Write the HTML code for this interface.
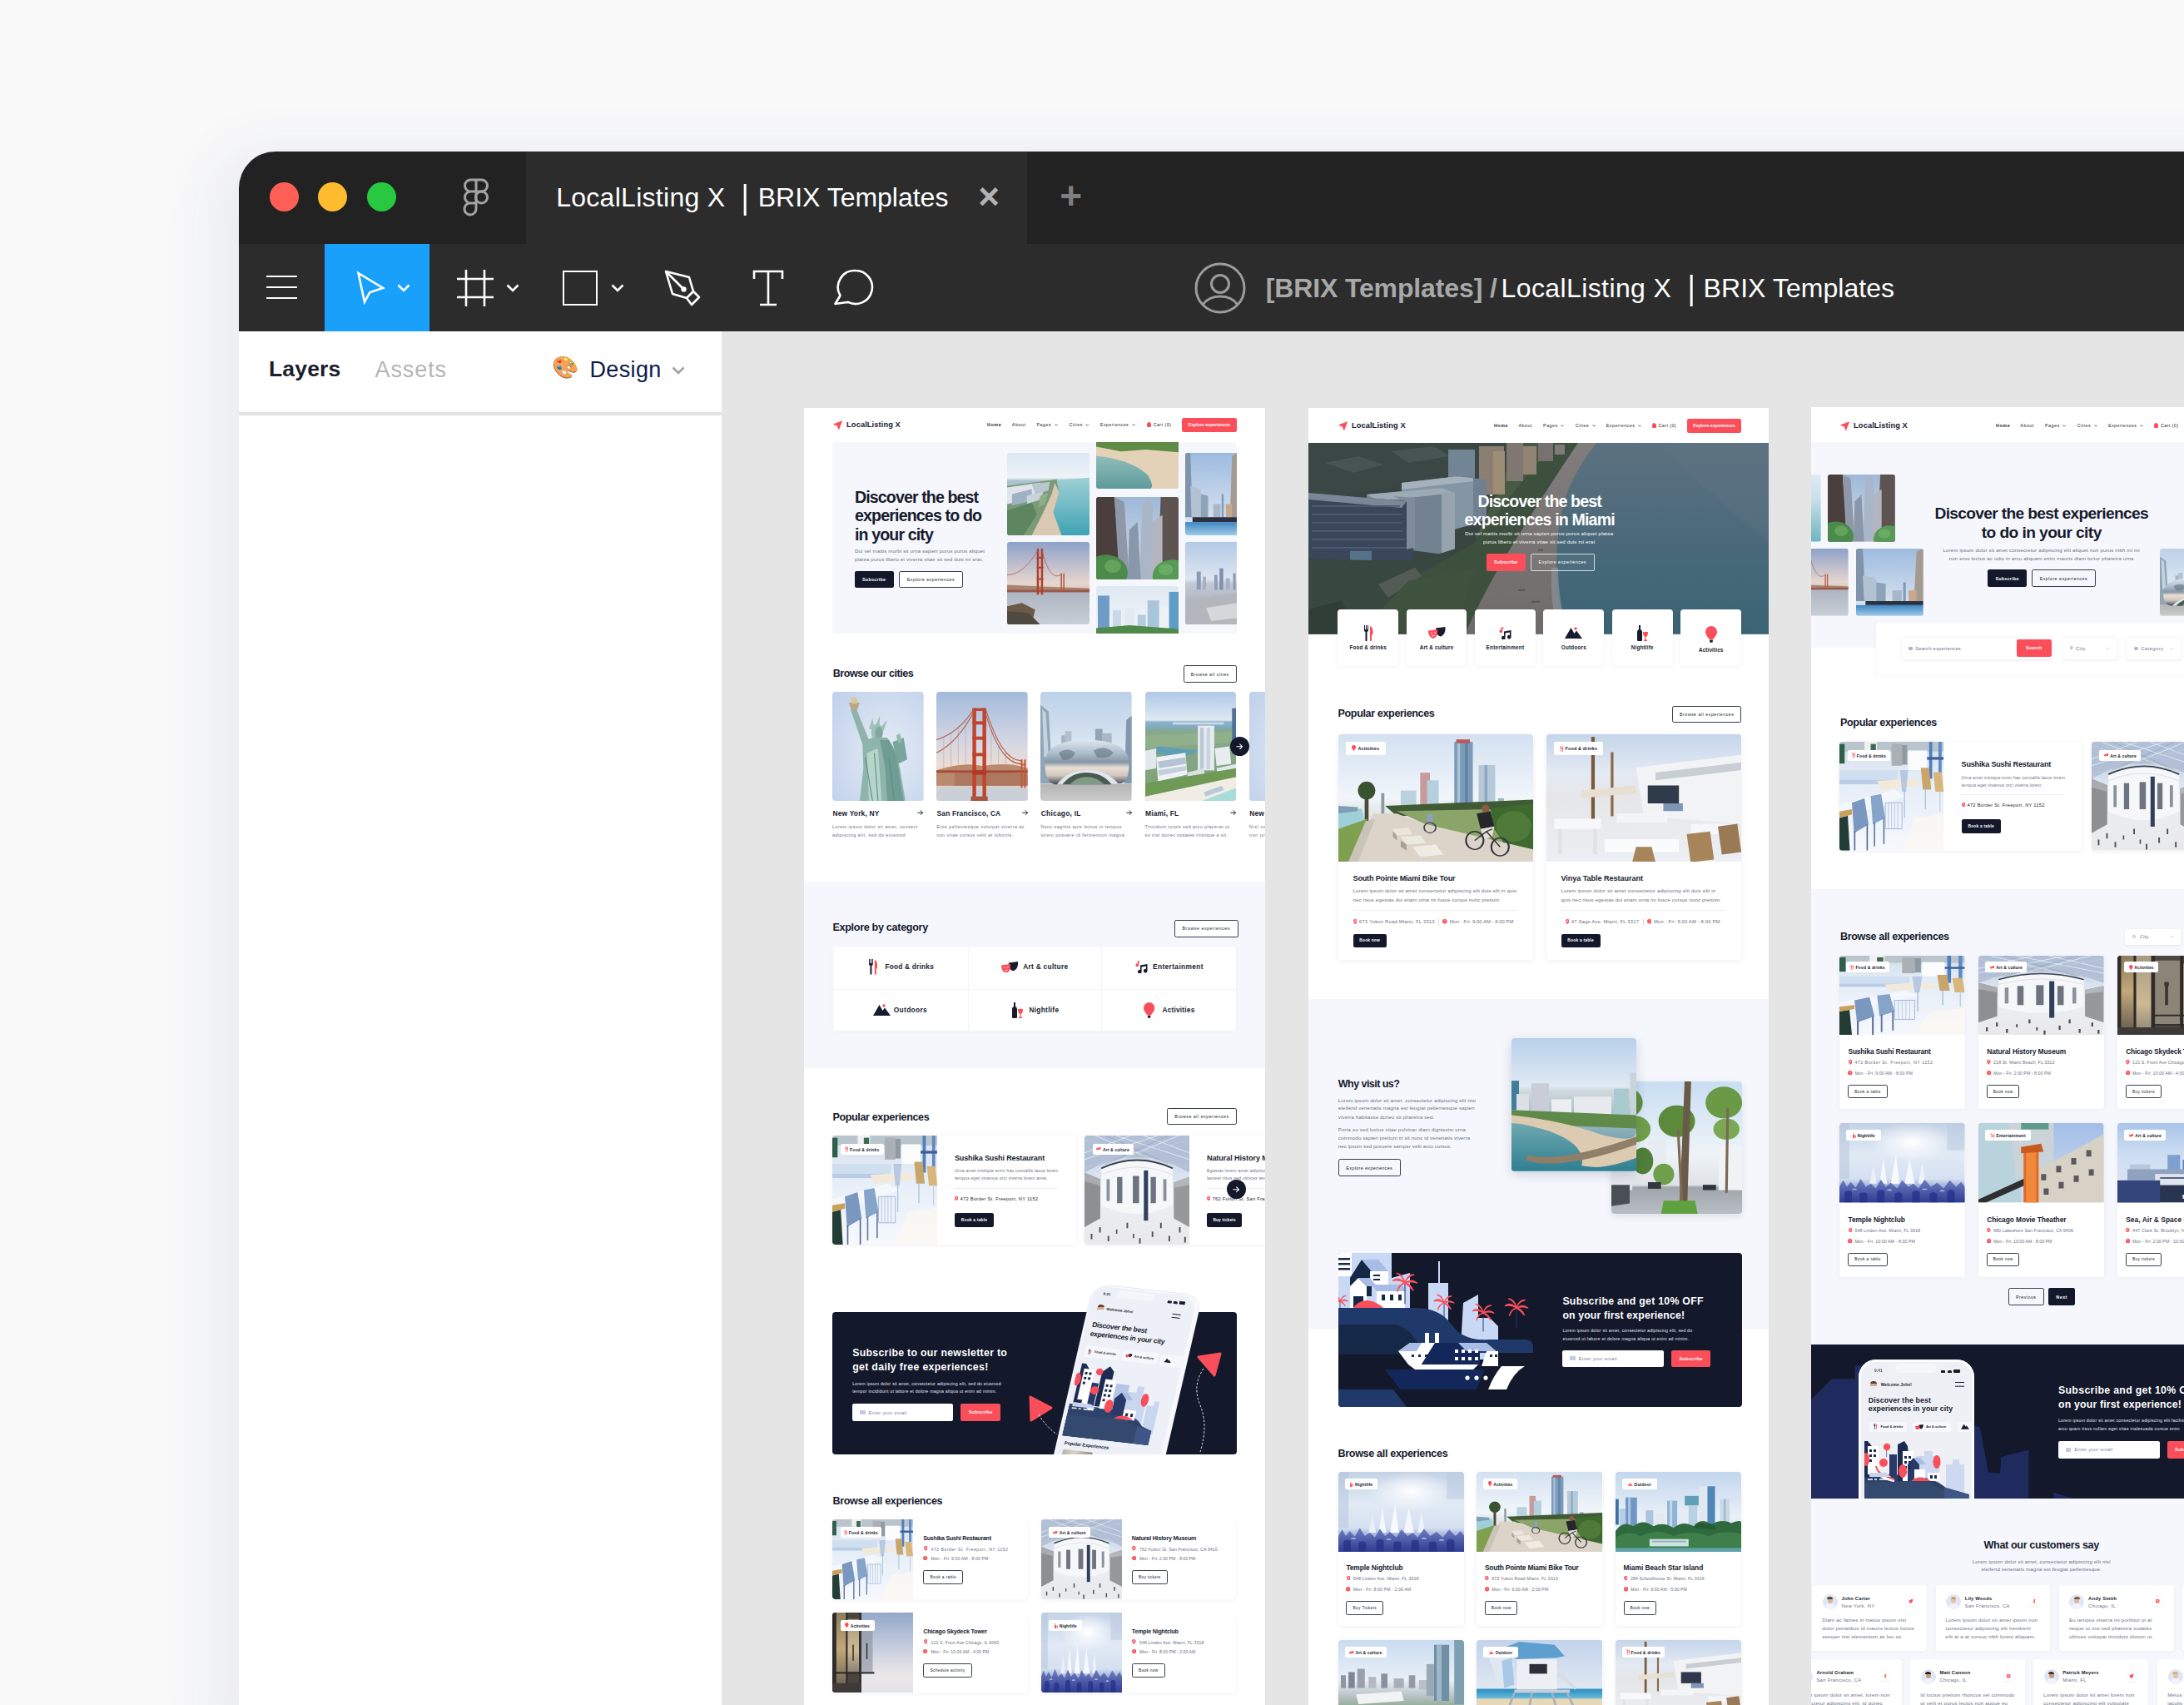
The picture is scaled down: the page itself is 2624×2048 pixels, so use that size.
<!DOCTYPE html>
<html lang="en"><head><meta charset="utf-8"><title>LocalListing X | BRIX Templates</title>
<style>
*{box-sizing:border-box;margin:0;padding:0}
html,body{width:2624px;height:2048px;overflow:hidden;background:#f9f9fa;font-family:"Liberation Sans",sans-serif}
#win{position:absolute;left:287px;top:182px;width:2400px;height:1900px;border-radius:44px 0 0 0;background:#fff;box-shadow:-20px 10px 70px 10px rgba(40,50,110,.07);overflow:hidden}
#win div,#win span,#win svg{position:absolute}
#win span{white-space:nowrap}
#tb{left:0;top:0;width:2400px;height:111px;background:#222}
#tool{left:0;top:110.5px;width:2400px;height:105.5px;background:#2c2c2c}
#canvas{left:580px;top:216px;width:1800px;height:1700px;background:#e5e5e5;overflow:hidden}
.ab{background:#fff;overflow:hidden}

</style></head><body>
<svg width="0" height="0" style="position:absolute;left:0;top:0"><defs><linearGradient id="gMi" x1="0" y1="0" x2="0" y2="1"><stop offset="0" stop-color="#dbe7f3"/><stop offset="0.3" stop-color="#eef3f7"/><stop offset="0.34" stop-color="#a9c4cf"/><stop offset="1" stop-color="#8fb6bf"/></linearGradient><linearGradient id="gSea" x1="0" y1="0" x2="0" y2="1"><stop offset="0" stop-color="#9fd0d6"/><stop offset="1" stop-color="#3fa3b3"/></linearGradient><linearGradient id="gSeaD" x1="0" y1="0" x2="0" y2="1"><stop offset="0" stop-color="#667c8b"/><stop offset="0.45" stop-color="#547585"/><stop offset="1" stop-color="#3f6e7e"/></linearGradient><linearGradient id="gSandD" x1="0" y1="0" x2="0" y2="1"><stop offset="0" stop-color="#8f8a88"/><stop offset="1" stop-color="#7b7672"/></linearGradient><linearGradient id="gGG" x1="0" y1="0" x2="0" y2="1"><stop offset="0" stop-color="#8ea2c9"/><stop offset="0.5" stop-color="#e6d6cf"/><stop offset="0.56" stop-color="#dccbc2"/><stop offset="0.58" stop-color="#aab3c0"/><stop offset="1" stop-color="#c9ced6"/></linearGradient><linearGradient id="gG2" x1="0" y1="0" x2="0" y2="1"><stop offset="0" stop-color="#a3badb"/><stop offset="0.45" stop-color="#d3d6e3"/><stop offset="0.68" stop-color="#ebddd6"/><stop offset="0.86" stop-color="#d9cdc9"/><stop offset="1" stop-color="#cdd2da"/></linearGradient><linearGradient id="gBe" x1="0" y1="0" x2="0" y2="1"><stop offset="0" stop-color="#8fbdb8"/><stop offset="1" stop-color="#5f9a9c"/></linearGradient><linearGradient id="gNy" x1="0" y1="0" x2="0" y2="1"><stop offset="0" stop-color="#9fb8d8"/><stop offset="1" stop-color="#d5dfea"/></linearGradient><linearGradient id="gSk" x1="0" y1="0" x2="0" y2="1"><stop offset="0" stop-color="#dfe9f2"/><stop offset="1" stop-color="#f2f5f8"/></linearGradient><linearGradient id="gRi" x1="0" y1="0" x2="0" y2="1"><stop offset="0" stop-color="#9dbbe0"/><stop offset="0.7" stop-color="#cfdcec"/><stop offset="1" stop-color="#dfe8f2"/></linearGradient><linearGradient id="gRw" x1="0" y1="0" x2="0" y2="1"><stop offset="0" stop-color="#3f86c3"/><stop offset="1" stop-color="#9fcbe6"/></linearGradient><linearGradient id="gLa" x1="0" y1="0" x2="0" y2="1"><stop offset="0" stop-color="#b3c9e6"/><stop offset="0.45" stop-color="#dde6f0"/><stop offset="0.5" stop-color="#c3cad6"/><stop offset="1" stop-color="#9a9fa8"/></linearGradient><radialGradient id="gLi" cx="0.6" cy="0.55" r="0.75"><stop offset="0" stop-color="#e6ecf6"/><stop offset="1" stop-color="#c2d2eb"/></radialGradient><linearGradient id="gBn" x1="0" y1="0" x2="0" y2="1"><stop offset="0" stop-color="#bcd1e8"/><stop offset="0.62" stop-color="#e1eaf3"/><stop offset="0.84" stop-color="#dfe5ea"/><stop offset="0.85" stop-color="#b5b5b6"/><stop offset="1" stop-color="#cbcbcc"/></linearGradient><linearGradient id="gBn2" x1="0" y1="0" x2="0" y2="1"><stop offset="0" stop-color="#dce6ef"/><stop offset="0.3" stop-color="#aebdcb"/><stop offset="0.5" stop-color="#8596a6"/><stop offset="0.62" stop-color="#e9dfd5"/><stop offset="0.8" stop-color="#cfc6bd"/><stop offset="1" stop-color="#3f4650"/></linearGradient><linearGradient id="gMc" x1="0" y1="0" x2="0" y2="1"><stop offset="0" stop-color="#afc8e8"/><stop offset="0.26" stop-color="#dfe9f3"/><stop offset="0.275" stop-color="#8fb3cc"/><stop offset="0.33" stop-color="#7fa9bf"/><stop offset="0.35" stop-color="#86a98f"/><stop offset="1" stop-color="#7da26e"/></linearGradient><linearGradient id="gRe" x1="0" y1="0" x2="0" y2="1"><stop offset="0" stop-color="#d3dde8"/><stop offset="0.3" stop-color="#e3ecf6"/><stop offset="0.7" stop-color="#eef3fa"/><stop offset="1" stop-color="#f6f8fc"/></linearGradient><linearGradient id="gMu" x1="0" y1="0" x2="0" y2="1"><stop offset="0" stop-color="#b3c3da"/><stop offset="0.3" stop-color="#d3deec"/><stop offset="0.55" stop-color="#eceef2"/><stop offset="1" stop-color="#e9e9eb"/></linearGradient><linearGradient id="gSd" x1="0" y1="0" x2="0" y2="1"><stop offset="0" stop-color="#93a7c9"/><stop offset="0.5" stop-color="#cdd3e0"/><stop offset="0.78" stop-color="#ebe7e8"/><stop offset="1" stop-color="#e3e3e8"/></linearGradient><linearGradient id="gSd2" x1="0" y1="0" x2="0" y2="1"><stop offset="0" stop-color="#8d7c5e"/><stop offset="0.45" stop-color="#c2a878"/><stop offset="1" stop-color="#5f574b"/></linearGradient><linearGradient id="gSd3" x1="0" y1="0" x2="0" y2="1"><stop offset="0" stop-color="#a79a82"/><stop offset="0.6" stop-color="#cdb993"/><stop offset="1" stop-color="#8a8275"/></linearGradient><linearGradient id="gCl" x1="0" y1="0" x2="0" y2="1"><stop offset="0" stop-color="#c3d2e6"/><stop offset="0.4" stop-color="#e1eaf5"/><stop offset="0.7" stop-color="#d5e0f0"/><stop offset="0.78" stop-color="#a9b8dc"/><stop offset="1" stop-color="#4f5fa8"/></linearGradient><radialGradient id="gClr" cx="0.5" cy="0.5" r="0.5"><stop offset="0" stop-color="#ffffff"/><stop offset="1" stop-color="rgba(255,255,255,0)"/></radialGradient><linearGradient id="gClc" x1="0" y1="0" x2="0" y2="1"><stop offset="0" stop-color="#6f7fc0"/><stop offset="1" stop-color="#2f3c92"/></linearGradient><linearGradient id="gBk" x1="0" y1="0" x2="0" y2="1"><stop offset="0" stop-color="#d3e1f1"/><stop offset="0.5" stop-color="#f1f6fa"/><stop offset="0.56" stop-color="#e6ecef"/><stop offset="1" stop-color="#d9d0c4"/></linearGradient><linearGradient id="gTe" x1="0" y1="0" x2="0" y2="1"><stop offset="0" stop-color="#c5d5ea"/><stop offset="0.3" stop-color="#e3eaf3"/><stop offset="0.5" stop-color="#e6e6e8"/><stop offset="1" stop-color="#eceff3"/></linearGradient><linearGradient id="gAe" x1="0" y1="0" x2="0" y2="1"><stop offset="0" stop-color="#b9d0ea"/><stop offset="0.36" stop-color="#dfe9f3"/><stop offset="0.4" stop-color="#cfd8dd"/><stop offset="1" stop-color="#3f8494"/></linearGradient><linearGradient id="gAe2" x1="0" y1="0" x2="0" y2="1"><stop offset="0" stop-color="#6fa8b0"/><stop offset="1" stop-color="#2f7f92"/></linearGradient><linearGradient id="gPa" x1="0" y1="0" x2="0" y2="1"><stop offset="0" stop-color="#c9def2"/><stop offset="0.55" stop-color="#eef3f8"/><stop offset="0.78" stop-color="#dfe3e6"/><stop offset="0.8" stop-color="#9fa5ab"/><stop offset="1" stop-color="#b9bec4"/></linearGradient><linearGradient id="gIs" x1="0" y1="0" x2="0" y2="1"><stop offset="0" stop-color="#c3d6ee"/><stop offset="0.55" stop-color="#e9f0f7"/><stop offset="1" stop-color="#dfe8ee"/></linearGradient><linearGradient id="gAc" x1="0" y1="0" x2="0" y2="1"><stop offset="0" stop-color="#c9dcf0"/><stop offset="0.5" stop-color="#e8eff6"/><stop offset="0.7" stop-color="#b9c3c6"/><stop offset="1" stop-color="#5f8f55"/></linearGradient><linearGradient id="gGu" x1="0" y1="0" x2="0" y2="1"><stop offset="0" stop-color="#c3d3ea"/><stop offset="0.6" stop-color="#dfe7f2"/><stop offset="0.62" stop-color="#2f8fc0"/><stop offset="0.72" stop-color="#5fb8dc"/><stop offset="0.74" stop-color="#e8d8b8"/><stop offset="1" stop-color="#e3d3b3"/></linearGradient><linearGradient id="gTh" x1="0" y1="0" x2="0" y2="1"><stop offset="0" stop-color="#a3bfe8"/><stop offset="1" stop-color="#cfdcf0"/></linearGradient><linearGradient id="gSa" x1="0" y1="0" x2="0" y2="1"><stop offset="0" stop-color="#a9c5ea"/><stop offset="0.42" stop-color="#cfdff2"/><stop offset="1" stop-color="#dfe6f0"/></linearGradient><linearGradient id="gTl" x1="0" y1="0" x2="0" y2="1"><stop offset="0" stop-color="#dfeaf3"/><stop offset="0.35" stop-color="#c9e0ea"/><stop offset="1" stop-color="#6fb5c0"/></linearGradient><filter id="b1" x="-5%" y="-5%" width="110%" height="110%"><feGaussianBlur stdDeviation="1"/></filter><filter id="b2" x="-5%" y="-5%" width="110%" height="110%"><feGaussianBlur stdDeviation="2.500"/></filter><filter id="b05"><feGaussianBlur stdDeviation=".5"/></filter></defs><symbol id="p-miami" viewBox="0 0 100 100" preserveAspectRatio="none"><rect x="0" y="0" width="100" height="100" fill="url(#gMi)"/><polygon points="58,33 100,30 100,100 66,100 56,72 63,48" fill="url(#gSea)"/><polygon points="0,40 60,32 63,48 56,72 66,100 0,100" fill="#7b9b78"/><polygon points="58,36 63,48 56,72 66,100 30,100 44,72 54,50" fill="#d9c9b2"/><polygon points="0,42 40,36 38,52 20,58 0,62" fill="#dfe5ea"/><polygon points="6,50 30,44 30,58 6,64" fill="#9fb2c4"/><polygon points="24,52 44,46 42,56 24,62" fill="#c9d3dc"/><polygon points="0,70 30,60 36,75 20,100 0,100" fill="#5d8560"/><polygon points="30,38 52,35 50,46 34,50" fill="#b9c6cf"/><polygon points="40,52 50,48 46,62 38,66" fill="#8fae86"/></symbol><symbol id="p-miamidark" viewBox="0 0 554 230" preserveAspectRatio="none"><rect x="0" y="0" width="554" height="230" fill="#3d4a44"/><path d="M338 0H554V230H306Q296 190 296 150Q296 100 306 60Q318 30 338 0Z" fill="url(#gSeaD)"/><path d="M420 0H554V120Q480 60 420 0Z" fill="#6d8392" opacity=".35" filter="url(#b2)"/><path d="M322 0H346Q322 30 310 62Q298 100 298 150Q298 195 310 230H186Q214 170 252 110Q290 50 322 0Z" fill="url(#gSandD)"/><path d="M300 150Q300 190 312 230H300Q290 190 292 150Z" fill="#9aa3a6" opacity=".7"/><path d="M286 0H324Q290 50 252 112Q214 172 188 230H60L120 160L200 120Z" fill="#42573f"/><path d="M200 118L262 40L296 0H240L226 60Z" fill="#4f6248"/><path d="M0 0H250L226 64L110 52L0 70Z" fill="#3f4d47"/><path d="M20 24l40-8 30 10-36 10zM100 10l50-6 20 12-50 8z" fill="#56635e" opacity=".7"/><rect x="168" y="8" width="32" height="34" fill="#7f93a3"/><rect x="205" y="4" width="30" height="58" fill="#9a8d7c"/><rect x="222" y="10" width="14" height="52" fill="#b09c80"/><rect x="238" y="0" width="20" height="46" fill="#8f8479"/><rect x="258" y="4" width="16" height="34" fill="#a3927e"/><rect x="276" y="0" width="18" height="22" fill="#857d78"/><rect x="296" y="2" width="12" height="12" fill="#8d8884"/><path d="M112 48L198 38V98L176 104L112 98Z" fill="#93a5b3"/><path d="M112 48L198 38V46L112 56Z" fill="#b9c7d1"/><path d="M176 40L214 44V92L198 98V38Z" fill="#7d8e9c"/><path d="M70 62L160 54L176 60V128L160 134L70 122Z" fill="#7f909f"/><path d="M70 62L160 54L176 60L84 70Z" fill="#aebdc8"/><path d="M160 60L176 60V128L160 134Z" fill="#a9b7c2"/><path d="M0 60L118 70V122L126 124V142L60 146L0 138Z" fill="#3f4d60"/><path d="M0 60L118 70L112 78L0 68Z" fill="#8797a6"/><path d="M102 64L128 66V126L118 128L118 70Z" fill="#8d9ba8"/><path d="M4 76H110M4 86H112M4 96H112M4 106H114M4 116H116M4 126H118" fill="none" stroke="#56657a" stroke-width="1.600"/><path d="M50 130h26v12H50z" fill="#5f7e98"/><path d="M0 140L130 142L200 120L120 166L60 230H0Z" fill="#3d4d42"/><path d="M84 170L128 150L136 160L96 186Z" fill="#5d6459"/><path d="M0 200L40 190L60 230H0Z" fill="#35423a"/><path d="M120 166L200 150L186 200L150 230H60Z" fill="#45593f"/><path d="M236 150h6v2h-6zM252 176h8v2h-8zM268 190h10v2h-10zM276 128h6v2h-6z" fill="#5f5d5e"/><rect x="0" y="0" width="554" height="230" fill="#1b2433" opacity=".12"/></symbol><symbol id="p-gate" viewBox="0 0 100 100" preserveAspectRatio="none"><rect x="0" y="0" width="100" height="100" fill="url(#gGG)"/><polygon points="0,52 40,54 100,56 100,60 0,60" fill="#a88472"/><rect x="0" y="58" width="100" height="3" fill="#9a5a48"/><rect x="36" y="8" width="2.6" height="56" fill="#b0412c"/><rect x="41" y="8" width="2.6" height="56" fill="#b0412c"/><rect x="36" y="18" width="8" height="2" fill="#b0412c"/><rect x="36" y="30" width="8" height="2" fill="#b0412c"/><rect x="36" y="44" width="8" height="2" fill="#b0412c"/><rect x="65" y="38" width="1.6" height="22" fill="#b85a42"/><rect x="68" y="38" width="1.6" height="22" fill="#b85a42"/><path d="M0 40 Q20 40 38 9 M42 9 Q52 50 66 39" fill="none" stroke="#b0614c" stroke-width=".8"/><polygon points="0,78 18,74 34,82 30,100 0,100" fill="#6b5a48"/><polygon points="0,84 26,86 40,100 0,100" fill="#4f4a42"/></symbol><symbol id="p-gate2" viewBox="0 0 100 100" preserveAspectRatio="none"><rect x="0" y="0" width="100" height="100" fill="url(#gG2)"/><path d="M0 72Q30 64 50 68Q80 64 100 70V86H0Z" fill="#b98a6e"/><path d="M20 74Q50 70 100 76V86H20Z" fill="#a8705a" opacity=".7"/><rect x="0" y="88" width="100" height="12" fill="#cbd0d8"/><rect x="0" y="72" width="100" height="2.2" fill="#a84c36"/><rect x="39.5" y="15" width="4" height="85" fill="#c0432b"/><rect x="50.5" y="15" width="4" height="85" fill="#c0432b"/><rect x="39.5" y="15" width="15" height="2.5" fill="#c0432b"/><rect x="39.5" y="27" width="15" height="3" fill="#c0432b"/><rect x="39.5" y="41" width="15" height="3" fill="#c0432b"/><rect x="39.5" y="56" width="15" height="3" fill="#c0432b"/><rect x="39.5" y="72" width="15" height="4" fill="#b03a25"/><rect x="38" y="96" width="18" height="4" fill="#a8553f"/><rect x="92.5" y="62" width="1.8" height="26" fill="#c4553c"/><rect x="96" y="62" width="1.8" height="26" fill="#c4553c"/><rect x="92.5" y="66" width="5.3" height="1.5" fill="#c4553c"/><path d="M0 44Q24 38 41 16M0 56Q24 46 41 18M54 16Q72 64 93 63M54 20Q70 66 93 66" fill="none" stroke="#b0614c" stroke-width=".9"/><path d="M8 42v30M16 38v34M24 33v39M32 26v46M60 34v38M68 48v24M76 56v16M84 61v11" fill="none" stroke="#c08a7a" stroke-width=".35"/><rect x="38" y="96" width="18" height="4" fill="#a8553f"/></symbol><symbol id="p-beach" viewBox="0 0 100 100" preserveAspectRatio="none"><rect x="0" y="0" width="100" height="100" fill="#e3d2b8"/><polygon points="0,0 100,0 100,22 60,16 30,20 0,10" fill="#5f8b47"/><path d="M0 30 Q40 36 62 70 Q70 92 66 100 L0 100Z" fill="url(#gBe)"/></symbol><symbol id="p-nyc" viewBox="0 0 100 100" preserveAspectRatio="none"><rect x="0" y="0" width="100" height="100" fill="url(#gNy)"/><polygon points="0,0 22,0 30,100 0,100" fill="#4a3f3d"/><polygon points="22,0 34,6 40,100 28,100" fill="#8f98a8"/><polygon points="56,8 62,0 68,10 70,100 52,100" fill="#a9b6c8"/><polygon points="40,40 50,30 54,100 38,100" fill="#8a97ab"/><polygon points="78,0 100,0 100,100 74,100" fill="#5d5350"/><polygon points="68,30 80,22 80,100 66,100" fill="#b3b6be"/><ellipse cx="12" cy="92" rx="26" ry="22" fill="#4a8a4a"/><ellipse cx="92" cy="96" rx="24" ry="20" fill="#579a55"/><ellipse cx="20" cy="84" rx="10" ry="8" fill="#63a35d"/><ellipse cx="84" cy="88" rx="9" ry="7" fill="#6aac63"/></symbol><symbol id="p-skyline" viewBox="0 0 100 100" preserveAspectRatio="none"><rect x="0" y="0" width="100" height="100" fill="url(#gSk)"/><rect x="2" y="20" width="14" height="80" fill="#6f9cc6"/><rect x="20" y="50" width="10" height="50" fill="#c9d8e6"/><rect x="34" y="46" width="12" height="54" fill="#e3ebf2"/><rect x="50" y="60" width="10" height="40" fill="#b5cde0"/><rect x="62" y="30" width="14" height="70" fill="#a9c5dc"/><rect x="78" y="44" width="12" height="56" fill="#eef2f6"/><rect x="88" y="12" width="12" height="88" fill="#5f9cc8"/><polygon points="0,88 40,82 100,90 100,100 0,100" fill="#4f8a4a"/></symbol><symbol id="p-river" viewBox="0 0 100 100" preserveAspectRatio="none"><rect x="0" y="0" width="100" height="100" fill="url(#gRi)"/><polygon points="0,0 10,0 14,78 0,78" fill="#7f93ab"/><polygon points="10,40 30,44 30,78 12,78" fill="#b3c2d2"/><polygon points="30,50 44,52 44,78 30,78" fill="#8fa3b8"/><rect x="70" y="50" width="4" height="28" fill="#7f9cc0"/><rect x="54" y="62" width="14" height="16" fill="#a9b8c8"/><polygon points="90,4 100,0 100,78 86,78" fill="#a59a90"/><rect x="78" y="62" width="12" height="16" fill="#c8a890"/><rect x="14" y="78" width="86" height="6" fill="#2b3140"/><rect x="0" y="84" width="100" height="16" fill="url(#gRw)"/></symbol><symbol id="p-la" viewBox="0 0 100 100" preserveAspectRatio="none"><rect x="0" y="0" width="100" height="100" fill="url(#gLa)"/><rect x="22" y="36" width="8" height="22" fill="#8c9bb5"/><rect x="34" y="42" width="6" height="16" fill="#a3afc4"/><rect x="56" y="40" width="6" height="18" fill="#8f9db6"/><rect x="66" y="32" width="7" height="26" fill="#7f8fae"/><rect x="78" y="44" width="8" height="14" fill="#a9b3c6"/><rect x="92" y="38" width="5" height="20" fill="#8c9bb5"/><polygon points="0,70 100,62 100,100 0,100" fill="#b3b6bd"/><polygon points="40,80 100,74 100,92 50,96" fill="#d5d7db"/></symbol><symbol id="p-liberty" viewBox="0 0 100 100" preserveAspectRatio="none"><rect x="0" y="0" width="100" height="100" fill="url(#gLi)"/><polygon points="20,16 26,15 40,44 33,48" fill="#8fb3ab"/><polygon points="18,10 30,10 27,17 21,17" fill="#b9a884"/><ellipse cx="24" cy="8" rx="3.5" ry="3" fill="#d9c79a"/><path d="M40 34 44 24 46 33 52 22 52 33 60 26 56 36Z" fill="#9fc3b8"/><ellipse cx="49" cy="37" rx="6.5" ry="7.5" fill="#9cc0b5"/><ellipse cx="51" cy="38" rx="4" ry="6" fill="#7fa89f"/><polygon points="33,46 44,42 60,42 68,52 74,70 80,100 30,100 34,70" fill="#8db5ab"/><polygon points="52,44 62,44 70,58 78,100 60,100 58,70" fill="#6f9c93"/><polygon points="38,56 50,52 54,100 40,100" fill="#b5d5cb"/><polygon points="66,46 78,42 82,62 72,66" fill="#7aa59c"/><polygon points="70,40 74,38 76,46 72,47" fill="#93b9af"/><path d="M36 60L44 100M46 56L50 100M62 60L68 100" fill="none" stroke="#5f8c84" stroke-width="1"/></symbol><symbol id="p-bean" viewBox="0 0 100 100" preserveAspectRatio="none"><rect x="0" y="0" width="100" height="100" fill="url(#gBn)"/><polygon points="0,12 9,18 12,64 14,84 0,84" fill="#8fa6b8"/><polygon points="2,16 6,19 9,60 4,60" fill="#c3d3df"/><polygon points="94,26 100,22 100,84 92,84" fill="#8298ac"/><rect x="23" y="40" width="5" height="16" fill="#a3b3c3"/><rect x="27" y="36" width="7" height="20" fill="#b3c1cf"/><rect x="60" y="34" width="8" height="22" fill="#93a5b5"/><rect x="68" y="38" width="10" height="18" fill="#a9b8c6"/><rect x="44" y="46" width="8" height="10" fill="#bcc8d4"/><path d="M5 66Q5 44 50 44Q97 44 97 66Q97 85 85 84Q72 71 50 72Q30 72 18 85Q5 85 5 66Z" fill="url(#gBn2)"/><path d="M20 56Q30 50 38 56Q34 64 24 62Z M58 54Q70 48 80 56Q74 62 62 60Z" fill="#5d6c7a" opacity=".55"/><path d="M24 85Q34 74 50 74Q68 74 78 85Z" fill="#4a5a50"/><path d="M32 85Q40 78 50 78Q62 78 70 85Z" fill="#7f9a86"/></symbol><symbol id="p-miamicity" viewBox="0 0 100 100" preserveAspectRatio="none"><rect x="0" y="0" width="100" height="100" fill="url(#gMc)"/><rect x="30" y="28" width="56" height="2" fill="#dfe6ee" opacity=".8"/><polygon points="0,40 100,36 100,46 0,52" fill="#8fb08a"/><polygon points="14,50 60,54 40,60 6,56" fill="#5f9fb5"/><rect x="57.5" y="31" width="18" height="41" fill="#e6ebf1"/><rect x="60" y="33" width="4" height="38" fill="#b9c6d4"/><rect x="67" y="33" width="4" height="38" fill="#c9d3de"/><rect x="95" y="15" width="5" height="42" fill="#50709a"/><polygon points="12,60 44,56 46,76 14,82" fill="#eef1f5"/><polygon points="14,64 44,60 45,66 15,70" fill="#b5c3d2"/><polygon points="14,72 45,68 45,72 15,77" fill="#c3cfdb"/><polygon points="0,54 12,52 12,70 0,72" fill="#e3e8ee"/><polygon points="76,52 92,50 94,66 78,68" fill="#e9edf2"/><polygon points="46,74 64,70 66,80 48,84" fill="#d9dfe7"/><polygon points="78,70 100,66 100,76 80,80" fill="#e3e8ed"/><polygon points="0,84 100,70 100,80 0,96" fill="#6f9a55"/><polygon points="0,96 100,78 100,100 0,100" fill="#f1ede5"/><polygon points="62,100 100,88 100,100" fill="#a9dcd8"/><polygon points="64,92 84,86 86,90 66,96" fill="#b9c9d9"/></symbol><symbol id="p-rest" viewBox="0 0 100 100" preserveAspectRatio="none"><rect x="0" y="0" width="100" height="100" fill="url(#gRe)"/><rect x="0" y="0" width="100" height="9" fill="#b9c4cc"/><rect x="24" y="0" width="12" height="9" fill="#eef0f2"/><rect x="30" y="2" width="5" height="12" fill="#3f6a52"/><rect x="0" y="2" width="5" height="18" fill="#2f5f4a"/><rect x="50" y="2" width="10" height="20" fill="#aab0b3"/><rect x="60" y="3" width="5" height="18" fill="#8f9aa2"/><rect x="66" y="8" width="18" height="18" fill="#fbfcfd"/><rect x="86" y="0" width="3" height="34" fill="#4f7fc0"/><rect x="95" y="0" width="3" height="34" fill="#5f8ac6"/><rect x="84" y="14" width="16" height="2.5" fill="#3f5f98"/><rect x="0" y="26" width="56" height="9" fill="#cfdff0"/><rect x="0" y="35" width="50" height="4" fill="#b9cde6"/><polygon points="36,36 72,34 80,40 40,44" fill="#f3e9d8"/><polygon points="0,58 52,44 64,50 0,72" fill="#f4f7fb"/><polygon points="58,26 66,26 64,46 60,46" fill="#b7c9e2"/><polygon points="78,24 86,24 88,44 80,44" fill="#c9a56a"/><polygon points="90,28 98,28 100,46 92,46" fill="#d9b57a"/><rect x="62" y="44" width="0.8" height="26" fill="#9fb5d6"/><rect x="82" y="42" width="0.8" height="20" fill="#9fb5d6"/><rect x="96" y="44" width="0.8" height="20" fill="#b9c8e0"/><path d="M44 56h16v24H44z" fill="none" stroke="#8fa8d0" stroke-width=".6"/><path d="M47 56v24M50 56v24M53 56v24M56 56v24" fill="none" stroke="#9fb5d8" stroke-width=".5"/><polygon points="12,56 24,52 28,76 14,84" fill="#7a97c0"/><polygon points="30,50 40,48 44,70 32,76" fill="#86a3ca"/><rect x="14" y="82" width="1.3" height="18" fill="#4f6a95"/><rect x="26" y="76" width="1.3" height="24" fill="#4f6a95"/><rect x="33" y="74" width="1.3" height="22" fill="#5f7aa5"/><rect x="42" y="70" width="1.3" height="24" fill="#5f7aa5"/><polygon points="0,70 8,68 10,100 0,100" fill="#243c36"/><polygon points="0,64 12,62 12,67 0,70" fill="#c9a25a"/><polygon points="72,70 100,66 100,100 60,100" fill="#fbf7f3" opacity=".8"/></symbol><symbol id="p-museum" viewBox="0 0 100 100" preserveAspectRatio="none"><rect x="0" y="0" width="100" height="100" fill="url(#gMu)"/><path d="M0 0H100V34Q50 6 0 34Z" fill="#b1c0d6"/><path d="M0 4L100 30M0 30L100 4M10 0L70 24M90 0L30 24M0 16L44 0M100 16L56 0M0 22L70 0M100 22L30 0" fill="none" stroke="#eef2f8" stroke-width=".6"/><path d="M0 4L100 30M0 30L100 4M20 0L80 26M80 0L20 26" fill="none" stroke="#6d7c96" stroke-width=".25"/><polygon points="0,34 15,40 15,76 0,84" fill="#8d8f93"/><polygon points="0,34 15,40 15,46 0,42" fill="#a9abae"/><polygon points="100,38 85,43 85,76 100,84" fill="#96989c"/><polygon points="100,38 85,43 85,48 100,45" fill="#b3b5b8"/><path d="M16 30Q50 14 84 30V64Q50 80 16 64Z" fill="#f6f7f9"/><path d="M16 30Q50 15 84 30" fill="none" stroke="#39414f" stroke-width="1.400"/><path d="M16 36Q50 22 84 36" fill="none" stroke="#d5d9e0" stroke-width=".6"/><rect x="21" y="40" width="3" height="20" fill="#8b919c"/><rect x="31" y="38" width="5" height="24" fill="#6d7480"/><rect x="46" y="37" width="6" height="25" fill="#6d7480"/><rect x="63" y="38" width="5" height="24" fill="#6d7480"/><rect x="75" y="40" width="3" height="20" fill="#8b919c"/><rect x="56.5" y="32" width="4" height="46" fill="#2f3f5c"/><path d="M6 90h1.500v5h-1.500zM14 84h1.500v5h-1.500zM22 92h1.500v5h-1.500zM40 80h1.500v5h-1.500zM52 94h1.500v5h-1.500zM64 88h1.500v5h-1.500zM72 80h1.500v5h-1.500zM80 92h1.500v5h-1.500zM90 84h1.500v5h-1.500zM95 93h1.500v5h-1.500zM30 86h1.300v4h-1.300zM46 90h1.300v4h-1.300z" fill="#4a4d55"/></symbol><symbol id="p-skydeck" viewBox="0 0 100 100" preserveAspectRatio="none"><rect x="0" y="0" width="100" height="100" fill="url(#gSd)"/><rect x="0" y="0" width="36" height="100" fill="#4a443f"/><rect x="0" y="0" width="5" height="100" fill="#2f2b29"/><rect x="5" y="0" width="12" height="100" fill="url(#gSd2)"/><rect x="17" y="0" width="2" height="100" fill="#2d2a28"/><rect x="19" y="8" width="14" height="66" fill="url(#gSd3)"/><rect x="33" y="0" width="3" height="100" fill="#353130"/><rect x="25" y="40" width="1.6" height="20" fill="#3a3634"/><rect x="36" y="18" width="14" height="56" fill="#8b909c" opacity=".6"/><rect x="42" y="38" width="1.6" height="20" fill="#33333a"/><rect x="0" y="74" width="52" height="2.2" fill="#2c2a2b"/><rect x="0" y="88" width="36" height="12" fill="#3d3a38"/></symbol><symbol id="p-skydeck2" viewBox="0 0 100 100" preserveAspectRatio="none"><rect x="0" y="0" width="100" height="100" fill="url(#gSd)"/><rect x="0" y="0" width="86" height="100" fill="#4d4742"/><rect x="0" y="0" width="3" height="100" fill="#2f2b29"/><rect x="3" y="0" width="10" height="100" fill="url(#gSd2)"/><rect x="13" y="0" width="2" height="100" fill="#2d2a28"/><rect x="15" y="0" width="12" height="100" fill="url(#gSd3)"/><rect x="27" y="0" width="3" height="100" fill="#2f2b2a"/><rect x="30" y="6" width="20" height="80" fill="#8d8478"/><rect x="50" y="0" width="2.5" height="100" fill="#2f2b2a"/><rect x="52.5" y="10" width="22" height="76" fill="#a39b92"/><rect x="74.5" y="0" width="2.5" height="100" fill="#353130"/><rect x="77" y="14" width="9" height="70" fill="#b5b0ad"/><rect x="38" y="36" width="2.4" height="26" fill="#3a3634"/><rect x="37.4" y="33" width="3.6" height="5" fill="#3a3634"/><rect x="62" y="36" width="2.4" height="26" fill="#4a4644"/><rect x="61.4" y="33" width="3.6" height="5" fill="#4a4644"/><rect x="28" y="74" width="58" height="2" fill="#2c2a2b"/><rect x="28" y="86" width="58" height="1.6" fill="#2c2a2b"/><rect x="0" y="90" width="86" height="10" fill="#3d3a38"/></symbol><symbol id="p-club" viewBox="0 0 100 100" preserveAspectRatio="none"><rect x="0" y="0" width="100" height="100" fill="url(#gCl)"/><ellipse cx="58" cy="24" rx="34" ry="24" fill="url(#gClr)"/><rect x="0" y="0" width="8" height="70" fill="#b3c4dc" opacity=".5"/><rect x="86" y="0" width="14" height="34" fill="#b9c9e0" opacity=".5"/><polygon points="32,76 35,44 38,76" fill="#f4f7fc"/><polygon points="41,76 45,40 48,76" fill="#f8fafd"/><polygon points="52,76 56,44 60,76" fill="#f4f7fc"/><polygon points="63,76 66,50 69,76" fill="#eef3fa"/><polygon points="24,76 27,54 30,76" fill="#eaf0f9"/><path d="M0 80 L3 72 6 80 9 74 13 81 17 70 21 80 25 76 29 82 33 71 37 80 41 75 46 82 50 72 55 80 59 76 63 82 68 71 73 80 78 75 83 82 88 72 93 80 97 74 100 80V100H0Z" fill="url(#gClc)"/><path d="M4 88a3 3 0 1 1 6 0v12h-6zM16 90a3 3 0 1 1 6 0v10h-6zM30 87a3 3 0 1 1 6 0v13h-6zM44 90a3 3 0 1 1 6 0v10h-6zM58 88a3 3 0 1 1 6 0v12h-6zM72 90a3 3 0 1 1 6 0v10h-6zM86 87a3 3 0 1 1 6 0v13h-6z" fill="#26328a" opacity=".8"/><path d="M10 84a2 2 0 1 1 4 0zM38 85a2 2 0 1 1 4 0zM66 84a2 2 0 1 1 4 0zM80 86a2 2 0 1 1 4 0z" fill="#c9d3f0" opacity=".7"/></symbol><symbol id="p-bike" viewBox="0 0 100 100" preserveAspectRatio="none"><rect x="0" y="0" width="100" height="100" fill="url(#gBk)"/><rect x="59.5" y="6" width="9.5" height="49" fill="#7a9ab8"/><rect x="61" y="6" width="1.5" height="49" fill="#a9c3d8"/><rect x="65" y="6" width="1.5" height="49" fill="#5f83a6"/><rect x="60.5" y="4" width="7" height="3" fill="#b85a5a"/><rect x="72" y="24" width="8.5" height="31" fill="#b5c9d9"/><rect x="75" y="24" width="1.5" height="31" fill="#8fa9c0"/><rect x="42" y="30" width="5" height="26" fill="#c99a9a"/><rect x="45.5" y="36" width="6" height="20" fill="#b5cfde"/><rect x="32" y="44" width="8" height="12" fill="#b9d3dc"/><rect x="82" y="50" width="3" height="6" fill="#9fb5c8"/><rect x="13.5" y="42" width="2" height="26" fill="#4a4a3a"/><ellipse cx="14.5" cy="44" rx="4.5" ry="7" fill="#3a5230"/><rect x="22" y="46" width="1.6" height="20" fill="#8f9aa0"/><polygon points="24,56 100,51 100,62 30,64" fill="#3f5a34"/><polygon points="0,60 12,58 14,70 0,74" fill="#9fd0d8"/><polygon points="0,56 10,57 10,60 0,62" fill="#7f9fb5"/><polygon points="30,60 100,58 100,88 72,82 44,70" fill="#8ba468"/><polygon points="78,58 100,54 100,94 88,92 80,74" fill="#3f6a2f"/><ellipse cx="90" cy="72" rx="9" ry="12" fill="#4f7a3a"/><polygon points="18,62 30,62 44,70 100,90 100,100 4,100" fill="#dcd4c8"/><polygon points="0,74 15,66 9,100 0,100" fill="#7fa04f"/><polygon points="14,68 19,66 10,100 5,100" fill="#c9c3b8"/><polygon points="28,74 36,73 38,78 30,79" fill="#ebe6dd"/><polygon points="32,80 42,79 45,85 35,86" fill="#eee9e0"/><polygon points="38,88 50,86 54,94 42,96" fill="#f0ebe3"/><polygon points="28,76 30,79 30,83 28,80" fill="#a8a297"/><polygon points="32,83 35,86 35,91 32,88" fill="#a8a297"/><ellipse cx="47" cy="66" rx="1.6" ry="4" fill="#8f9fc0"/><ellipse cx="47" cy="73" rx="3" ry="4" fill="none" stroke="#3a3d44" stroke-width=".7"/><polygon points="71,62 78,60 80,72 73,74" fill="#26262b"/><ellipse cx="75.5" cy="58" rx="2" ry="3" fill="#8a5a44"/><polygon points="73,74 80,72 79,80 75,82" fill="#e6e0d8"/><ellipse cx="70" cy="83" rx="4.5" ry="7" fill="none" stroke="#33363c" stroke-width=".9"/><ellipse cx="83" cy="88" rx="4.5" ry="7" fill="none" stroke="#33363c" stroke-width=".9"/><path d="M70 83L76 76 83 88M76 76 79 74" fill="none" stroke="#33363c" stroke-width=".8"/></symbol><symbol id="p-terrace" viewBox="0 0 100 100" preserveAspectRatio="none"><rect x="0" y="0" width="100" height="100" fill="url(#gTe)"/><polygon points="46,26 100,16 100,70 50,64" fill="#f2f3f5"/><polygon points="56,30 100,22 100,28 56,36" fill="#c9cdd4"/><rect x="52" y="40" width="16" height="14" fill="#2f3a4a"/><rect x="23" y="2" width="1.8" height="70" fill="#7a5a3a"/><rect x="33" y="14" width="1.4" height="50" fill="#8a6a48"/><polygon points="18,44 46,40 46,46 18,50" fill="#e8dfd3"/><rect x="4" y="66" width="24" height="8" fill="#f7f8fa"/><rect x="36" y="62" width="26" height="7" fill="#f4f5f8"/><rect x="30" y="82" width="38" height="10" fill="#fafbfc"/><rect x="74" y="70" width="24" height="8" fill="#f5f6f9"/><rect x="6" y="74" width="2" height="20" fill="#dfe3e8"/><rect x="24" y="74" width="2" height="20" fill="#dfe3e8"/><polygon points="72,78 84,76 86,98 74,100" fill="#a8845a"/><polygon points="88,72 98,70 100,92 90,94" fill="#9a7a55"/><polygon points="46,88 54,88 56,100 44,100" fill="#a8845a"/><rect x="60" y="54" width="10" height="6" fill="#7f95b5"/></symbol><symbol id="p-aerial" viewBox="0 0 100 100" preserveAspectRatio="none"><rect x="0" y="0" width="100" height="100" fill="url(#gAe)"/><rect x="0" y="32" width="6" height="22" fill="#3f7f9a"/><rect x="4" y="42" width="10" height="14" fill="#dcdfe6"/><rect x="16" y="34" width="14" height="22" fill="#c9cdd8"/><rect x="32" y="46" width="16" height="12" fill="#eceef2"/><rect x="50" y="44" width="30" height="14" fill="#e8e9ee"/><rect x="82" y="38" width="12" height="22" fill="#a9cbd0"/><rect x="95" y="26" width="5" height="36" fill="#c9d3dc"/><polygon points="0,54 100,58 100,68 50,66 0,60" fill="#5f8a4a"/><path d="M0 58Q40 62 70 72Q100 80 100 70V90Q70 100 56 96Q60 80 30 70Q10 64 0 64Z" fill="#dccbb0"/><path d="M0 64Q10 64 30 70Q60 80 56 96Q80 100 100 90V100H0Z" fill="url(#gAe2)"/><path d="M12 88Q40 94 100 74V80Q40 100 12 92Z" fill="#8f7f68"/></symbol><symbol id="p-palms" viewBox="0 0 100 100" preserveAspectRatio="none"><rect x="0" y="0" width="100" height="100" fill="url(#gPa)"/><rect x="82" y="48" width="18" height="34" fill="#f0f2f5"/><rect x="0" y="66" width="16" height="16" fill="#e3e6ea"/><rect x="28" y="44" width="14" height="20" fill="#e8ecf2"/><ellipse cx="10" cy="16" rx="14" ry="12" fill="#5f8f3f"/><ellipse cx="18" cy="36" rx="12" ry="10" fill="#6f9f4a"/><ellipse cx="50" cy="30" rx="14" ry="12" fill="#5a8a3a"/><ellipse cx="86" cy="16" rx="14" ry="12" fill="#6a9a45"/><ellipse cx="88" cy="36" rx="10" ry="8" fill="#7aa855"/><ellipse cx="24" cy="60" rx="8" ry="10" fill="#4f7f3a"/><ellipse cx="40" cy="70" rx="8" ry="8" fill="#6f9f4a"/><polygon points="56,0 61,0 58,96 52,96" fill="#6a5a48"/><polygon points="88,20 90,20 89,84 87,84" fill="#7a6a55"/><polygon points="50,36 52,36 55,92 53,92" fill="#7a6a55"/><polygon points="40,90 64,90 66,100 38,100" fill="#5fa03f"/><rect x="28" y="76" width="10" height="5" fill="#33383f"/><rect x="70" y="78" width="10" height="4" fill="#2f343a"/><polygon points="0,78 14,78 14,92 0,94" fill="#4a4f55"/></symbol><symbol id="p-island" viewBox="0 0 100 100" preserveAspectRatio="none"><rect x="0" y="0" width="100" height="100" fill="url(#gIs)"/><rect x="0" y="34" width="2.5" height="32" fill="#3f6fa0"/><rect x="3" y="46" width="5" height="24" fill="#b5cfe6"/><rect x="8" y="32" width="9" height="38" fill="#6f97c4"/><rect x="10" y="32" width="2" height="38" fill="#a9c5e0"/><rect x="24" y="48" width="6" height="22" fill="#a9c5dd"/><rect x="31" y="52" width="8" height="18" fill="#e3e9f0"/><rect x="41" y="36" width="8" height="34" fill="#8fb3d4"/><rect x="43" y="36" width="2" height="34" fill="#c3d9ea"/><rect x="49.5" y="46" width="8" height="24" fill="#e6ecf3"/><rect x="55" y="30" width="11" height="12" fill="#5f9fb8"/><rect x="58" y="42" width="7" height="28" fill="#b9cfe3"/><rect x="66.5" y="18" width="7" height="52" fill="#e1e7ee"/><rect x="73" y="18" width="6" height="52" fill="#4f86b8"/><rect x="83" y="34" width="7.5" height="36" fill="#c9d8e6"/><rect x="86" y="34" width="1.5" height="36" fill="#9fb8cf"/><path d="M0 74Q6 60 14 68Q22 58 30 68Q38 62 46 70Q54 60 62 68Q68 56 76 66Q84 58 92 64Q97 60 100 62V97H0Z" fill="#2f6a3f"/><path d="M0 82Q10 72 20 80Q34 70 46 80Q60 72 74 80Q88 72 100 78V97H0Z" fill="#3f7f4a"/><path d="M62 70Q66 60 72 66Q78 62 80 72Z" fill="#245a34"/><rect x="27" y="84" width="31" height="9" fill="#cfe3e3"/><rect x="29" y="86" width="27" height="2" fill="#8fb5b5"/><rect x="0" y="95" width="100" height="5" fill="#5fa3a8"/></symbol><symbol id="p-artcity" viewBox="0 0 100 100" preserveAspectRatio="none"><rect x="0" y="0" width="100" height="100" fill="url(#gAc)"/><rect x="2" y="44" width="4" height="16" fill="#8f95a3"/><rect x="8" y="40" width="5" height="20" fill="#7f8595"/><rect x="15" y="36" width="6" height="24" fill="#9aa0ae"/><rect x="24" y="46" width="6" height="14" fill="#b3b8c3"/><rect x="34" y="42" width="5" height="18" fill="#8a909e"/><rect x="44" y="48" width="8" height="12" fill="#a9aebb"/><rect x="56" y="44" width="5" height="16" fill="#9399a7"/><rect x="64" y="50" width="8" height="12" fill="#b9bec8"/><rect x="76" y="6" width="12" height="70" fill="#6f8fa5"/><rect x="78" y="6" width="4" height="70" fill="#9fb8c9"/><rect x="92" y="0" width="8" height="80" fill="#7fa0b0"/><rect x="70" y="30" width="6" height="40" fill="#9aa8b5"/><polygon points="14,68 50,64 52,76 16,80" fill="#f2f3f5"/><polygon points="0,88 60,82 100,92 100,100 0,100" fill="#5fb0b0"/></symbol><symbol id="p-guard" viewBox="0 0 100 100" preserveAspectRatio="none"><rect x="0" y="0" width="100" height="100" fill="url(#gGu)"/><polygon points="18,12 34,2 62,6 70,20 64,22 32,24" fill="#5f9fd0"/><polygon points="10,22 22,12 30,30 22,56 16,50" fill="#dfe8f2"/><polygon points="20,26 28,22 30,56 22,60" fill="#a9c8e6"/><rect x="32" y="24" width="32" height="38" fill="#eceff3"/><rect x="42" y="30" width="14" height="12" fill="#2a2f38"/><rect x="30" y="62" width="44" height="4" fill="#c9ced6"/><polygon points="66,40 80,60 78,62 64,44" fill="#d9dde3"/><path d="M30 66L22 100M44 66L40 100M60 66L66 100M72 66L82 100M26 84H78" fill="none" stroke="#aab0ba" stroke-width="1.800"/><rect x="16" y="92" width="74" height="6" fill="#d8dce2"/></symbol><symbol id="p-theater" viewBox="0 0 100 100" preserveAspectRatio="none"><rect x="0" y="0" width="100" height="100" fill="url(#gTh)"/><polygon points="0,0 30,0 34,100 0,100" fill="#b9d3dc"/><polygon points="24,0 60,0 60,60 30,70" fill="#c9d3d8"/><rect x="34" y="0" width="22" height="8" fill="#5f9a8a"/><polygon points="44,62 100,14 100,100 40,100" fill="#d8d2c6"/><path d="M50 64h4v8h-4zM62 54h4v8h-4zM74 44h4v8h-4zM86 34h4v8h-4zM52 82h4v8h-4zM64 74h4v8h-4zM76 66h4v8h-4zM88 58h4v8h-4z" fill="#5a5a5a"/><polygon points="0,96 36,70 40,76 6,100 0,100" fill="#2f2f2f"/><rect x="36" y="32" width="12" height="68" fill="#e06a24"/><rect x="38" y="36" width="8" height="64" fill="#f08a3a"/><polygon points="34,30 50,26 52,36 34,38" fill="#c95a1f"/></symbol><symbol id="p-seaair" viewBox="0 0 100 100" preserveAspectRatio="none"><rect x="0" y="0" width="100" height="100" fill="url(#gSa)"/><rect x="40" y="40" width="10" height="22" fill="#7f9fd0"/><rect x="52" y="46" width="8" height="16" fill="#5f86c0"/><rect x="64" y="42" width="10" height="20" fill="#8fabd6"/><rect x="80" y="50" width="12" height="14" fill="#9fb5d8"/><rect x="10" y="52" width="16" height="12" fill="#b9c6dc"/><rect x="8" y="58" width="92" height="14" fill="#8fa3c0"/><rect x="30" y="64" width="70" height="14" fill="#dfe5ee"/><rect x="34" y="68" width="60" height="2" fill="#4f5f80"/><rect x="0" y="78" width="100" height="22" fill="#2a3552"/><rect x="52" y="90" width="48" height="5" fill="#e8ecf2"/><rect x="0" y="72" width="34" height="28" fill="#33457a"/></symbol><symbol id="p-teal" viewBox="0 0 100 100" preserveAspectRatio="none"><rect x="0" y="0" width="100" height="100" fill="url(#gTl)"/></symbol></svg>
<div id="win">
<div id="tb"></div><div id="tool"></div>
<div style="left:344.7px;top:0px;width:602px;height:110.5px;background:#2c2c2c;"></div>
<div style="left:37px;top:37.3px;width:35px;height:35px;background:#ff5f57;border-radius:50%;"></div>
<div style="left:95.3px;top:37.3px;width:35px;height:35px;background:#febc2e;border-radius:50%;"></div>
<div style="left:153.8px;top:37.3px;width:35px;height:35px;background:#28c840;border-radius:50%;"></div>
<svg style="left:269px;top:32px" width="32" height="46" viewBox="0 0 32 46" fill="none" stroke="#a3a3a3" stroke-width="3"><path d="M16 2H9.5a7 7 0 0 0 0 14H16zM16 2h6.5a7 7 0 0 1 0 14H16zM16 16H9.5a7 7 0 0 0 0 14H16zM16 30H9.5a7 7 0 1 0 6.5 7z"/><circle cx="22.5" cy="23" r="7"/></svg>
<span style="top:36.1px;font-size:32px;line-height:38.4px;color:#fff;letter-spacing:0.28px;left:381.2px;">LocalListing X</span>
<span style="top:32.9px;font-size:36px;line-height:43.2px;color:#fff;left:603.5px;transform:scaleY(1.15);">|</span>
<span style="top:36.1px;font-size:32px;line-height:38.4px;color:#fff;letter-spacing:-0.02px;left:623.8px;">BRIX Templates</span>
<span style="top:27.6px;font-size:44px;line-height:52.8px;color:#b3b3b3;font-weight:700;left:888.15px;">×</span>
<span style="top:26.4px;font-size:46px;line-height:55.2px;color:#7f7f7f;font-weight:700;left:986.37px;">+</span>
<div style="left:33px;top:149.1px;width:36.7px;height:2.4px;background:#fff;"></div>
<div style="left:33px;top:162.1px;width:36.7px;height:2.4px;background:#fff;"></div>
<div style="left:33px;top:175.1px;width:36.7px;height:2.4px;background:#fff;"></div>
<div style="left:103.4px;top:110.5px;width:125.4px;height:105.5px;background:#18a0fb;"></div>
<svg style="left:140.5px;top:142.5px" width="40" height="42" viewBox="0 0 40 42" fill="none" stroke="#fff" stroke-width="2.6" stroke-linejoin="miter"><path d="M2.5 3 32 21 16.200 26.200 10 37.700z"/></svg>
<svg style="left:190px;top:159px" width="16" height="10" viewBox="0 0 16 10" fill="none" stroke="#fff" stroke-width="2.6"><path d="M1.5 1.5 8 8l6.5-6.5"/></svg>
<svg style="left:262px;top:141.5px" width="44" height="44" viewBox="0 0 44 44" fill="none" stroke="#fff" stroke-width="2.6"><path d="M11 0v44M33 0v44M0 11h44M0 33h44"/></svg>
<svg style="left:321px;top:159px" width="16" height="10" viewBox="0 0 16 10" fill="none" stroke="#fff" stroke-width="2.6"><path d="M1.5 1.5 8 8l6.5-6.5"/></svg>
<div style="left:389px;top:143px;width:41.5px;height:41.5px;border:2.6px solid #fff;"></div>
<svg style="left:446.5px;top:159px" width="16" height="10" viewBox="0 0 16 10" fill="none" stroke="#fff" stroke-width="2.6"><path d="M1.5 1.5 8 8l6.5-6.5"/></svg>
<svg style="left:510.5px;top:141.5px" width="44" height="44" viewBox="0 0 44 44" fill="none" stroke="#fff" stroke-width="2.6" stroke-linejoin="round"><path d="M2 2l8 27 17 5 8-8-5-17zM27 34l6 8 9-9-7-7"/><path d="M2 2l20 20"/><circle cx="23.5" cy="23.5" r="3.2" fill="#fff" stroke="none"/></svg>
<svg style="left:617px;top:141.5px" width="38" height="44" viewBox="0 0 38 44" fill="none" stroke="#fff" stroke-width="2.6"><path d="M2 11V2h34v9M19 2v40M9 42h20"/></svg>
<svg style="left:714px;top:140.5px" width="50" height="46" viewBox="0 0 50 46" fill="none" stroke="#fff" stroke-width="2.6" stroke-linejoin="round"><path d="M27 2a20 20 0 1 1-9 37.900L2.500 42l6-10A20 20 0 0 1 27 2z"/></svg>
<svg style="left:1147.5px;top:132.5px" width="62" height="62" viewBox="0 0 62 62" fill="none" stroke="#9c9c9c" stroke-width="3"><circle cx="31" cy="31" r="29"/><circle cx="31" cy="26" r="10.500"/><path d="M10 51c5-7 12-10 21-10s16 3 21 10"/></svg>
<span style="top:144.8px;font-size:32px;line-height:38.4px;color:#a8a8a8;font-weight:700;letter-spacing:-0.13px;left:1233.7px;">[BRIX Templates] /</span>
<span style="top:144.8px;font-size:32px;line-height:38.4px;color:#fff;letter-spacing:0.39px;left:1516.6px;">LocalListing X</span>
<span style="top:141.6px;font-size:36px;line-height:43.2px;color:#fff;left:1740.5px;transform:scaleY(1.15);">|</span>
<span style="top:144.8px;font-size:32px;line-height:38.4px;color:#fff;letter-spacing:0.05px;left:1759.6px;">BRIX Templates</span>
<div style="left:0px;top:216px;width:580px;height:1700px;background:#fff;"></div>
<div style="left:0px;top:312.5px;width:580px;height:4.5px;background:#e3e3e5;"></div>
<span style="top:246.4px;font-size:26.5px;line-height:31.8px;color:#1b1e2b;font-weight:700;letter-spacing:0.16px;left:36px;">Layers</span>
<span style="top:246.1px;font-size:27px;line-height:32.4px;color:#b5b5b5;letter-spacing:0.91px;left:163.5px;">Assets</span>
<span style="top:244.4px;font-size:26px;line-height:31.2px;color:#d9913a;left:376px;">🎨</span>
<span style="top:246.1px;font-size:27px;line-height:32.4px;color:#0d1b4c;font-weight:500;letter-spacing:0.39px;left:421.4px;">Design</span>
<svg style="left:520px;top:257.5px" width="16" height="10" viewBox="0 0 16 10" fill="none" stroke="#a0a0a0" stroke-width="2.6"><path d="M1.5 1.5 8 8l6.5-6.5"/></svg>
<div id="canvas">
<div class="ab" style="left:98.75px;top:91.5px;width:554.4px;height:1600px"><svg style="left:35.25px;top:15.20px" width="11.4" height="11.4" viewBox="0 0 24 24"><path d="M22 2 1.500 9.800 11 13l3.200 9.500z" fill="#fa4f5a" stroke="#fa4f5a" stroke-width="2" stroke-linejoin="round"/></svg>
<span style="top:15.92px;font-size:9.3px;line-height:11.16px;color:#171b2e;font-weight:700;letter-spacing:0.09px;left:51.35px;">LocalListing X</span>
<span style="top:17.52px;font-size:5.3px;line-height:6.36px;color:#171b2e;font-weight:700;letter-spacing:0.62px;left:220.25px;">Home</span>
<span style="top:17.52px;font-size:5.3px;line-height:6.36px;color:#171b2e;letter-spacing:0.57px;left:250.05px;">About</span>
<span style="top:17.52px;font-size:5.3px;line-height:6.36px;color:#171b2e;letter-spacing:0.51px;left:279.75px;">Pages</span>
<svg style="left:300.75px;top:19.88px" width="4.4" height="2.64" viewBox="0 0 10 6" fill="none" stroke="#171b2e" stroke-width="1.500"><path d="M1 1l4 4 4-4"/></svg>
<span style="top:17.52px;font-size:5.3px;line-height:6.36px;color:#171b2e;letter-spacing:0.54px;left:318.65px;">Cities</span>
<svg style="left:338.45px;top:19.88px" width="4.4" height="2.64" viewBox="0 0 10 6" fill="none" stroke="#171b2e" stroke-width="1.500"><path d="M1 1l4 4 4-4"/></svg>
<span style="top:17.52px;font-size:5.3px;line-height:6.36px;color:#171b2e;letter-spacing:0.49px;left:355.95px;">Experiences</span>
<svg style="left:393.95px;top:19.88px" width="4.4" height="2.64" viewBox="0 0 10 6" fill="none" stroke="#171b2e" stroke-width="1.500"><path d="M1 1l4 4 4-4"/></svg>
<div style="left:411.95px;top:18.9px;width:5.3px;height:4.8px;background:#fa4f5a;border-radius:1.4px 1.4px 1.2px 1.2px;"></div>
<div style="left:413.35px;top:17.4px;width:2.5px;height:2.6px;border-radius:1.2px 1.2px 0 0;border:.6px solid #fa4f5a;border-bottom:0;"></div>
<span style="top:17.52px;font-size:5.3px;line-height:6.36px;color:#171b2e;letter-spacing:0.45px;left:419.95px;">Cart (0)</span>
<div style="left:454.25px;top:12.5px;width:66px;height:16.6px;background:#fa4f5a;border-radius:2.2px;"></div>
<span style="top:17.38px;font-size:5.2px;line-height:6.24px;color:#fff;font-weight:700;letter-spacing:0px;left:461.95px;">Explore experiences</span>
<div style="left:34.25px;top:41.5px;width:486px;height:230.3px;background:#f5f7fc;border-radius:4px;overflow:hidden;"></div>
<div style="left:244.05px;top:54.4px;width:99.1px;height:99px;border-radius:3px;overflow:hidden;"><svg style="left:0;top:0;width:100%;height:100%"><use href="#p-miami" width="100%" height="100%"/></svg></div>
<div style="left:244.05px;top:161.2px;width:99.1px;height:99px;border-radius:3px;overflow:hidden;"><svg style="left:0;top:0;width:100%;height:100%"><use href="#p-gate" width="100%" height="100%"/></svg></div>
<div style="left:350.75px;top:41.5px;width:99.5px;height:56px;border-radius:0 0 3px 3px;overflow:hidden;"><svg style="left:0;top:0;width:100%;height:100%"><use href="#p-beach" width="100%" height="100%"/></svg></div>
<div style="left:350.75px;top:107.2px;width:99.5px;height:99px;border-radius:3px;overflow:hidden;"><svg style="left:0;top:0;width:100%;height:100%"><use href="#p-nyc" width="100%" height="100%"/></svg></div>
<div style="left:350.75px;top:214.4px;width:99.5px;height:57.4px;border-radius:3px 3px 0 0;overflow:hidden;"><svg style="left:0;top:0;width:100%;height:100%"><use href="#p-skyline" width="100%" height="100%"/></svg></div>
<div style="left:457.75px;top:54.4px;width:62.5px;height:99px;border-radius:3px 0 0 3px;overflow:hidden;"><svg style="left:0;top:0;width:100%;height:100%"><use href="#p-river" width="100%" height="100%"/></svg></div>
<div style="left:457.75px;top:161.2px;width:62.5px;height:99px;border-radius:3px 0 0 3px;overflow:hidden;"><svg style="left:0;top:0;width:100%;height:100%"><use href="#p-la" width="100%" height="100%"/></svg></div>
<span style="top:96.34px;font-size:19.6px;line-height:23.52px;color:#171b2e;font-weight:700;letter-spacing:-0.89px;left:61.25px;">Discover the best</span>
<span style="top:118.74px;font-size:19.6px;line-height:23.52px;color:#171b2e;font-weight:700;letter-spacing:-0.85px;left:61.25px;">experiences to do</span>
<span style="top:141.14px;font-size:19.6px;line-height:23.52px;color:#171b2e;font-weight:700;letter-spacing:-0.88px;left:61.25px;">in your city</span>
<span style="top:168.54px;font-size:6.1px;line-height:7.32px;color:#6c6f85;letter-spacing:0.14px;left:61.25px;">Dui vel mattis morbi sit urna sapien purus purus aliquet</span>
<span style="top:178.74px;font-size:6.1px;line-height:7.32px;color:#6c6f85;letter-spacing:0.15px;left:61.25px;">platea purus libero et viverra vitae sit sed duis mi erat.</span>
<div style="left:60.85px;top:196.4px;width:47.2px;height:20.4px;background:#13182b;border-radius:2.2px;"></div>
<span style="top:203.66px;font-size:5.4px;line-height:6.48px;color:#fff;font-weight:700;letter-spacing:0.25px;left:70.25px;">Subscribe</span>
<div style="left:114.55px;top:196.4px;width:76.5px;height:20.4px;background:#fff;border-radius:2.2px;border:.6px solid #3a3e50;"></div>
<span style="top:203.66px;font-size:5.4px;line-height:6.48px;color:#171b2e;letter-spacing:0.45px;left:124.05px;">Explore experiences</span>
<span style="top:312.14px;font-size:12.6px;line-height:15.12px;color:#171b2e;font-weight:700;letter-spacing:-0.5px;left:34.95px;">Browse our cities</span>
<div style="left:456.25px;top:309.7px;width:63.6px;height:20.4px;background:#fff;border-radius:2.2px;border:.6px solid #3a3e50;"></div>
<span style="top:317.08px;font-size:5.2px;line-height:6.24px;color:#171b2e;letter-spacing:0.51px;left:465.05px;">Browse all cities</span>
<div style="left:34.25px;top:341.5px;width:109.8px;height:131px;border-radius:4px;overflow:hidden;"><svg style="left:0;top:0;width:100%;height:100%"><use href="#p-liberty" width="100%" height="100%"/></svg></div>
<span style="top:482.06px;font-size:8.4px;line-height:10.08px;color:#171b2e;font-weight:700;letter-spacing:0.21px;left:34.65px;">New York, NY</span>
<svg style="left:136.65px;top:483.46px" width="7.2" height="6.48" viewBox="0 0 20 18" fill="none" stroke="#171b2e" stroke-width="2.600" stroke-linecap="round" stroke-linejoin="round"><path d="M2 9h16M11 2l7 7-7 7"/></svg>
<span style="top:500.46px;font-size:5.4px;line-height:6.48px;color:#6c6f85;letter-spacing:0.46px;left:34.25px;">Lorem ipsum dolor sit amet, consect</span>
<span style="top:510.16px;font-size:5.4px;line-height:6.48px;color:#6c6f85;letter-spacing:0.47px;left:34.25px;">adipiscing elit, sed do eiusmod</span>
<div style="left:159.45px;top:341.5px;width:109.8px;height:131px;border-radius:4px;overflow:hidden;"><svg style="left:0;top:0;width:100%;height:100%"><use href="#p-gate2" width="100%" height="100%"/></svg></div>
<span style="top:482.06px;font-size:8.4px;line-height:10.08px;color:#171b2e;font-weight:700;letter-spacing:0.16px;left:159.85px;">San Francisco, CA</span>
<svg style="left:261.85px;top:483.46px" width="7.2" height="6.48" viewBox="0 0 20 18" fill="none" stroke="#171b2e" stroke-width="2.600" stroke-linecap="round" stroke-linejoin="round"><path d="M2 9h16M11 2l7 7-7 7"/></svg>
<span style="top:500.46px;font-size:5.4px;line-height:6.48px;color:#6c6f85;letter-spacing:0.47px;left:159.45px;">Eros pellentesque volutpat viverra ac</span>
<span style="top:510.16px;font-size:5.4px;line-height:6.48px;color:#6c6f85;letter-spacing:0.45px;left:159.45px;">non vitae cursus velit at lobortis.</span>
<div style="left:284.65px;top:341.5px;width:109.8px;height:131px;border-radius:4px;overflow:hidden;"><svg style="left:0;top:0;width:100%;height:100%"><use href="#p-bean" width="100%" height="100%"/></svg></div>
<span style="top:482.06px;font-size:8.4px;line-height:10.08px;color:#171b2e;font-weight:700;letter-spacing:0.25px;left:285.05px;">Chicago, IL</span>
<svg style="left:387.05px;top:483.46px" width="7.2" height="6.48" viewBox="0 0 20 18" fill="none" stroke="#171b2e" stroke-width="2.600" stroke-linecap="round" stroke-linejoin="round"><path d="M2 9h16M11 2l7 7-7 7"/></svg>
<span style="top:500.46px;font-size:5.4px;line-height:6.48px;color:#6c6f85;letter-spacing:0.42px;left:284.65px;">Nunc sagittis quis lectus in tempus</span>
<span style="top:510.16px;font-size:5.4px;line-height:6.48px;color:#6c6f85;letter-spacing:0.48px;left:284.65px;">lorem posuere id fermentum magna.</span>
<div style="left:409.85px;top:341.5px;width:109.8px;height:131px;border-radius:4px;overflow:hidden;"><svg style="left:0;top:0;width:100%;height:100%"><use href="#p-miamicity" width="100%" height="100%"/></svg></div>
<span style="top:482.06px;font-size:8.4px;line-height:10.08px;color:#171b2e;font-weight:700;letter-spacing:0.2px;left:410.25px;">Miami, FL</span>
<svg style="left:512.25px;top:483.46px" width="7.2" height="6.48" viewBox="0 0 20 18" fill="none" stroke="#171b2e" stroke-width="2.600" stroke-linecap="round" stroke-linejoin="round"><path d="M2 9h16M11 2l7 7-7 7"/></svg>
<span style="top:500.46px;font-size:5.4px;line-height:6.48px;color:#6c6f85;letter-spacing:0.45px;left:409.85px;">Tincidunt turpis sed arcu placerat ut</span>
<span style="top:510.16px;font-size:5.4px;line-height:6.48px;color:#6c6f85;letter-spacing:0.39px;left:409.85px;">sit nisl donec sodales tristique a sit.</span>
<div style="left:535.05px;top:341.5px;width:109.8px;height:131px;border-radius:4px;overflow:hidden;"><svg style="left:0;top:0;width:100%;height:100%"><use href="#p-liberty" width="100%" height="100%"/></svg></div>
<span style="top:482.06px;font-size:8.4px;line-height:10.08px;color:#171b2e;font-weight:700;letter-spacing:0.21px;left:535.45px;">New York, NY</span>
<svg style="left:637.45px;top:483.46px" width="7.2" height="6.48" viewBox="0 0 20 18" fill="none" stroke="#171b2e" stroke-width="2.600" stroke-linecap="round" stroke-linejoin="round"><path d="M2 9h16M11 2l7 7-7 7"/></svg>
<span style="top:500.46px;font-size:5.4px;line-height:6.48px;color:#6c6f85;letter-spacing:0.63px;left:535.05px;">Nisl congue nunc tortor</span>
<span style="top:510.16px;font-size:5.4px;line-height:6.48px;color:#6c6f85;letter-spacing:0.62px;left:535.05px;">non justo mattis in amet</span>
<div style="left:511.75px;top:395.6px;width:23px;height:23px;background:#13182b;border-radius:50%;"></div>
<svg style="left:519.05px;top:403.32px" width="8.4" height="7.56" viewBox="0 0 20 18" fill="none" stroke="#fff" stroke-width="2.600" stroke-linecap="round" stroke-linejoin="round"><path d="M2 9h16M11 2l7 7-7 7"/></svg>
<div style="left:-0.75px;top:569.1px;width:560px;height:224.2px;background:#f5f7fc;"></div>
<span style="top:617.94px;font-size:12.6px;line-height:15.12px;color:#171b2e;font-weight:700;letter-spacing:-0.31px;left:34.65px;">Explore by category</span>
<div style="left:445.25px;top:615.3px;width:76.6px;height:20.8px;background:#fff;border-radius:2.2px;border:.6px solid #3a3e50;"></div>
<span style="top:622.88px;font-size:5.2px;line-height:6.24px;color:#171b2e;letter-spacing:0.59px;left:454.8px;">Browse experiences</span>
<div style="left:35.25px;top:647.5px;width:484.4px;height:100.8px;background:#fff;border-radius:4px;box-shadow:0 1px 4px rgba(20,30,80,.04);"></div>
<div style="left:196.95px;top:647.5px;width:0.6px;height:100.8px;background:#f3f4f9;"></div>
<div style="left:356.75px;top:647.5px;width:0.6px;height:100.8px;background:#f3f4f9;"></div>
<div style="left:35.25px;top:698.1px;width:484.4px;height:0.6px;background:#f3f4f9;"></div>
<svg style="left:76.75px;top:662.79px" width="11.76" height="18.62" viewBox="0 0 12 19"><path d="M1 0v6a2 2 0 0 0 1.500 2V19h2V8A2 2 0 0 0 6 6V0H5v5H4V0H3v5H2V0z" fill="#171b2e"/><path d="M8 19V1c2.600.8 3.600 4 3.600 8 0 1.500-.8 2.500-1.600 3v7z" fill="#fa4f5a"/></svg>
<span style="top:667.72px;font-size:8.3px;line-height:9.96px;color:#171b2e;font-weight:700;letter-spacing:0.22px;left:97.65px;">Food & drinks</span>
<svg style="left:237.05px;top:665.24px" width="20.58" height="13.72" viewBox="0 0 21 14"><path d="M9 1.500 20.500 0c.5 6-1.500 10.500-6 11.500C10.500 10.500 9 6 9 1.500z" fill="#171b2e"/><path d="M0 4.500 11 3c.8 5.500-.8 10-5 11C2 13 0 9.500 0 4.500z" fill="#fa4f5a"/><path d="M3 7.500h2M7 7h2M4 10.500q2 1.500 4-.3" stroke="#fff" stroke-width=".8" fill="none"/></svg>
<span style="top:667.72px;font-size:8.3px;line-height:9.96px;color:#171b2e;font-weight:700;letter-spacing:0.29px;left:263.55px;">Art & culture</span>
<svg style="left:398.25px;top:664.60px" width="15.00" height="15.00" viewBox="0 0 15 15"><path d="M6 5.500 14.500 4v8.200a2.300 2.300 0 1 1-1.600-2.200V6.500L7.600 7.500v5.700A2.300 2.300 0 1 1 6 11z" fill="#171b2e"/><path d="M2.800 0 4.200 0V5.200A1.900 1.900 0 1 1 2.800 3.400zM4 0 6 1.500 4.200 2.500z" fill="#fa4f5a"/></svg>
<span style="top:667.72px;font-size:8.3px;line-height:9.96px;color:#171b2e;font-weight:700;letter-spacing:0.4px;left:419.25px;">Entertainment</span>
<svg style="left:83.25px;top:716.50px" width="21.00" height="14.00" viewBox="0 0 21 14"><path d="M0 14 7.500 1 11.500 8 14 4.500 21 14z" fill="#171b2e"/><circle cx="13" cy="2" r="1.700" fill="#fa4f5a"/></svg>
<span style="top:719.12px;font-size:8.3px;line-height:9.96px;color:#171b2e;font-weight:700;letter-spacing:0.36px;left:108.05px;">Outdoors</span>
<svg style="left:249.75px;top:714.30px" width="13.00" height="19.00" viewBox="0 0 13 19"><path d="M2 0h2v5c1.500.8 2 2 2 3.500V18a1 1 0 0 1-1 1H1a1 1 0 0 1-1-1V8.500C0 7 .5 5.800 2 5z" fill="#171b2e"/><path d="M7 8h6c0 3.500-.8 5.500-2.400 6v3.500H12V19H8v-1.500h1.400V14C7.800 13.500 7 11.500 7 8z" fill="#fa4f5a"/></svg>
<span style="top:719.42px;font-size:8.3px;line-height:9.96px;color:#171b2e;font-weight:700;letter-spacing:0.31px;left:270.65px;">Nightlife</span>
<svg style="left:408.25px;top:714.00px" width="13.30" height="19.00" viewBox="0 0 14 20"><path d="M7 0a7 7 0 0 1 7 7c0 4-3.500 7-5 9.500H5C3.500 14 0 11 0 7a7 7 0 0 1 7-7z" fill="#fa4f5a"/><rect x="5.200" y="16.800" width="3.600" height="3" rx=".8" fill="#171b2e"/></svg>
<span style="top:719.12px;font-size:8.3px;line-height:9.96px;color:#171b2e;font-weight:700;letter-spacing:0.21px;left:430.75px;">Activities</span>
<span style="top:845.34px;font-size:12.6px;line-height:15.12px;color:#171b2e;font-weight:700;letter-spacing:-0.38px;left:34.65px;">Popular experiences</span>
<div style="left:436.65px;top:841px;width:83.2px;height:20.9px;background:#fff;border-radius:2.2px;border:.6px solid #3a3e50;"></div>
<span style="top:848.63px;font-size:5.2px;line-height:6.24px;color:#171b2e;letter-spacing:0.55px;left:445.5px;">Browse all experiences</span>
<div style="left:34.25px;top:874.2px;width:292.8px;height:131px;background:#fff;border-radius:4px;box-shadow:0 1px 5px rgba(20,30,80,.07);"></div>
<div style="left:34.25px;top:874.2px;width:126.2px;height:131px;border-radius:4px 0 0 4px;overflow:hidden;"><svg style="left:0;top:0;width:100%;height:100%"><use href="#p-rest" width="100%" height="100%"/></svg></div>
<div style="left:43.85px;top:884.1px;width:52.2px;height:13.3px;background:#fff;border-radius:2.2px;"></div>
<svg style="left:49.34px;top:887.49px" width="4.12" height="6.53" viewBox="0 0 12 19"><path d="M1 0v6a2 2 0 0 0 1.500 2V19h2V8A2 2 0 0 0 6 6V0H5v5H4V0H3v5H2V0z" fill="#fa4f5a"/><path d="M8 19V1c2.600.8 3.600 4 3.600 8 0 1.500-.8 2.500-1.600 3v7z" fill="#fa4f5a"/></svg>
<span style="top:888.35px;font-size:5px;line-height:6px;color:#171b2e;font-weight:700;letter-spacing:0.13px;left:55.27px;">Food & drinks</span>
<span style="top:896.64px;font-size:9.1px;line-height:10.92px;color:#171b2e;font-weight:700;letter-spacing:-0.17px;left:181.15px;">Sushika Sushi Restaurant</span>
<span style="top:913.68px;font-size:5.2px;line-height:6.24px;color:#6c6f85;letter-spacing:0.18px;left:181.15px;">Urna amet tristique enim hac convallis lacus lorem</span>
<span style="top:922.78px;font-size:5.2px;line-height:6.24px;color:#6c6f85;letter-spacing:0.17px;left:181.15px;">tempus eget vivamus orci viverra lorem amet.</span>
<div style="left:181.15px;top:937.7px;width:124px;height:0.6px;background:#eaecf3;"></div>
<svg style="left:181.15px;top:947.47px" width="4.4" height="5.50" viewBox="0 0 16 20"><path d="M8 0a8 8 0 0 0-8 8c0 5.500 8 12 8 12s8-6.500 8-12a8 8 0 0 0-8-8z" fill="#fa4f5a"/><circle cx="8" cy="8" r="3" fill="#fff"/></svg>
<span style="top:947.58px;font-size:5.7px;line-height:6.84px;color:#171b2e;letter-spacing:0.29px;left:187.85px;">472 Border St. Freeport, NY 1152</span>
<div style="left:181.15px;top:967.4px;width:47.2px;height:16.7px;background:#13182b;border-radius:2.2px;"></div>
<span style="top:973.17px;font-size:4.8px;line-height:5.76px;color:#fff;font-weight:700;letter-spacing:0.25px;left:189px;">Book a table</span>
<div style="left:337.25px;top:874.2px;width:292.8px;height:131px;background:#fff;border-radius:4px;box-shadow:0 1px 5px rgba(20,30,80,.07);"></div>
<div style="left:337.25px;top:874.2px;width:126.2px;height:131px;border-radius:4px 0 0 4px;overflow:hidden;"><svg style="left:0;top:0;width:100%;height:100%"><use href="#p-museum" width="100%" height="100%"/></svg></div>
<div style="left:346.85px;top:884.1px;width:49px;height:13.3px;background:#fff;border-radius:2.2px;"></div>
<svg style="left:351.69px;top:888.84px" width="5.73" height="3.82" viewBox="0 0 21 14"><path d="M9 1.500 20.500 0c.5 6-1.500 10.500-6 11.500C10.500 10.500 9 6 9 1.500z" fill="#fa4f5a"/><path d="M0 4.500 11 3c.8 5.500-.8 10-5 11C2 13 0 9.500 0 4.500z" fill="#fa4f5a"/><path d="M3 7.500h2M7 7h2M4 10.500q2 1.500 4-.3" stroke="#fff" stroke-width=".8" fill="none"/></svg>
<span style="top:888.35px;font-size:5px;line-height:6px;color:#171b2e;font-weight:700;letter-spacing:0.12px;left:359.22px;">Art & culture</span>
<span style="top:896.64px;font-size:9.1px;line-height:10.92px;color:#171b2e;font-weight:700;letter-spacing:-0.08px;left:484.15px;">Natural History Museum</span>
<span style="top:913.68px;font-size:5.2px;line-height:6.24px;color:#6c6f85;letter-spacing:0.22px;left:484.15px;">Egestas lorem amet adipiscing elit vitae</span>
<span style="top:922.78px;font-size:5.2px;line-height:6.24px;color:#6c6f85;letter-spacing:0.19px;left:484.15px;">laoreet risus sed ultrices tempus morbi.</span>
<div style="left:484.15px;top:937.7px;width:124px;height:0.6px;background:#eaecf3;"></div>
<svg style="left:484.15px;top:947.47px" width="4.4" height="5.50" viewBox="0 0 16 20"><path d="M8 0a8 8 0 0 0-8 8c0 5.500 8 12 8 12s8-6.500 8-12a8 8 0 0 0-8-8z" fill="#fa4f5a"/><circle cx="8" cy="8" r="3" fill="#fff"/></svg>
<span style="top:947.58px;font-size:5.7px;line-height:6.84px;color:#171b2e;letter-spacing:0.26px;left:490.85px;">762 Fulton St. San Francisco, CA 9410</span>
<div style="left:484.15px;top:967.4px;width:42.5px;height:16.7px;background:#13182b;border-radius:2.2px;"></div>
<span style="top:973.17px;font-size:4.8px;line-height:5.76px;color:#fff;font-weight:700;letter-spacing:0.17px;left:491.65px;">Buy tickets</span>
<div style="left:508.15px;top:927.9px;width:23px;height:23px;background:#13182b;border-radius:50%;"></div>
<svg style="left:515.45px;top:935.62px" width="8.4" height="7.56" viewBox="0 0 20 18" fill="none" stroke="#fff" stroke-width="2.600" stroke-linecap="round" stroke-linejoin="round"><path d="M2 9h16M11 2l7 7-7 7"/></svg>
<div style="left:34.25px;top:1086.7px;width:485.5px;height:171px;background:#13182b;border-radius:4px;"></div>
<span style="top:1128.72px;font-size:12.3px;line-height:14.76px;color:#fff;font-weight:700;letter-spacing:0.3px;left:58.45px;">Subscribe to our newsletter to</span>
<span style="top:1145.92px;font-size:12.3px;line-height:14.76px;color:#fff;font-weight:700;letter-spacing:0.33px;left:58.45px;">get daily free experiences!</span>
<span style="top:1169.28px;font-size:5.2px;line-height:6.24px;color:#e6e8f2;letter-spacing:0.2px;left:58.45px;">Lorem ipsum dolor sit amet, consectetur adipiscing elit, sed do eiusmod</span>
<span style="top:1178.68px;font-size:5.2px;line-height:6.24px;color:#e6e8f2;letter-spacing:0.23px;left:58.45px;">tempor incididunt ut labore et dolore magna aliqua ut enim ad minim.</span>
<div style="left:58.45px;top:1196.5px;width:121.2px;height:20.8px;background:#fff;border-radius:2.2px;"></div>
<div style="left:67.65px;top:1204.3px;width:6.2px;height:5px;background:#c3c9e6;border-radius:1px;"></div>
<span style="top:1204.04px;font-size:5.6px;line-height:6.72px;color:#7d8096;letter-spacing:0.33px;left:77.75px;">Enter your email</span>
<div style="left:188.65px;top:1196.5px;width:47.8px;height:20.8px;background:#fa4f5a;border-radius:2.2px;"></div>
<span style="top:1203.96px;font-size:5.4px;line-height:6.48px;color:#fff;font-weight:700;letter-spacing:0.25px;left:198.35px;">Subscribe</span>
<svg style="left:266.25px;top:1182.5px" width="80" height="60" viewBox="0 0 80 60"><path d="M6 6 31 19 7 34z" fill="#fa4f5a" stroke="#fa4f5a" stroke-width="3" stroke-linejoin="round"/><path d="M16 27q8 14 22 24" fill="none" stroke="#fff" stroke-width=".9" stroke-dasharray="2.600 2"/></svg>
<svg style="left:464.25px;top:1130.5px" width="50" height="130" viewBox="0 0 50 130"><path d="M10 10 36 6 29 32z" fill="#fa4f5a" stroke="#fa4f5a" stroke-width="3" stroke-linejoin="round"/><path d="M16 24q-14 20-4 44t0 56" fill="none" stroke="#fff" stroke-width=".9" stroke-dasharray="2.600 2"/></svg>
<div style="left:259.25px;top:1030.50px;width:262px;height:227.20px;overflow:hidden"><div style="left:89.00px;top:22.40px;width:131px;height:270px;background:#eef0f7;border-radius:19px;transform-origin:0 0;transform:matrix(.9936,.1132,-.225,.974,0,0);box-shadow:inset -5px 2px 0 #f7f8fc,inset 1.500px 0 0 #f7f8fc,0 0 0 .6px #e3e6f0"><span style="left:14px;top:8.300px;font-size:4.400px;font-weight:700;color:#171b2e">9:41</span><div style="left:30px;top:4px;width:46px;height:9px;border-radius:5px;background:#f5f6fa"></div><div style="left:92px;top:9.500px;width:5px;height:3px;background:#171b2e;border-radius:.5px"></div><div style="left:99px;top:9.500px;width:5px;height:3px;background:#171b2e;border-radius:1.500px 1.500px 0 0"></div><div style="left:106px;top:9.300px;width:7px;height:3.300px;background:#171b2e;border-radius:1px"></div><div style="left:10.500px;top:24px;width:8px;height:10px;border-radius:3.500px;background:linear-gradient(#5a4334 30%,#d9a98a 30%,#d9a98a 62%,#e9edf5 62%)"></div><span style="left:22px;top:26.200px;font-size:4.400px;font-weight:700;color:#171b2e">Welcome John!</span><div style="left:101px;top:24.800px;width:10px;height:.9px;background:#171b2e;box-shadow:0 4.200px 0 #171b2e"></div><span style="left:9.400px;top:43.500px;font-size:8.500px;line-height:11px;font-weight:700;color:#171b2e;letter-spacing:-.28px">Discover the best</span><span style="left:9.400px;top:54.500px;font-size:8.500px;line-height:11px;font-weight:700;color:#171b2e;letter-spacing:-.28px">experiences in your city</span><div style="left:8px;top:74.500px;width:42px;height:14.500px;background:#f6f7fb;border-radius:2.500px"></div><div style="left:53px;top:74.500px;width:43px;height:14.500px;background:#f6f7fb;border-radius:2.500px"></div><div style="left:99px;top:74.500px;width:30px;height:14.500px;background:#f6f7fb;border-radius:2.500px"></div><svg style="left:12px;top:77.500px" width="4" height="8.500" viewBox="0 0 12 19"><path d="M1 0v6a2 2 0 0 0 1.500 2V19h2V8A2 2 0 0 0 6 6V0H5v5H4V0H3v5H2V0z" fill="#171b2e"/><path d="M8 19V1c2.600.8 3.600 4 3.600 8 0 1.500-.8 2.500-1.600 3v7z" fill="#fa4f5a"/></svg><span style="left:19.500px;top:79.400px;font-size:3.900px;font-weight:700;color:#171b2e">Food &amp; drinks</span><svg style="left:57px;top:79px" width="8" height="5.400" viewBox="0 0 21 14"><path d="M9 1.500 20.500 0c.5 6-1.500 10.500-6 11.500C10.500 10.500 9 6 9 1.500z" fill="#171b2e"/><path d="M0 4.500 11 3c.8 5.500-.8 10-5 11C2 13 0 9.500 0 4.500z" fill="#fa4f5a"/></svg><span style="left:67.500px;top:79.400px;font-size:3.900px;font-weight:700;color:#171b2e">Art &amp; culture</span><svg style="left:104px;top:79px" width="8.500" height="5.700" viewBox="0 0 21 14"><path d="M0 14 7.500 1 11.500 8 14 4.500 21 14z" fill="#171b2e"/></svg><div style="left:4px;top:95px;width:112px;height:92px;overflow:hidden;background:#eef0f7"><svg style="left:0;top:0" width="112" height="92" viewBox="0 0 112 92"><path d="M66 30h10v-8h8v8h6v40H66zM92 44h8v-6h6v40H92z" fill="#c9d6f0"/><path d="M50 22h16v40H50z" fill="#b5c5e6"/><path d="M0 52 62 54Q80 56 92 70L104 74V92H0z" fill="#2d436b"/><path d="M0 66 70 64 100 80V92H0z" fill="#34496e"/><path d="M86 70l18 4v18H86z" fill="#3d5686"/><path d="M4 2h5l5 6v42H4zM30 10l8-8 6 6v44H30z" fill="#1d2b52"/><path d="M8 8h13v38H8zM36 18h13v36H36zM66 52h15v12H66z" fill="#fff"/><path d="M21 24h8v28h-8zM52 40l7-8 7 8v20H52z" fill="#2a3a68"/><path d="M59 32h8l7 8h-8z" fill="#a9bce6"/><path d="M10 12h3v3h-3zM15 12h3v3h-3zM10 18h3v3h-3zM15 18h3v3h-3zM10 24h3v3h-3zM38 24h3v3h-3zM43 24h3v3h-3zM38 30h3v3h-3zM43 30h3v3h-3zM38 36h3v3h-3zM43 36h3v3h-3zM38 42h3v3h-3zM69 56h3v4h-3zM75 56h3v4h-3z" fill="#1d2b52"/><circle cx="27" cy="10" r="4.200" fill="#fa4f5a"/><ellipse cx="3" cy="22" rx="4" ry="8" fill="#fa4f5a"/><circle cx="26" cy="33" r="5" fill="#fa4f5a"/><ellipse cx="47" cy="50" rx="5" ry="8" fill="#fa4f5a"/><ellipse cx="88" cy="38" rx="4.500" ry="8" fill="#fa4f5a"/><path d="M56 64q10-9 24 0z" fill="#fa4f5a"/><path d="M18 40q0 12 12 14v4q-16-2-16-18z" fill="#fff"/><path d="M4 50h22l6 5H4z" fill="#c9d3ec"/><path d="M4 57h6M12 57h3M18 57h8" stroke="#fff" stroke-width="1.500"/></svg></div><span style="left:9px;top:192px;font-size:5.600px;font-weight:700;color:#171b2e;letter-spacing:-.1px">Popular Experiences</span><div style="left:9px;top:203px;width:36px;height:30px;background:linear-gradient(90deg,#b9b3a3,#d9d3c3 40%,#8d8676);border-radius:2px"></div></div></div>
<span style="top:1306.54px;font-size:12.6px;line-height:15.12px;color:#171b2e;font-weight:700;letter-spacing:-0.34px;left:34.65px;">Browse all experiences</span>
<div style="left:34.25px;top:1335.2px;width:234.8px;height:96.4px;background:#fff;border-radius:4px;box-shadow:0 1px 5px rgba(20,30,80,.06);"></div>
<div style="left:34.25px;top:1335.2px;width:97px;height:96.4px;border-radius:4px 0 0 4px;overflow:hidden;"><svg style="left:0;top:0;width:100%;height:100%"><use href="#p-rest" width="100%" height="100%"/></svg></div>
<div style="left:43.85px;top:1344.8px;width:49.6px;height:13px;background:#fff;border-radius:2.2px;"></div>
<svg style="left:48.04px;top:1348.04px" width="4.12" height="6.53" viewBox="0 0 12 19"><path d="M1 0v6a2 2 0 0 0 1.500 2V19h2V8A2 2 0 0 0 6 6V0H5v5H4V0H3v5H2V0z" fill="#fa4f5a"/><path d="M8 19V1c2.600.8 3.600 4 3.600 8 0 1.500-.8 2.500-1.600 3v7z" fill="#fa4f5a"/></svg>
<span style="top:1348.9px;font-size:5px;line-height:6px;color:#171b2e;font-weight:700;letter-spacing:0.13px;left:53.97px;">Food & drinks</span>
<span style="top:1354.34px;font-size:7.1px;line-height:8.52px;color:#171b2e;font-weight:700;letter-spacing:-0.25px;left:143.55px;">Sushika Sushi Restaurant</span>
<svg style="left:143.85px;top:1367.75px" width="4.6" height="5.75" viewBox="0 0 16 20"><path d="M8 0a8 8 0 0 0-8 8c0 5.500 8 12 8 12s8-6.500 8-12a8 8 0 0 0-8-8z" fill="#fa4f5a"/><circle cx="8" cy="8" r="3" fill="#fff"/></svg>
<span style="top:1368.18px;font-size:5.2px;line-height:6.24px;color:#6c6f85;letter-spacing:0.49px;left:152.75px;">472 Border St. Freeport, NY 1152</span>
<svg style="left:143.65px;top:1379.60px" width="5.2" height="5.2" viewBox="0 0 20 20"><circle cx="10" cy="10" r="10" fill="#fa4f5a"/><path d="M10 5v5.500l3.500 2" stroke="#fff" stroke-width="2" fill="none"/></svg>
<span style="top:1379.68px;font-size:5.2px;line-height:6.24px;color:#6c6f85;letter-spacing:0.08px;left:152.75px;">Mon - Fri: 9:00 AM - 8:00 PM</span>
<div style="left:143.55px;top:1396.3px;width:48px;height:17px;background:#fff;border-radius:2.2px;border:.6px solid #3a3e50;"></div>
<span style="top:1402.22px;font-size:4.8px;line-height:5.76px;color:#171b2e;letter-spacing:0.41px;left:151.75px;">Book a table</span>
<div style="left:284.75px;top:1335.2px;width:234.8px;height:96.4px;background:#fff;border-radius:4px;box-shadow:0 1px 5px rgba(20,30,80,.06);"></div>
<div style="left:284.75px;top:1335.2px;width:97px;height:96.4px;border-radius:4px 0 0 4px;overflow:hidden;"><svg style="left:0;top:0;width:100%;height:100%"><use href="#p-museum" width="100%" height="100%"/></svg></div>
<div style="left:294.35px;top:1344.8px;width:49.6px;height:13px;background:#fff;border-radius:2.2px;"></div>
<svg style="left:299.49px;top:1349.39px" width="5.73" height="3.82" viewBox="0 0 21 14"><path d="M9 1.500 20.500 0c.5 6-1.500 10.500-6 11.500C10.500 10.500 9 6 9 1.500z" fill="#fa4f5a"/><path d="M0 4.500 11 3c.8 5.500-.8 10-5 11C2 13 0 9.500 0 4.500z" fill="#fa4f5a"/><path d="M3 7.500h2M7 7h2M4 10.500q2 1.500 4-.3" stroke="#fff" stroke-width=".8" fill="none"/></svg>
<span style="top:1348.9px;font-size:5px;line-height:6px;color:#171b2e;font-weight:700;letter-spacing:0.12px;left:307.02px;">Art & culture</span>
<span style="top:1354.34px;font-size:7.1px;line-height:8.52px;color:#171b2e;font-weight:700;letter-spacing:-0.19px;left:394.05px;">Natural History Museum</span>
<svg style="left:394.35px;top:1367.75px" width="4.6" height="5.75" viewBox="0 0 16 20"><path d="M8 0a8 8 0 0 0-8 8c0 5.500 8 12 8 12s8-6.500 8-12a8 8 0 0 0-8-8z" fill="#fa4f5a"/><circle cx="8" cy="8" r="3" fill="#fff"/></svg>
<span style="top:1368.18px;font-size:5.2px;line-height:6.24px;color:#6c6f85;letter-spacing:0.11px;left:403.25px;">762 Fulton St. San Francisco, CA 9410</span>
<svg style="left:394.15px;top:1379.60px" width="5.2" height="5.2" viewBox="0 0 20 20"><circle cx="10" cy="10" r="10" fill="#fa4f5a"/><path d="M10 5v5.500l3.500 2" stroke="#fff" stroke-width="2" fill="none"/></svg>
<span style="top:1379.68px;font-size:5.2px;line-height:6.24px;color:#6c6f85;letter-spacing:0.02px;left:403.25px;">Mon - Fri: 2:00 PM - 8:00 PM</span>
<div style="left:394.05px;top:1396.3px;width:42.8px;height:17px;background:#fff;border-radius:2.2px;border:.6px solid #3a3e50;"></div>
<span style="top:1402.22px;font-size:4.8px;line-height:5.76px;color:#171b2e;letter-spacing:0.31px;left:402.15px;">Buy tickets</span>
<div style="left:34.25px;top:1447.2px;width:234.8px;height:96.4px;background:#fff;border-radius:4px;box-shadow:0 1px 5px rgba(20,30,80,.06);"></div>
<div style="left:34.25px;top:1447.2px;width:97px;height:96.4px;border-radius:4px 0 0 4px;overflow:hidden;"><svg style="left:0;top:0;width:100%;height:100%"><use href="#p-skydeck" width="100%" height="100%"/></svg></div>
<div style="left:43.85px;top:1456.8px;width:41px;height:13px;background:#fff;border-radius:2.2px;"></div>
<svg style="left:49.44px;top:1459.96px" width="4.67" height="6.67" viewBox="0 0 14 20"><path d="M7 0a7 7 0 0 1 7 7c0 4-3.500 7-5 9.500H5C3.500 14 0 11 0 7a7 7 0 0 1 7-7z" fill="#fa4f5a"/><rect x="5.200" y="16.800" width="3.600" height="3" rx=".8" fill="#fa4f5a"/></svg>
<span style="top:1460.9px;font-size:5px;line-height:6px;color:#171b2e;font-weight:700;letter-spacing:0.11px;left:55.91px;">Activities</span>
<span style="top:1466.34px;font-size:7.1px;line-height:8.52px;color:#171b2e;font-weight:700;letter-spacing:-0.22px;left:143.55px;">Chicago Skydeck Tower</span>
<svg style="left:143.85px;top:1479.75px" width="4.6" height="5.75" viewBox="0 0 16 20"><path d="M8 0a8 8 0 0 0-8 8c0 5.500 8 12 8 12s8-6.500 8-12a8 8 0 0 0-8-8z" fill="#fa4f5a"/><circle cx="8" cy="8" r="3" fill="#fff"/></svg>
<span style="top:1480.18px;font-size:5.2px;line-height:6.24px;color:#6c6f85;letter-spacing:0.08px;left:152.75px;">121 S. Front Ave Chicago, IL 6060</span>
<svg style="left:143.65px;top:1491.60px" width="5.2" height="5.2" viewBox="0 0 20 20"><circle cx="10" cy="10" r="10" fill="#fa4f5a"/><path d="M10 5v5.500l3.500 2" stroke="#fff" stroke-width="2" fill="none"/></svg>
<span style="top:1491.68px;font-size:5.2px;line-height:6.24px;color:#6c6f85;letter-spacing:0.01px;left:152.75px;">Mon - Fri: 10:00 AM - 4:00 PM</span>
<div style="left:143.55px;top:1508.3px;width:58.4px;height:17px;background:#fff;border-radius:2.2px;border:.6px solid #3a3e50;"></div>
<span style="top:1514.22px;font-size:4.8px;line-height:5.76px;color:#171b2e;letter-spacing:0.35px;left:151.75px;">Schedule activity</span>
<div style="left:284.75px;top:1447.2px;width:234.8px;height:96.4px;background:#fff;border-radius:4px;box-shadow:0 1px 5px rgba(20,30,80,.06);"></div>
<div style="left:284.75px;top:1447.2px;width:97px;height:96.4px;border-radius:4px 0 0 4px;overflow:hidden;"><svg style="left:0;top:0;width:100%;height:100%"><use href="#p-club" width="100%" height="100%"/></svg></div>
<div style="left:294.35px;top:1456.8px;width:40px;height:13px;background:#fff;border-radius:2.2px;"></div>
<svg style="left:300.78px;top:1460.13px" width="4.34" height="6.34" viewBox="0 0 13 19"><path d="M2 0h2v5c1.500.8 2 2 2 3.500V18a1 1 0 0 1-1 1H1a1 1 0 0 1-1-1V8.500C0 7 .5 5.800 2 5z" fill="#fa4f5a"/><path d="M7 8h6c0 3.500-.8 5.500-2.400 6v3.500H12V19H8v-1.500h1.400V14C7.800 13.500 7 11.500 7 8z" fill="#fa4f5a"/></svg>
<span style="top:1460.9px;font-size:5px;line-height:6px;color:#171b2e;font-weight:700;letter-spacing:0.11px;left:306.92px;">Nightlife</span>
<span style="top:1466.34px;font-size:7.1px;line-height:8.52px;color:#171b2e;font-weight:700;letter-spacing:-0.19px;left:394.05px;">Temple Nightclub</span>
<svg style="left:394.35px;top:1479.75px" width="4.6" height="5.75" viewBox="0 0 16 20"><path d="M8 0a8 8 0 0 0-8 8c0 5.500 8 12 8 12s8-6.500 8-12a8 8 0 0 0-8-8z" fill="#fa4f5a"/><circle cx="8" cy="8" r="3" fill="#fff"/></svg>
<span style="top:1480.18px;font-size:5.2px;line-height:6.24px;color:#6c6f85;letter-spacing:0.11px;left:403.25px;">548 Linden Ave. Miami, FL 3318</span>
<svg style="left:394.15px;top:1491.60px" width="5.2" height="5.2" viewBox="0 0 20 20"><circle cx="10" cy="10" r="10" fill="#fa4f5a"/><path d="M10 5v5.500l3.500 2" stroke="#fff" stroke-width="2" fill="none"/></svg>
<span style="top:1491.68px;font-size:5.2px;line-height:6.24px;color:#6c6f85;letter-spacing:0.03px;left:403.25px;">Mon - Fri: 8:00 PM - 2:00 AM</span>
<div style="left:394.05px;top:1508.3px;width:40px;height:17px;background:#fff;border-radius:2.2px;border:.6px solid #3a3e50;"></div>
<span style="top:1514.22px;font-size:4.8px;line-height:5.76px;color:#171b2e;letter-spacing:0.34px;left:402.15px;">Book now</span></div>
<div class="ab" style="left:704.5px;top:91.5px;width:553.7px;height:1600px"><svg style="left:36.30px;top:16.10px" width="11.4" height="11.4" viewBox="0 0 24 24"><path d="M22 2 1.500 9.800 11 13l3.200 9.500z" fill="#fa4f5a" stroke="#fa4f5a" stroke-width="2" stroke-linejoin="round"/></svg>
<span style="top:16.82px;font-size:9.3px;line-height:11.16px;color:#171b2e;font-weight:700;letter-spacing:0.09px;left:52.4px;">LocalListing X</span>
<span style="top:18.42px;font-size:5.3px;line-height:6.36px;color:#171b2e;font-weight:700;letter-spacing:0.62px;left:223.4px;">Home</span>
<span style="top:18.42px;font-size:5.3px;line-height:6.36px;color:#171b2e;letter-spacing:0.57px;left:252.9px;">About</span>
<span style="top:18.42px;font-size:5.3px;line-height:6.36px;color:#171b2e;letter-spacing:0.51px;left:282.6px;">Pages</span>
<svg style="left:303.60px;top:20.78px" width="4.4" height="2.64" viewBox="0 0 10 6" fill="none" stroke="#171b2e" stroke-width="1.500"><path d="M1 1l4 4 4-4"/></svg>
<span style="top:18.42px;font-size:5.3px;line-height:6.36px;color:#171b2e;letter-spacing:0.54px;left:321.3px;">Cities</span>
<svg style="left:341.10px;top:20.78px" width="4.4" height="2.64" viewBox="0 0 10 6" fill="none" stroke="#171b2e" stroke-width="1.500"><path d="M1 1l4 4 4-4"/></svg>
<span style="top:18.42px;font-size:5.3px;line-height:6.36px;color:#171b2e;letter-spacing:0.49px;left:358.3px;">Experiences</span>
<svg style="left:396.30px;top:20.78px" width="4.4" height="2.64" viewBox="0 0 10 6" fill="none" stroke="#171b2e" stroke-width="1.500"><path d="M1 1l4 4 4-4"/></svg>
<div style="left:413px;top:19.8px;width:5.3px;height:4.8px;background:#fa4f5a;border-radius:1.4px 1.4px 1.2px 1.2px;"></div>
<div style="left:414.4px;top:18.3px;width:2.5px;height:2.6px;border-radius:1.2px 1.2px 0 0;border:.6px solid #fa4f5a;border-bottom:0;"></div>
<span style="top:18.42px;font-size:5.3px;line-height:6.36px;color:#171b2e;letter-spacing:0.45px;left:421px;">Cart (0)</span>
<div style="left:455.4px;top:13.5px;width:65.4px;height:16.7px;background:#fa4f5a;border-radius:2.2px;"></div>
<span style="top:18.43px;font-size:5.2px;line-height:6.24px;color:#fff;font-weight:700;letter-spacing:0px;left:462.8px;">Explore experiences</span>
<div style="left:0px;top:42.7px;width:554px;height:229.7px;border-radius:0px;overflow:hidden;"><svg style="left:0;top:0;width:100%;height:100%"><use href="#p-miamidark" width="100%" height="100%"/></svg></div>
<span style="top:101.54px;font-size:19.6px;line-height:23.52px;color:#fff;font-weight:700;letter-spacing:-0.88px;left:203.95px;">Discover the best</span>
<span style="top:123.54px;font-size:19.6px;line-height:23.52px;color:#fff;font-weight:700;letter-spacing:-0.84px;left:188.05px;">experiences in Miami</span>
<span style="top:147.64px;font-size:6.1px;line-height:7.32px;color:#fff;letter-spacing:0.18px;left:188.8px;">Dui vel mattis morbi sit urna sapien purus purus aliquet platea</span>
<span style="top:157.84px;font-size:6.1px;line-height:7.32px;color:#fff;letter-spacing:0.17px;left:210.6px;">purus libero et viverra vitae sit sed duis mi erat</span>
<div style="left:214px;top:175.3px;width:47.5px;height:20.9px;background:#fa4f5a;border-radius:2.2px;"></div>
<span style="top:182.81px;font-size:5.4px;line-height:6.48px;color:#fff;font-weight:700;letter-spacing:0.25px;left:223.55px;">Subscribe</span>
<div style="left:267.5px;top:175.3px;width:76.7px;height:20.9px;background:rgba(255,255,255,.04);border-radius:2.2px;border:.6px solid rgba(255,255,255,.75);"></div>
<span style="top:182.81px;font-size:5.4px;line-height:6.48px;color:#fff;letter-spacing:0.45px;left:277.1px;">Explore experiences</span>
<div style="left:35.7px;top:242.2px;width:72.8px;height:68px;background:#fff;border-radius:4px;box-shadow:0 1px 5px rgba(20,30,80,.06);"></div>
<svg style="left:66.10px;top:261.00px" width="12.00" height="19.00" viewBox="0 0 12 19"><path d="M1 0v6a2 2 0 0 0 1.500 2V19h2V8A2 2 0 0 0 6 6V0H5v5H4V0H3v5H2V0z" fill="#171b2e"/><path d="M8 19V1c2.600.8 3.600 4 3.600 8 0 1.500-.8 2.500-1.600 3v7z" fill="#fa4f5a"/></svg>
<span style="top:284.22px;font-size:6.3px;line-height:7.56px;color:#171b2e;font-weight:700;letter-spacing:0.16px;left:49.9px;">Food & drinks</span>
<div style="left:118.12px;top:242.2px;width:72.8px;height:68px;background:#fff;border-radius:4px;box-shadow:0 1px 5px rgba(20,30,80,.06);"></div>
<svg style="left:144.02px;top:263.50px" width="21.00" height="14.00" viewBox="0 0 21 14"><path d="M9 1.500 20.500 0c.5 6-1.500 10.500-6 11.500C10.500 10.500 9 6 9 1.500z" fill="#171b2e"/><path d="M0 4.500 11 3c.8 5.500-.8 10-5 11C2 13 0 9.500 0 4.500z" fill="#fa4f5a"/><path d="M3 7.500h2M7 7h2M4 10.500q2 1.500 4-.3" stroke="#fff" stroke-width=".8" fill="none"/></svg>
<span style="top:284.22px;font-size:6.3px;line-height:7.56px;color:#171b2e;font-weight:700;letter-spacing:0.2px;left:134.17px;">Art & culture</span>
<div style="left:200.54px;top:242.2px;width:72.8px;height:68px;background:#fff;border-radius:4px;box-shadow:0 1px 5px rgba(20,30,80,.06);"></div>
<svg style="left:229.44px;top:263.00px" width="15.00" height="15.00" viewBox="0 0 15 15"><path d="M6 5.500 14.500 4v8.200a2.300 2.300 0 1 1-1.600-2.200V6.500L7.600 7.500v5.700A2.300 2.300 0 1 1 6 11z" fill="#171b2e"/><path d="M2.800 0 4.200 0V5.200A1.900 1.900 0 1 1 2.800 3.400zM4 0 6 1.500 4.200 2.500z" fill="#fa4f5a"/></svg>
<span style="top:284.22px;font-size:6.3px;line-height:7.56px;color:#171b2e;font-weight:700;letter-spacing:0.26px;left:214.09px;">Entertainment</span>
<div style="left:282.96px;top:242.2px;width:72.8px;height:68px;background:#fff;border-radius:4px;box-shadow:0 1px 5px rgba(20,30,80,.06);"></div>
<svg style="left:308.86px;top:263.50px" width="21.00" height="14.00" viewBox="0 0 21 14"><path d="M0 14 7.500 1 11.500 8 14 4.500 21 14z" fill="#171b2e"/><circle cx="13" cy="2" r="1.700" fill="#fa4f5a"/></svg>
<span style="top:284.22px;font-size:6.3px;line-height:7.56px;color:#171b2e;font-weight:700;letter-spacing:0.21px;left:304.36px;">Outdoors</span>
<div style="left:365.38px;top:242.2px;width:72.8px;height:68px;background:#fff;border-radius:4px;box-shadow:0 1px 5px rgba(20,30,80,.06);"></div>
<svg style="left:395.28px;top:261.00px" width="13.00" height="19.00" viewBox="0 0 13 19"><path d="M2 0h2v5c1.500.8 2 2 2 3.500V18a1 1 0 0 1-1 1H1a1 1 0 0 1-1-1V8.500C0 7 .5 5.800 2 5z" fill="#171b2e"/><path d="M7 8h6c0 3.500-.8 5.500-2.400 6v3.500H12V19H8v-1.500h1.400V14C7.800 13.500 7 11.500 7 8z" fill="#fa4f5a"/></svg>
<span style="top:284.22px;font-size:6.3px;line-height:7.56px;color:#171b2e;font-weight:700;letter-spacing:0.22px;left:388.18px;">Nightlife</span>
<div style="left:447.8px;top:242.2px;width:72.8px;height:68px;background:#fff;border-radius:4px;box-shadow:0 1px 5px rgba(20,30,80,.06);"></div>
<svg style="left:477.20px;top:262.50px" width="14.00" height="20.00" viewBox="0 0 14 20"><path d="M7 0a7 7 0 0 1 7 7c0 4-3.500 7-5 9.500H5C3.500 14 0 11 0 7a7 7 0 0 1 7-7z" fill="#fa4f5a"/><rect x="5.200" y="16.800" width="3.600" height="3" rx=".8" fill="#171b2e"/></svg>
<span style="top:287.62px;font-size:6.3px;line-height:7.56px;color:#171b2e;font-weight:700;letter-spacing:0.15px;left:469.45px;">Activities</span>
<span style="top:360.34px;font-size:12.6px;line-height:15.12px;color:#171b2e;font-weight:700;letter-spacing:-0.38px;left:36px;">Popular experiences</span>
<div style="left:437.5px;top:358.1px;width:83.4px;height:20.9px;background:#fff;border-radius:2.2px;border:.6px solid #3a3e50;"></div>
<span style="top:365.73px;font-size:5.2px;line-height:6.24px;color:#171b2e;letter-spacing:0.55px;left:446.45px;">Browse all experiences</span>
<div style="left:36.3px;top:392.1px;width:234.1px;height:271.2px;background:#fff;border-radius:4px;box-shadow:0 1px 6px rgba(20,30,80,.08);"></div>
<div style="left:36.3px;top:392.1px;width:234.1px;height:153.7px;border-radius:4px 4px 0 0;overflow:hidden;"><svg style="left:0;top:0;width:100%;height:100%"><use href="#p-bike" width="100%" height="100%"/></svg></div>
<div style="left:45.4px;top:401.4px;width:47.8px;height:16.5px;background:#fff;border-radius:2.2px;"></div>
<svg style="left:52.99px;top:405.98px" width="5.14" height="7.34" viewBox="0 0 14 20"><path d="M7 0a7 7 0 0 1 7 7c0 4-3.500 7-5 9.500H5C3.500 14 0 11 0 7a7 7 0 0 1 7-7z" fill="#fa4f5a"/><rect x="5.200" y="16.800" width="3.600" height="3" rx=".8" fill="#fa4f5a"/></svg>
<span style="top:406.95px;font-size:5.5px;line-height:6.6px;color:#171b2e;font-weight:700;letter-spacing:0.12px;left:59.93px;">Activities</span>
<span style="top:560.54px;font-size:9.1px;line-height:10.92px;color:#171b2e;font-weight:700;letter-spacing:-0.19px;left:54px;">South Pointe Miami Bike Tour</span>
<span style="top:576.94px;font-size:6.1px;line-height:7.32px;color:#6c6f85;letter-spacing:0.14px;left:54px;">Lorem ipsum dolor sit amet consectetur adipiscing elit duis elit in quis</span>
<span style="top:587.14px;font-size:6.1px;line-height:7.32px;color:#6c6f85;letter-spacing:0.12px;left:54px;">nec risus egestas dui etiam urna mi fusce cursus nunc pretium</span>
<div style="left:54px;top:603.8px;width:198.5px;height:0.6px;background:#eaecf3;"></div>
<svg style="left:54.00px;top:614.72px" width="4.8" height="6.00" viewBox="0 0 16 20"><path d="M8 0a8 8 0 0 0-8 8c0 5.500 8 12 8 12s8-6.500 8-12a8 8 0 0 0-8-8z" fill="#fa4f5a"/><circle cx="8" cy="8" r="3" fill="#fff"/></svg>
<span style="top:614.96px;font-size:5.9px;line-height:7.08px;color:#6c6f85;letter-spacing:0.19px;left:61.3px;">673 Yukon Road Miami, FL 3313</span>
<div style="left:156.8px;top:614.5px;width:0.5px;height:7px;background:#d5d8e3;"></div>
<svg style="left:161.80px;top:614.90px" width="5.6" height="5.6" viewBox="0 0 20 20"><circle cx="10" cy="10" r="10" fill="#fa4f5a"/><path d="M10 5v5.500l3.500 2" stroke="#fff" stroke-width="2" fill="none"/></svg>
<span style="top:614.96px;font-size:5.9px;line-height:7.08px;color:#6c6f85;letter-spacing:0.04px;left:170.2px;">Mon - Fri: 9:00 AM - 8:00 PM</span>
<div style="left:54px;top:632px;width:40.2px;height:16.9px;background:#13182b;border-radius:2.2px;"></div>
<span style="top:637.87px;font-size:4.8px;line-height:5.76px;color:#fff;font-weight:700;letter-spacing:0.2px;left:61.85px;">Book now</span>
<div style="left:286.3px;top:392.1px;width:234.1px;height:271.2px;background:#fff;border-radius:4px;box-shadow:0 1px 6px rgba(20,30,80,.08);"></div>
<div style="left:286.3px;top:392.1px;width:234.1px;height:153.7px;border-radius:4px 4px 0 0;overflow:hidden;"><svg style="left:0;top:0;width:100%;height:100%"><use href="#p-terrace" width="100%" height="100%"/></svg></div>
<div style="left:295.4px;top:401.4px;width:59.5px;height:16.5px;background:#fff;border-radius:2.2px;"></div>
<svg style="left:302.57px;top:406.06px" width="4.54" height="7.18" viewBox="0 0 12 19"><path d="M1 0v6a2 2 0 0 0 1.500 2V19h2V8A2 2 0 0 0 6 6V0H5v5H4V0H3v5H2V0z" fill="#fa4f5a"/><path d="M8 19V1c2.600.8 3.600 4 3.600 8 0 1.500-.8 2.500-1.600 3v7z" fill="#fa4f5a"/></svg>
<span style="top:406.95px;font-size:5.5px;line-height:6.6px;color:#171b2e;font-weight:700;letter-spacing:0.14px;left:308.91px;">Food & drinks</span>
<span style="top:560.54px;font-size:9.1px;line-height:10.92px;color:#171b2e;font-weight:700;letter-spacing:-0.06px;left:304px;">Vinya Table Restaurant</span>
<span style="top:576.94px;font-size:6.1px;line-height:7.32px;color:#6c6f85;letter-spacing:0.18px;left:304px;">Lorem ipsum dolor sit amet consectetur adipiscing elit duis elit in</span>
<span style="top:587.14px;font-size:6.1px;line-height:7.32px;color:#6c6f85;letter-spacing:0.14px;left:304px;">quis nec risus egestas dui etiam urna mi fusce cursus nunc pretium.</span>
<div style="left:304px;top:603.8px;width:198.5px;height:0.6px;background:#eaecf3;"></div>
<svg style="left:309.00px;top:614.72px" width="4.8" height="6.00" viewBox="0 0 16 20"><path d="M8 0a8 8 0 0 0-8 8c0 5.500 8 12 8 12s8-6.500 8-12a8 8 0 0 0-8-8z" fill="#fa4f5a"/><circle cx="8" cy="8" r="3" fill="#fff"/></svg>
<span style="top:614.96px;font-size:5.9px;line-height:7.08px;color:#6c6f85;letter-spacing:0.16px;left:316.3px;">47 Sage Ave. Miami, FL 3317</span>
<div style="left:402.2px;top:614.5px;width:0.5px;height:7px;background:#d5d8e3;"></div>
<svg style="left:407.10px;top:614.90px" width="5.6" height="5.6" viewBox="0 0 20 20"><circle cx="10" cy="10" r="10" fill="#fa4f5a"/><path d="M10 5v5.500l3.500 2" stroke="#fff" stroke-width="2" fill="none"/></svg>
<span style="top:614.96px;font-size:5.9px;line-height:7.08px;color:#6c6f85;letter-spacing:0.14px;left:415.5px;">Mon - Fri: 9:00 AM - 8:00 PM</span>
<div style="left:304px;top:632px;width:47.2px;height:16.9px;background:#13182b;border-radius:2.2px;"></div>
<span style="top:637.87px;font-size:4.8px;line-height:5.76px;color:#fff;font-weight:700;letter-spacing:0.25px;left:311.85px;">Book a table</span>
<div style="left:-0.5px;top:710.5px;width:556px;height:397px;background:#f5f7fc;"></div>
<span style="top:805.84px;font-size:12.6px;line-height:15.12px;color:#171b2e;font-weight:700;letter-spacing:-0.59px;left:36.3px;">Why visit us?</span>
<span style="top:828.04px;font-size:6.1px;line-height:7.32px;color:#6c6f85;letter-spacing:0.13px;left:36.3px;">Lorem ipsum dolor sit amet, consectetur adipiscing elit nisi</span>
<span style="top:837.94px;font-size:6.1px;line-height:7.32px;color:#6c6f85;letter-spacing:0.16px;left:36.3px;">eleifend venenatis magna est feugiat pellentesque sapien</span>
<span style="top:848.14px;font-size:6.1px;line-height:7.32px;color:#6c6f85;letter-spacing:0.14px;left:36.3px;">viverra habitasse donec sit pharetra sed.</span>
<span style="top:863.24px;font-size:6.1px;line-height:7.32px;color:#6c6f85;letter-spacing:0.14px;left:36.3px;">Porta eu sed luctus vitae pulvinar diam dignissim urna</span>
<span style="top:873.44px;font-size:6.1px;line-height:7.32px;color:#6c6f85;letter-spacing:0.12px;left:36.3px;">commodo sapien pretium in sit nunc id venenatis viverra</span>
<span style="top:883.34px;font-size:6.1px;line-height:7.32px;color:#6c6f85;letter-spacing:0.08px;left:36.3px;">nec ipsum sed posuere semper velit arcu cursus.</span>
<div style="left:36.3px;top:902.8px;width:74.9px;height:20.4px;background:transparent;border-radius:2.2px;border:.6px solid #3a3e50;"></div>
<span style="top:910.06px;font-size:5.4px;line-height:6.48px;color:#171b2e;letter-spacing:0.37px;left:45.75px;">Explore experiences</span>
<div style="left:364.1px;top:809.7px;width:157.1px;height:159.2px;border-radius:4px;overflow:hidden;box-shadow:0 3px 10px rgba(20,30,80,.10);"><svg style="left:0;top:0;width:100%;height:100%"><use href="#p-palms" width="100%" height="100%"/></svg></div>
<div style="left:244.8px;top:757.5px;width:150.1px;height:159.7px;border-radius:4px;overflow:hidden;box-shadow:0 4px 14px rgba(20,30,80,.16);"><svg style="left:0;top:0;width:100%;height:100%"><use href="#p-aerial" width="100%" height="100%"/></svg></div>
<div style="left:36.3px;top:1015.9px;width:485.2px;height:185.1px;background:#13182b;border-radius:4px;overflow:hidden;"><svg style="left:0;top:0" width="240" height="185.1" viewBox="0 0 240 185"><path d="M0 0h64v30l22-6v76H0z" fill="#c9d8f5"/><path d="M108 36h12v-26h2v26h10v70h-24zM150 60l18-10v80h-22zM168 78h14l10 10v40h-24z" fill="#c9d8f5"/><path d="M0 0h16v28H0z" fill="#fff"/><path d="M0 6h14v2.500H0zM0 12h14v2.500H0zM0 18h14v2.500H0z" fill="#152848"/><path d="M14 30 28 8l12 14v30H14z" fill="#152848"/><path d="M28 8h20l12 14H40z" fill="#a9bce6"/><path d="M38 22h22v16H38z" fill="#fff"/><path d="M42 26h8v2h-8zM42 31h8v2h-8z" fill="#152848"/><path d="M14 40 24 30l10 10v28H14z" fill="#fff"/><path d="M24 30h14l8 10H34z" fill="#a9bce6"/><path d="M18 52h12v16H18z" fill="#152848"/><path d="M46 44h34v26H46z" fill="#fff"/><path d="M40 38h36l6 8H46z" fill="#a9bce6"/><path d="M52 50h4v7h-4zM62 50h4v7h-4zM72 50h4v7h-4z" fill="#152848"/><path d="M16 68q14-20 36-4l6 6H14z" fill="#fa4f5a"/><g transform="translate(80 36) scale(0.9)"><path d="M0 0v28" stroke="#1f3a6a" stroke-width="1.200"/><path d="M0 0q-9-9-16-3q9-2 16 3q-3-12-11-13q8 3 11 13q4-12 12-11q-9 2-12 11q9-6 16 0q-8-3-16 0q7 1 11 10q-6-7-11-10q-7 2-10 11q2-9 10-11z" fill="#fa4f5a" stroke="#fa4f5a" stroke-width="1.600" stroke-linejoin="round"/></g><g transform="translate(127 60) scale(0.75)"><path d="M0 0v28" stroke="#1f3a6a" stroke-width="1.200"/><path d="M0 0q-9-9-16-3q9-2 16 3q-3-12-11-13q8 3 11 13q4-12 12-11q-9 2-12 11q9-6 16 0q-8-3-16 0q7 1 11 10q-6-7-11-10q-7 2-10 11q2-9 10-11z" fill="#fa4f5a" stroke="#fa4f5a" stroke-width="1.600" stroke-linejoin="round"/></g><g transform="translate(174 72) scale(0.8)"><path d="M0 0v28" stroke="#1f3a6a" stroke-width="1.200"/><path d="M0 0q-9-9-16-3q9-2 16 3q-3-12-11-13q8 3 11 13q4-12 12-11q-9 2-12 11q9-6 16 0q-8-3-16 0q7 1 11 10q-6-7-11-10q-7 2-10 11q2-9 10-11z" fill="#fa4f5a" stroke="#fa4f5a" stroke-width="1.600" stroke-linejoin="round"/></g><g transform="translate(214 66) scale(0.85)"><path d="M0 0v28" stroke="#1f3a6a" stroke-width="1.200"/><path d="M0 0q-9-9-16-3q9-2 16 3q-3-12-11-13q8 3 11 13q4-12 12-11q-9 2-12 11q9-6 16 0q-8-3-16 0q7 1 11 10q-6-7-11-10q-7 2-10 11q2-9 10-11z" fill="#fa4f5a" stroke="#fa4f5a" stroke-width="1.600" stroke-linejoin="round"/></g><g transform="translate(2 58) scale(0.6)"><path d="M0 0v28" stroke="#1f3a6a" stroke-width="1.200"/><path d="M0 0q-9-9-16-3q9-2 16 3q-3-12-11-13q8 3 11 13q4-12 12-11q-9 2-12 11q9-6 16 0q-8-3-16 0q7 1 11 10q-6-7-11-10q-7 2-10 11q2-9 10-11z" fill="#fa4f5a" stroke="#fa4f5a" stroke-width="1.600" stroke-linejoin="round"/></g><path d="M0 66h92q30 0 44 20t44 18h44q10 0 10 10v6H0z" fill="#1f3a6a"/><path d="M0 86h60q20 0 34 20t50 16h90v6H0z" fill="#2a4a80" opacity=".0"/><path d="M0 86h64q14 0 24 12l20 24H0z" fill="#152848"/><path d="M0 128h70l30 36H0z" fill="#13182b"/><path d="M0 164h66l16 21H0z" fill="#1f3a6a"/><path d="M56 140h120l-10 24H74z" fill="#13275a"/><path d="M104 96h5v16h-5zM116 96h5v16h-5z" fill="#fff"/><path d="M72 118l14-10h50l-20 26H84z" fill="#fff"/><path d="M72 118l14-10h14l-6 10z" fill="#a9bce6"/><path d="M116 108h44l10 10v16l-8 6h-66z" fill="#13275a"/><path d="M144 108h34l12 10h-36z" fill="#a9bce6"/><path d="M178 118h14v18h-20z" fill="#fff"/><path d="M84 134h84l-6 6H92z" fill="#fff"/><path d="M88 122h3v3h-3zM96 122h3v3h-3zM104 122h3v3h-3zM112 122h3v3h-3z" fill="#152848"/><path d="M140 116h4v4h-4zM148 116h4v4h-4zM156 116h4v4h-4zM164 116h4v4h-4zM140 125h4v4h-4zM148 125h4v4h-4zM156 125h4v4h-4zM164 125h4v4h-4z" fill="#fff"/><path d="M182 122h3v3h-3zM188 122h3v3h-3z" fill="#152848"/><circle cx="155" cy="150" r="2.600" fill="#fff"/><circle cx="166" cy="150" r="2.600" fill="#fff"/><circle cx="177" cy="150" r="2.600" fill="#fff"/><path d="M196 136h28q-14 8-22 28h-22q6-16 16-28z" fill="#fff"/></svg></div>
<span style="top:1066.02px;font-size:12.3px;line-height:14.76px;color:#fff;font-weight:700;letter-spacing:0.27px;left:305.9px;">Subscribe and get 10% OFF</span>
<span style="top:1083.52px;font-size:12.3px;line-height:14.76px;color:#fff;font-weight:700;letter-spacing:0.13px;left:305.9px;">on your first experience!</span>
<span style="top:1105.98px;font-size:5.2px;line-height:6.24px;color:#e6e8f2;letter-spacing:0.2px;left:305.9px;">Lorem ipsum dolor sit amet, consectetur adipiscing elit, sed do</span>
<span style="top:1115.68px;font-size:5.2px;line-height:6.24px;color:#e6e8f2;letter-spacing:0.24px;left:305.9px;">eiusmod  ut labore et dolore magna aliqua ut enim ad minim.</span>
<div style="left:305.9px;top:1132.1px;width:121.3px;height:20.6px;background:#fff;border-radius:2.2px;"></div>
<div style="left:314.9px;top:1139.9px;width:6.2px;height:5px;background:#c3c9e6;border-radius:1px;"></div>
<span style="top:1139.64px;font-size:5.6px;line-height:6.72px;color:#7d8096;letter-spacing:0.33px;left:325.3px;">Enter your email</span>
<div style="left:436.5px;top:1132.1px;width:47.4px;height:20.6px;background:#fa4f5a;border-radius:2.2px;"></div>
<span style="top:1139.46px;font-size:5.4px;line-height:6.48px;color:#fff;font-weight:700;letter-spacing:0.25px;left:446px;">Subscribe</span>
<span style="top:1249.84px;font-size:12.6px;line-height:15.12px;color:#171b2e;font-weight:700;letter-spacing:-0.34px;left:36px;">Browse all experiences</span>
<div style="left:36.3px;top:1278.2px;width:151.3px;height:185.3px;background:#fff;border-radius:4px;box-shadow:0 1px 5px rgba(20,30,80,.07);"></div>
<div style="left:36.3px;top:1278.2px;width:151.3px;height:96.1px;border-radius:4px 4px 0 0;overflow:hidden;"><svg style="left:0;top:0;width:100%;height:100%"><use href="#p-club" width="100%" height="100%"/></svg></div>
<div style="left:44.1px;top:1286.5px;width:39.9px;height:13.4px;background:#fff;border-radius:2.2px;"></div>
<svg style="left:50.48px;top:1290.03px" width="4.34" height="6.34" viewBox="0 0 13 19"><path d="M2 0h2v5c1.500.8 2 2 2 3.500V18a1 1 0 0 1-1 1H1a1 1 0 0 1-1-1V8.500C0 7 .5 5.800 2 5z" fill="#fa4f5a"/><path d="M7 8h6c0 3.500-.8 5.500-2.400 6v3.500H12V19H8v-1.500h1.400V14C7.800 13.500 7 11.500 7 8z" fill="#fa4f5a"/></svg>
<span style="top:1290.8px;font-size:5px;line-height:6px;color:#171b2e;font-weight:700;letter-spacing:0.11px;left:56.62px;">Nightlife</span>
<span style="top:1388.36px;font-size:8.4px;line-height:10.08px;color:#171b2e;font-weight:700;letter-spacing:-0.09px;left:45.9px;">Temple Nightclub</span>
<svg style="left:46.10px;top:1403.15px" width="4.6" height="5.75" viewBox="0 0 16 20"><path d="M8 0a8 8 0 0 0-8 8c0 5.500 8 12 8 12s8-6.500 8-12a8 8 0 0 0-8-8z" fill="#fa4f5a"/><circle cx="8" cy="8" r="3" fill="#fff"/></svg>
<span style="top:1403.52px;font-size:5.3px;line-height:6.36px;color:#6c6f85;letter-spacing:0.1px;left:54.3px;">548 Linden Ave. Miami, FL 3318</span>
<svg style="left:45.80px;top:1416.80px" width="5.4" height="5.4" viewBox="0 0 20 20"><circle cx="10" cy="10" r="10" fill="#fa4f5a"/><path d="M10 5v5.500l3.500 2" stroke="#fff" stroke-width="2" fill="none"/></svg>
<span style="top:1416.92px;font-size:5.3px;line-height:6.36px;color:#6c6f85;letter-spacing:0.05px;left:54.3px;">Mon - Fri: 8:00 PM - 2:00 AM</span>
<div style="left:45.9px;top:1433.5px;width:44.6px;height:16.7px;background:#fff;border-radius:2.2px;border:.6px solid #3a3e50;"></div>
<span style="top:1439.27px;font-size:4.8px;line-height:5.76px;color:#171b2e;letter-spacing:0.36px;left:53.95px;">Buy Tickets</span>
<div style="left:202.8px;top:1278.2px;width:151.3px;height:185.3px;background:#fff;border-radius:4px;box-shadow:0 1px 5px rgba(20,30,80,.07);"></div>
<div style="left:202.8px;top:1278.2px;width:151.3px;height:96.1px;border-radius:4px 4px 0 0;overflow:hidden;"><svg style="left:0;top:0;width:100%;height:100%"><use href="#p-bike" width="100%" height="100%"/></svg></div>
<div style="left:210.6px;top:1286.5px;width:41px;height:13.4px;background:#fff;border-radius:2.2px;"></div>
<svg style="left:216.19px;top:1289.86px" width="4.67" height="6.67" viewBox="0 0 14 20"><path d="M7 0a7 7 0 0 1 7 7c0 4-3.500 7-5 9.500H5C3.500 14 0 11 0 7a7 7 0 0 1 7-7z" fill="#fa4f5a"/><rect x="5.200" y="16.800" width="3.600" height="3" rx=".8" fill="#fa4f5a"/></svg>
<span style="top:1290.8px;font-size:5px;line-height:6px;color:#171b2e;font-weight:700;letter-spacing:0.11px;left:222.66px;">Activities</span>
<span style="top:1388.36px;font-size:8.4px;line-height:10.08px;color:#171b2e;font-weight:700;letter-spacing:-0.19px;left:212.4px;">South Pointe Miami Bike Tour</span>
<svg style="left:212.60px;top:1403.15px" width="4.6" height="5.75" viewBox="0 0 16 20"><path d="M8 0a8 8 0 0 0-8 8c0 5.500 8 12 8 12s8-6.500 8-12a8 8 0 0 0-8-8z" fill="#fa4f5a"/><circle cx="8" cy="8" r="3" fill="#fff"/></svg>
<span style="top:1403.52px;font-size:5.3px;line-height:6.36px;color:#6c6f85;letter-spacing:0.09px;left:220.8px;">673 Yukon Road Miami, FL 3313</span>
<svg style="left:212.30px;top:1416.80px" width="5.4" height="5.4" viewBox="0 0 20 20"><circle cx="10" cy="10" r="10" fill="#fa4f5a"/><path d="M10 5v5.500l3.500 2" stroke="#fff" stroke-width="2" fill="none"/></svg>
<span style="top:1416.92px;font-size:5.3px;line-height:6.36px;color:#6c6f85;letter-spacing:0px;left:220.8px;">Mon - Fri: 6:00 AM - 2:00 PM</span>
<div style="left:212.4px;top:1433.5px;width:39.4px;height:16.7px;background:#fff;border-radius:2.2px;border:.6px solid #3a3e50;"></div>
<span style="top:1439.27px;font-size:4.8px;line-height:5.76px;color:#171b2e;letter-spacing:0.34px;left:220.2px;">Book now</span>
<div style="left:369.5px;top:1278.2px;width:151.3px;height:185.3px;background:#fff;border-radius:4px;box-shadow:0 1px 5px rgba(20,30,80,.07);"></div>
<div style="left:369.5px;top:1278.2px;width:151.3px;height:96.1px;border-radius:4px 4px 0 0;overflow:hidden;"><svg style="left:0;top:0;width:100%;height:100%"><use href="#p-island" width="100%" height="100%"/></svg></div>
<div style="left:377.3px;top:1286.5px;width:42.3px;height:13.4px;background:#fff;border-radius:2.2px;"></div>
<svg style="left:384.33px;top:1291.29px" width="5.73" height="3.82" viewBox="0 0 21 14"><path d="M0 14 7.500 1 11.500 8 14 4.500 21 14z" fill="#fa4f5a"/><circle cx="13" cy="2" r="1.700" fill="#fa4f5a"/></svg>
<span style="top:1290.8px;font-size:5px;line-height:6px;color:#171b2e;font-weight:700;letter-spacing:0.14px;left:391.86px;">Outdoor</span>
<span style="top:1388.36px;font-size:8.4px;line-height:10.08px;color:#171b2e;font-weight:700;letter-spacing:-0.03px;left:379.1px;">Miami Beach Star Island</span>
<svg style="left:379.30px;top:1403.15px" width="4.6" height="5.75" viewBox="0 0 16 20"><path d="M8 0a8 8 0 0 0-8 8c0 5.500 8 12 8 12s8-6.500 8-12a8 8 0 0 0-8-8z" fill="#fa4f5a"/><circle cx="8" cy="8" r="3" fill="#fff"/></svg>
<span style="top:1403.52px;font-size:5.3px;line-height:6.36px;color:#6c6f85;letter-spacing:0.06px;left:387.5px;">284 Schoolhouse St. Miami, FL 3316</span>
<svg style="left:379.00px;top:1416.80px" width="5.4" height="5.4" viewBox="0 0 20 20"><circle cx="10" cy="10" r="10" fill="#fa4f5a"/><path d="M10 5v5.500l3.500 2" stroke="#fff" stroke-width="2" fill="none"/></svg>
<span style="top:1416.92px;font-size:5.3px;line-height:6.36px;color:#6c6f85;letter-spacing:0px;left:387.5px;">Mon - Fri: 6:00 AM - 5:00 PM</span>
<div style="left:379.1px;top:1433.5px;width:39.4px;height:16.7px;background:#fff;border-radius:2.2px;border:.6px solid #3a3e50;"></div>
<span style="top:1439.27px;font-size:4.8px;line-height:5.76px;color:#171b2e;letter-spacing:0.34px;left:386.9px;">Book now</span>
<div style="left:36.3px;top:1480.2px;width:151.3px;height:185.3px;background:#fff;border-radius:4px;box-shadow:0 1px 5px rgba(20,30,80,.07);"></div>
<div style="left:36.3px;top:1480.2px;width:151.3px;height:96.1px;border-radius:4px 4px 0 0;overflow:hidden;"><svg style="left:0;top:0;width:100%;height:100%"><use href="#p-artcity" width="100%" height="100%"/></svg></div>
<div style="left:44.1px;top:1488.5px;width:50px;height:13.4px;background:#fff;border-radius:2.2px;"></div>
<svg style="left:49.44px;top:1493.29px" width="5.73" height="3.82" viewBox="0 0 21 14"><path d="M9 1.500 20.500 0c.5 6-1.500 10.500-6 11.500C10.500 10.500 9 6 9 1.500z" fill="#fa4f5a"/><path d="M0 4.500 11 3c.8 5.500-.8 10-5 11C2 13 0 9.500 0 4.500z" fill="#fa4f5a"/><path d="M3 7.500h2M7 7h2M4 10.500q2 1.500 4-.3" stroke="#fff" stroke-width=".8" fill="none"/></svg>
<span style="top:1492.8px;font-size:5px;line-height:6px;color:#171b2e;font-weight:700;letter-spacing:0.12px;left:56.97px;">Art & culture</span>
<span style="top:1590.36px;font-size:8.4px;line-height:10.08px;color:#171b2e;font-weight:700;letter-spacing:-0.27px;left:45.9px;">Miami Art Museum</span>
<svg style="left:46.10px;top:1605.15px" width="4.6" height="5.75" viewBox="0 0 16 20"><path d="M8 0a8 8 0 0 0-8 8c0 5.500 8 12 8 12s8-6.500 8-12a8 8 0 0 0-8-8z" fill="#fa4f5a"/><circle cx="8" cy="8" r="3" fill="#fff"/></svg>
<span style="top:1605.52px;font-size:5.3px;line-height:6.36px;color:#6c6f85;letter-spacing:0.09px;left:54.3px;">12 Bay Rd. Miami, FL 3311</span>
<svg style="left:45.80px;top:1618.80px" width="5.4" height="5.4" viewBox="0 0 20 20"><circle cx="10" cy="10" r="10" fill="#fa4f5a"/><path d="M10 5v5.500l3.500 2" stroke="#fff" stroke-width="2" fill="none"/></svg>
<span style="top:1618.92px;font-size:5.3px;line-height:6.36px;color:#6c6f85;letter-spacing:0px;left:54.3px;">Mon - Fri: 9:00 AM - 6:00 PM</span>
<div style="left:45.9px;top:1635.5px;width:44.6px;height:16.7px;background:#fff;border-radius:2.2px;border:.6px solid #3a3e50;"></div>
<span style="top:1641.27px;font-size:4.8px;line-height:5.76px;color:#171b2e;letter-spacing:0.36px;left:53.95px;">Buy Tickets</span>
<div style="left:202.8px;top:1480.2px;width:151.3px;height:185.3px;background:#fff;border-radius:4px;box-shadow:0 1px 5px rgba(20,30,80,.07);"></div>
<div style="left:202.8px;top:1480.2px;width:151.3px;height:96.1px;border-radius:4px 4px 0 0;overflow:hidden;"><svg style="left:0;top:0;width:100%;height:100%"><use href="#p-guard" width="100%" height="100%"/></svg></div>
<div style="left:210.6px;top:1488.5px;width:42.3px;height:13.4px;background:#fff;border-radius:2.2px;"></div>
<svg style="left:217.63px;top:1493.29px" width="5.73" height="3.82" viewBox="0 0 21 14"><path d="M0 14 7.500 1 11.500 8 14 4.500 21 14z" fill="#fa4f5a"/><circle cx="13" cy="2" r="1.700" fill="#fa4f5a"/></svg>
<span style="top:1492.8px;font-size:5px;line-height:6px;color:#171b2e;font-weight:700;letter-spacing:0.14px;left:225.16px;">Outdoor</span>
<span style="top:1590.36px;font-size:8.4px;line-height:10.08px;color:#171b2e;font-weight:700;letter-spacing:-0.19px;left:212.4px;">South Beach Lifeguard</span>
<svg style="left:212.60px;top:1605.15px" width="4.6" height="5.75" viewBox="0 0 16 20"><path d="M8 0a8 8 0 0 0-8 8c0 5.500 8 12 8 12s8-6.500 8-12a8 8 0 0 0-8-8z" fill="#fa4f5a"/><circle cx="8" cy="8" r="3" fill="#fff"/></svg>
<span style="top:1605.52px;font-size:5.3px;line-height:6.36px;color:#6c6f85;letter-spacing:0.04px;left:220.8px;">14 Ocean Dr. Miami, FL 3315</span>
<svg style="left:212.30px;top:1618.80px" width="5.4" height="5.4" viewBox="0 0 20 20"><circle cx="10" cy="10" r="10" fill="#fa4f5a"/><path d="M10 5v5.500l3.500 2" stroke="#fff" stroke-width="2" fill="none"/></svg>
<span style="top:1618.92px;font-size:5.3px;line-height:6.36px;color:#6c6f85;letter-spacing:0px;left:220.8px;">Mon - Fri: 6:00 AM - 5:00 PM</span>
<div style="left:212.4px;top:1635.5px;width:39.4px;height:16.7px;background:#fff;border-radius:2.2px;border:.6px solid #3a3e50;"></div>
<span style="top:1641.27px;font-size:4.8px;line-height:5.76px;color:#171b2e;letter-spacing:0.34px;left:220.2px;">Book now</span>
<div style="left:369.5px;top:1480.2px;width:151.3px;height:185.3px;background:#fff;border-radius:4px;box-shadow:0 1px 5px rgba(20,30,80,.07);"></div>
<div style="left:369.5px;top:1480.2px;width:151.3px;height:96.1px;border-radius:4px 4px 0 0;overflow:hidden;"><svg style="left:0;top:0;width:100%;height:100%"><use href="#p-terrace" width="100%" height="100%"/></svg></div>
<div style="left:377.3px;top:1488.5px;width:51px;height:13.4px;background:#fff;border-radius:2.2px;"></div>
<svg style="left:382.19px;top:1491.94px" width="4.12" height="6.53" viewBox="0 0 12 19"><path d="M1 0v6a2 2 0 0 0 1.500 2V19h2V8A2 2 0 0 0 6 6V0H5v5H4V0H3v5H2V0z" fill="#fa4f5a"/><path d="M8 19V1c2.600.8 3.600 4 3.600 8 0 1.500-.8 2.500-1.600 3v7z" fill="#fa4f5a"/></svg>
<span style="top:1492.8px;font-size:5px;line-height:6px;color:#171b2e;font-weight:700;letter-spacing:0.13px;left:388.12px;">Food & drinks</span>
<span style="top:1590.36px;font-size:8.4px;line-height:10.08px;color:#171b2e;font-weight:700;letter-spacing:-0.1px;left:379.1px;">Vinya Table Restaurant</span>
<svg style="left:379.30px;top:1605.15px" width="4.6" height="5.75" viewBox="0 0 16 20"><path d="M8 0a8 8 0 0 0-8 8c0 5.500 8 12 8 12s8-6.500 8-12a8 8 0 0 0-8-8z" fill="#fa4f5a"/><circle cx="8" cy="8" r="3" fill="#fff"/></svg>
<span style="top:1605.52px;font-size:5.3px;line-height:6.36px;color:#6c6f85;letter-spacing:0.1px;left:387.5px;">47 Sage Ave. Miami, FL 3317</span>
<svg style="left:379.00px;top:1618.80px" width="5.4" height="5.4" viewBox="0 0 20 20"><circle cx="10" cy="10" r="10" fill="#fa4f5a"/><path d="M10 5v5.500l3.500 2" stroke="#fff" stroke-width="2" fill="none"/></svg>
<span style="top:1618.92px;font-size:5.3px;line-height:6.36px;color:#6c6f85;letter-spacing:0px;left:387.5px;">Mon - Fri: 9:00 AM - 8:00 PM</span>
<div style="left:379.1px;top:1635.5px;width:47px;height:16.7px;background:#fff;border-radius:2.2px;border:.6px solid #3a3e50;"></div>
<span style="top:1641.27px;font-size:4.8px;line-height:5.76px;color:#171b2e;letter-spacing:0.36px;left:387.1px;">Book a table</span></div>
<div class="ab" style="left:1309px;top:91.3px;width:554px;height:1600px"><div style="left:0px;top:41.7px;width:560px;height:247.5px;background:#f5f7fc;"></div>
<svg style="left:35.00px;top:16.40px" width="11.4" height="11.4" viewBox="0 0 24 24"><path d="M22 2 1.500 9.800 11 13l3.200 9.500z" fill="#fa4f5a" stroke="#fa4f5a" stroke-width="2" stroke-linejoin="round"/></svg>
<span style="top:17.12px;font-size:9.3px;line-height:11.16px;color:#171b2e;font-weight:700;letter-spacing:0.09px;left:51.1px;">LocalListing X</span>
<span style="top:18.72px;font-size:5.3px;line-height:6.36px;color:#171b2e;font-weight:700;letter-spacing:0.62px;left:222px;">Home</span>
<span style="top:18.72px;font-size:5.3px;line-height:6.36px;color:#171b2e;letter-spacing:0.57px;left:251.3px;">About</span>
<span style="top:18.72px;font-size:5.3px;line-height:6.36px;color:#171b2e;letter-spacing:0.51px;left:281px;">Pages</span>
<svg style="left:302.00px;top:21.08px" width="4.4" height="2.64" viewBox="0 0 10 6" fill="none" stroke="#171b2e" stroke-width="1.500"><path d="M1 1l4 4 4-4"/></svg>
<span style="top:18.72px;font-size:5.3px;line-height:6.36px;color:#171b2e;letter-spacing:0.54px;left:319.7px;">Cities</span>
<svg style="left:339.50px;top:21.08px" width="4.4" height="2.64" viewBox="0 0 10 6" fill="none" stroke="#171b2e" stroke-width="1.500"><path d="M1 1l4 4 4-4"/></svg>
<span style="top:18.72px;font-size:5.3px;line-height:6.36px;color:#171b2e;letter-spacing:0.49px;left:356.9px;">Experiences</span>
<svg style="left:394.90px;top:21.08px" width="4.4" height="2.64" viewBox="0 0 10 6" fill="none" stroke="#171b2e" stroke-width="1.500"><path d="M1 1l4 4 4-4"/></svg>
<div style="left:411.9px;top:20.1px;width:5.3px;height:4.8px;background:#fa4f5a;border-radius:1.4px 1.4px 1.2px 1.2px;"></div>
<div style="left:413.3px;top:18.6px;width:2.5px;height:2.6px;border-radius:1.2px 1.2px 0 0;border:.6px solid #fa4f5a;border-bottom:0;"></div>
<span style="top:18.72px;font-size:5.3px;line-height:6.36px;color:#171b2e;letter-spacing:0.45px;left:419.9px;">Cart (0)</span>
<div style="left:-26px;top:81px;width:37.8px;height:80.7px;border-radius:3px;overflow:hidden;"><svg style="left:0;top:0;width:100%;height:100%"><use href="#p-teal" width="100%" height="100%"/></svg></div>
<div style="left:20px;top:81px;width:80.9px;height:80.7px;border-radius:3px;overflow:hidden;"><svg style="left:0;top:0;width:100%;height:100%"><use href="#p-nyc" width="100%" height="100%"/></svg></div>
<div style="left:-36.3px;top:170.2px;width:80.8px;height:80.8px;border-radius:3px;overflow:hidden;"><svg style="left:0;top:0;width:100%;height:100%"><use href="#p-gate" width="100%" height="100%"/></svg></div>
<div style="left:54px;top:170.2px;width:80.8px;height:80.8px;border-radius:3px;overflow:hidden;"><svg style="left:0;top:0;width:100%;height:100%"><use href="#p-river" width="100%" height="100%"/></svg></div>
<div style="left:418.5px;top:170.2px;width:80.8px;height:80.8px;border-radius:3px;overflow:hidden;"><svg style="left:0;top:0;width:100%;height:100%"><use href="#p-bean" width="100%" height="100%"/></svg></div>
<span style="top:116.18px;font-size:19.2px;line-height:23.04px;color:#171b2e;font-weight:700;letter-spacing:-0.68px;left:148.5px;">Discover the best experiences</span>
<span style="top:138.58px;font-size:19.2px;line-height:23.04px;color:#171b2e;font-weight:700;letter-spacing:-0.59px;left:204.8px;">to do in your city</span>
<span style="top:167.64px;font-size:6.1px;line-height:7.32px;color:#6c6f85;letter-spacing:0.16px;left:158.55px;">Lorem ipsum dolor sit amet consectetur adipiscing elit aliquet non purus nibh mi mi</span>
<span style="top:177.34px;font-size:6.1px;line-height:7.32px;color:#6c6f85;letter-spacing:0.16px;left:165.7px;">non eros lectus ac odio in arcu aliquam enim mauris diam tortor pharetra urna</span>
<div style="left:212px;top:195.1px;width:47.3px;height:20.4px;background:#13182b;border-radius:2.2px;"></div>
<span style="top:202.36px;font-size:5.4px;line-height:6.48px;color:#fff;font-weight:700;letter-spacing:0.25px;left:221.45px;">Subscribe</span>
<div style="left:265px;top:195.1px;width:76.8px;height:20.4px;background:transparent;border-radius:2.2px;border:.6px solid #3a3e50;"></div>
<span style="top:202.36px;font-size:5.4px;line-height:6.48px;color:#171b2e;letter-spacing:0.45px;left:274.65px;">Explore experiences</span>
<div style="left:77.5px;top:258.7px;width:420px;height:61.7px;background:#fff;border-radius:4px;box-shadow:0 1px 5px rgba(20,30,80,.05);"></div>
<div style="left:109.3px;top:277.2px;width:180.7px;height:25.5px;background:#fff;border-radius:3px;box-shadow:0 .5px 3px rgba(20,30,80,.10);"></div>
<div style="left:117.2px;top:287.4px;width:4.6px;height:4.6px;background:#aeb3d6;border-radius:1px;"></div>
<span style="top:286.72px;font-size:5.8px;line-height:6.96px;color:#6c6f85;letter-spacing:0.19px;left:125.3px;">Search experiences</span>
<div style="left:247px;top:278.9px;width:41.7px;height:20.4px;background:#fa4f5a;border-radius:2.2px;"></div>
<span style="top:286.16px;font-size:5.4px;line-height:6.48px;color:#fff;font-weight:700;letter-spacing:0.25px;left:258.1px;">Search</span>
<div style="left:302px;top:277.2px;width:66px;height:25.5px;background:#fff;border-radius:3px;box-shadow:0 .5px 3px rgba(20,30,80,.10);"></div>
<svg style="left:311.00px;top:287.17px" width="3.6" height="4.50" viewBox="0 0 16 20"><path d="M8 0a8 8 0 0 0-8 8c0 5.500 8 12 8 12s8-6.500 8-12a8 8 0 0 0-8-8z" fill="#aeb3d6"/><circle cx="8" cy="8" r="3" fill="#fff"/></svg>
<span style="top:286.72px;font-size:5.8px;line-height:6.96px;color:#6c6f85;letter-spacing:0.4px;left:318px;">City</span>
<svg style="left:354.00px;top:288.50px" width="4" height="2.40" viewBox="0 0 10 6" fill="none" stroke="#9ea2bd" stroke-width="1.500"><path d="M1 1l4 4 4-4"/></svg>
<div style="left:379px;top:277.2px;width:66px;height:25.5px;background:#fff;border-radius:3px;box-shadow:0 .5px 3px rgba(20,30,80,.10);"></div>
<div style="left:388.3px;top:287.3px;width:4.6px;height:4.6px;background:#aeb3d6;border-radius:50%;"></div>
<span style="top:286.72px;font-size:5.8px;line-height:6.96px;color:#6c6f85;letter-spacing:0.46px;left:396.2px;">Category</span>
<svg style="left:431.30px;top:288.50px" width="4" height="2.40" viewBox="0 0 10 6" fill="none" stroke="#9ea2bd" stroke-width="1.500"><path d="M1 1l4 4 4-4"/></svg>
<span style="top:371.44px;font-size:12.6px;line-height:15.12px;color:#171b2e;font-weight:700;letter-spacing:-0.38px;left:35px;">Popular experiences</span>
<div style="left:34.4px;top:401.7px;width:291px;height:130.7px;background:#fff;border-radius:4px;box-shadow:0 1px 5px rgba(20,30,80,.07);"></div>
<div style="left:34.4px;top:401.7px;width:125.3px;height:130.7px;border-radius:4px 0 0 4px;overflow:hidden;"><svg style="left:0;top:0;width:100%;height:100%"><use href="#p-rest" width="100%" height="100%"/></svg></div>
<div style="left:44px;top:411.7px;width:51px;height:12.8px;background:#fff;border-radius:2.2px;"></div>
<svg style="left:48.89px;top:414.84px" width="4.12" height="6.53" viewBox="0 0 12 19"><path d="M1 0v6a2 2 0 0 0 1.500 2V19h2V8A2 2 0 0 0 6 6V0H5v5H4V0H3v5H2V0z" fill="#fa4f5a"/><path d="M8 19V1c2.600.8 3.600 4 3.600 8 0 1.500-.8 2.500-1.600 3v7z" fill="#fa4f5a"/></svg>
<span style="top:415.7px;font-size:5px;line-height:6px;color:#171b2e;font-weight:700;letter-spacing:0.13px;left:54.82px;">Food & drinks</span>
<span style="top:424.04px;font-size:9.1px;line-height:10.92px;color:#171b2e;font-weight:700;letter-spacing:-0.19px;left:180.5px;">Sushika Sushi Restaurant</span>
<span style="top:441.28px;font-size:5.2px;line-height:6.24px;color:#6c6f85;letter-spacing:0.18px;left:180.5px;">Urna amet tristique enim hac convallis lacus lorem</span>
<span style="top:450.38px;font-size:5.2px;line-height:6.24px;color:#6c6f85;letter-spacing:0.15px;left:180.5px;">tempus eget vivamus orci viverra lorem.</span>
<div style="left:180.5px;top:464.7px;width:123.5px;height:0.6px;background:#eaecf3;"></div>
<svg style="left:180.50px;top:474.67px" width="4.4" height="5.50" viewBox="0 0 16 20"><path d="M8 0a8 8 0 0 0-8 8c0 5.500 8 12 8 12s8-6.500 8-12a8 8 0 0 0-8-8z" fill="#fa4f5a"/><circle cx="8" cy="8" r="3" fill="#fff"/></svg>
<span style="top:474.78px;font-size:5.7px;line-height:6.84px;color:#171b2e;letter-spacing:0.27px;left:187.5px;">472 Border St. Freeport, NY 1152</span>
<div style="left:180.5px;top:494.7px;width:47.4px;height:16.9px;background:#13182b;border-radius:2.2px;"></div>
<span style="top:500.57px;font-size:4.8px;line-height:5.76px;color:#fff;font-weight:700;letter-spacing:0.25px;left:188.45px;">Book a table</span>
<div style="left:336.7px;top:401.7px;width:291px;height:130.7px;background:#fff;border-radius:4px;box-shadow:0 1px 5px rgba(20,30,80,.07);"></div>
<div style="left:336.7px;top:401.7px;width:125.3px;height:130.7px;border-radius:4px 0 0 4px;overflow:hidden;"><svg style="left:0;top:0;width:100%;height:100%"><use href="#p-museum" width="100%" height="100%"/></svg></div>
<div style="left:346.3px;top:411.7px;width:50px;height:12.8px;background:#fff;border-radius:2.2px;"></div>
<svg style="left:351.64px;top:416.19px" width="5.73" height="3.82" viewBox="0 0 21 14"><path d="M9 1.500 20.500 0c.5 6-1.500 10.500-6 11.500C10.500 10.500 9 6 9 1.500z" fill="#fa4f5a"/><path d="M0 4.500 11 3c.8 5.500-.8 10-5 11C2 13 0 9.500 0 4.500z" fill="#fa4f5a"/><path d="M3 7.500h2M7 7h2M4 10.500q2 1.500 4-.3" stroke="#fff" stroke-width=".8" fill="none"/></svg>
<span style="top:415.7px;font-size:5px;line-height:6px;color:#171b2e;font-weight:700;letter-spacing:0.12px;left:359.17px;">Art & culture</span>
<span style="top:424.04px;font-size:9.1px;line-height:10.92px;color:#171b2e;font-weight:700;letter-spacing:-0.08px;left:482.8px;">Natural History Museum</span>
<span style="top:441.28px;font-size:5.2px;line-height:6.24px;color:#6c6f85;letter-spacing:0.22px;left:482.8px;">Egestas lorem amet adipiscing elit vitae</span>
<span style="top:450.38px;font-size:5.2px;line-height:6.24px;color:#6c6f85;letter-spacing:0.41px;left:482.8px;">laoreet risus sed ultrices tempus.</span>
<div style="left:482.8px;top:464.7px;width:123.5px;height:0.6px;background:#eaecf3;"></div>
<svg style="left:482.80px;top:474.67px" width="4.4" height="5.50" viewBox="0 0 16 20"><path d="M8 0a8 8 0 0 0-8 8c0 5.500 8 12 8 12s8-6.500 8-12a8 8 0 0 0-8-8z" fill="#fa4f5a"/><circle cx="8" cy="8" r="3" fill="#fff"/></svg>
<span style="top:474.78px;font-size:5.7px;line-height:6.84px;color:#171b2e;letter-spacing:0.23px;left:489.8px;">762 Fulton St. San Francisco</span>
<div style="left:482.8px;top:494.7px;width:42.5px;height:16.9px;background:#13182b;border-radius:2.2px;"></div>
<span style="top:500.57px;font-size:4.8px;line-height:5.76px;color:#fff;font-weight:700;letter-spacing:0.17px;left:490.3px;">Buy tickets</span>
<div style="left:0px;top:579.1px;width:560px;height:1000px;background:#f5f7fc;"></div>
<span style="top:629.14px;font-size:12.6px;line-height:15.12px;color:#171b2e;font-weight:700;letter-spacing:-0.39px;left:35px;">Browse all experiences</span>
<div style="left:377px;top:626.5px;width:67px;height:19.1px;background:#fff;border-radius:3px;box-shadow:0 .5px 3px rgba(20,30,80,.07);"></div>
<div style="left:386px;top:633.7px;width:4px;height:4px;border-radius:50%;border:.7px solid #aeb3d6;"></div>
<span style="top:633.14px;font-size:5.6px;line-height:6.72px;color:#6c6f85;letter-spacing:0.26px;left:395px;">City</span>
<svg style="left:432.00px;top:634.80px" width="4" height="2.40" viewBox="0 0 10 6" fill="none" stroke="#9ea2bd" stroke-width="1.500"><path d="M1 1l4 4 4-4"/></svg>
<div style="left:34.4px;top:658.4px;width:150.7px;height:184.8px;background:#fff;border-radius:4px;box-shadow:0 1px 5px rgba(20,30,80,.05);"></div>
<div style="left:34.4px;top:658.4px;width:150.7px;height:95.6px;border-radius:4px 4px 0 0;overflow:hidden;"><svg style="left:0;top:0;width:100%;height:100%"><use href="#p-rest" width="100%" height="100%"/></svg></div>
<div style="left:42.4px;top:666.2px;width:51.4px;height:12.8px;background:#fff;border-radius:2.2px;"></div>
<svg style="left:47.49px;top:669.34px" width="4.12" height="6.53" viewBox="0 0 12 19"><path d="M1 0v6a2 2 0 0 0 1.500 2V19h2V8A2 2 0 0 0 6 6V0H5v5H4V0H3v5H2V0z" fill="#fa4f5a"/><path d="M8 19V1c2.600.8 3.600 4 3.600 8 0 1.500-.8 2.500-1.600 3v7z" fill="#fa4f5a"/></svg>
<span style="top:670.2px;font-size:5px;line-height:6px;color:#171b2e;font-weight:700;letter-spacing:0.13px;left:53.42px;">Food & drinks</span>
<span style="top:768.66px;font-size:8.4px;line-height:10.08px;color:#171b2e;font-weight:700;letter-spacing:-0.18px;left:44.5px;">Sushika Sushi Restaurant</span>
<svg style="left:44.60px;top:783.55px" width="4.6" height="5.75" viewBox="0 0 16 20"><path d="M8 0a8 8 0 0 0-8 8c0 5.500 8 12 8 12s8-6.500 8-12a8 8 0 0 0-8-8z" fill="#fa4f5a"/><circle cx="8" cy="8" r="3" fill="#fff"/></svg>
<span style="top:783.92px;font-size:5.3px;line-height:6.36px;color:#6c6f85;letter-spacing:0.48px;left:52.4px;">472 Border St. Freeport, NY 1152</span>
<svg style="left:44.30px;top:796.50px" width="5.4" height="5.4" viewBox="0 0 20 20"><circle cx="10" cy="10" r="10" fill="#fa4f5a"/><path d="M10 5v5.500l3.500 2" stroke="#fff" stroke-width="2" fill="none"/></svg>
<span style="top:796.62px;font-size:5.3px;line-height:6.36px;color:#6c6f85;letter-spacing:0.06px;left:52.4px;">Mon - Fri: 9:00 AM - 8:00 PM</span>
<div style="left:44.2px;top:813.7px;width:47.7px;height:16.5px;background:#fff;border-radius:2.2px;border:.6px solid #3a3e50;"></div>
<span style="top:819.37px;font-size:4.8px;line-height:5.76px;color:#171b2e;letter-spacing:0.41px;left:52.25px;">Book a table</span>
<div style="left:201.1px;top:658.4px;width:150.7px;height:184.8px;background:#fff;border-radius:4px;box-shadow:0 1px 5px rgba(20,30,80,.05);"></div>
<div style="left:201.1px;top:658.4px;width:150.7px;height:95.6px;border-radius:4px 4px 0 0;overflow:hidden;"><svg style="left:0;top:0;width:100%;height:100%"><use href="#p-museum" width="100%" height="100%"/></svg></div>
<div style="left:209.1px;top:666.2px;width:50.4px;height:12.8px;background:#fff;border-radius:2.2px;"></div>
<svg style="left:214.64px;top:670.69px" width="5.73" height="3.82" viewBox="0 0 21 14"><path d="M9 1.500 20.500 0c.5 6-1.500 10.500-6 11.500C10.500 10.500 9 6 9 1.500z" fill="#fa4f5a"/><path d="M0 4.500 11 3c.8 5.500-.8 10-5 11C2 13 0 9.500 0 4.500z" fill="#fa4f5a"/><path d="M3 7.500h2M7 7h2M4 10.500q2 1.500 4-.3" stroke="#fff" stroke-width=".8" fill="none"/></svg>
<span style="top:670.2px;font-size:5px;line-height:6px;color:#171b2e;font-weight:700;letter-spacing:0.12px;left:222.17px;">Art & culture</span>
<span style="top:768.66px;font-size:8.4px;line-height:10.08px;color:#171b2e;font-weight:700;letter-spacing:-0.06px;left:211.2px;">Natural History Museum</span>
<svg style="left:211.30px;top:783.55px" width="4.6" height="5.75" viewBox="0 0 16 20"><path d="M8 0a8 8 0 0 0-8 8c0 5.500 8 12 8 12s8-6.500 8-12a8 8 0 0 0-8-8z" fill="#fa4f5a"/><circle cx="8" cy="8" r="3" fill="#fff"/></svg>
<span style="top:783.92px;font-size:5.3px;line-height:6.36px;color:#6c6f85;letter-spacing:0.08px;left:219.1px;">218 St. Miami Beach, FL 3313</span>
<svg style="left:211.00px;top:796.50px" width="5.4" height="5.4" viewBox="0 0 20 20"><circle cx="10" cy="10" r="10" fill="#fa4f5a"/><path d="M10 5v5.500l3.500 2" stroke="#fff" stroke-width="2" fill="none"/></svg>
<span style="top:796.62px;font-size:5.3px;line-height:6.36px;color:#6c6f85;letter-spacing:0.02px;left:219.1px;">Mon - Fri: 2:00 PM - 8:00 PM</span>
<div style="left:210.9px;top:813.7px;width:39.5px;height:16.5px;background:#fff;border-radius:2.2px;border:.6px solid #3a3e50;"></div>
<span style="top:819.37px;font-size:4.8px;line-height:5.76px;color:#171b2e;letter-spacing:0.34px;left:218.75px;">Book now</span>
<div style="left:368.1px;top:658.4px;width:150.7px;height:184.8px;background:#fff;border-radius:4px;box-shadow:0 1px 5px rgba(20,30,80,.05);"></div>
<div style="left:368.1px;top:658.4px;width:150.7px;height:95.6px;border-radius:4px 4px 0 0;overflow:hidden;"><svg style="left:0;top:0;width:100%;height:100%"><use href="#p-skydeck2" width="100%" height="100%"/></svg></div>
<div style="left:376.1px;top:666.2px;width:41.4px;height:12.8px;background:#fff;border-radius:2.2px;"></div>
<svg style="left:381.89px;top:669.26px" width="4.67" height="6.67" viewBox="0 0 14 20"><path d="M7 0a7 7 0 0 1 7 7c0 4-3.500 7-5 9.500H5C3.500 14 0 11 0 7a7 7 0 0 1 7-7z" fill="#fa4f5a"/><rect x="5.200" y="16.800" width="3.600" height="3" rx=".8" fill="#fa4f5a"/></svg>
<span style="top:670.2px;font-size:5px;line-height:6px;color:#171b2e;font-weight:700;letter-spacing:0.11px;left:388.36px;">Activities</span>
<span style="top:768.66px;font-size:8.4px;line-height:10.08px;color:#171b2e;font-weight:700;letter-spacing:-0.19px;left:378.2px;">Chicago Skydeck Tower</span>
<svg style="left:378.30px;top:783.55px" width="4.6" height="5.75" viewBox="0 0 16 20"><path d="M8 0a8 8 0 0 0-8 8c0 5.500 8 12 8 12s8-6.500 8-12a8 8 0 0 0-8-8z" fill="#fa4f5a"/><circle cx="8" cy="8" r="3" fill="#fff"/></svg>
<span style="top:783.92px;font-size:5.3px;line-height:6.36px;color:#6c6f85;letter-spacing:0.1px;left:386.1px;">121 S. Front Ave Chicago, IL 6060</span>
<svg style="left:378.00px;top:796.50px" width="5.4" height="5.4" viewBox="0 0 20 20"><circle cx="10" cy="10" r="10" fill="#fa4f5a"/><path d="M10 5v5.500l3.500 2" stroke="#fff" stroke-width="2" fill="none"/></svg>
<span style="top:796.62px;font-size:5.3px;line-height:6.36px;color:#6c6f85;letter-spacing:0.03px;left:386.1px;">Mon - Fri: 10:00 AM - 4:00 PM</span>
<div style="left:377.9px;top:813.7px;width:43.1px;height:16.5px;background:#fff;border-radius:2.2px;border:.6px solid #3a3e50;"></div>
<span style="top:819.37px;font-size:4.8px;line-height:5.76px;color:#171b2e;letter-spacing:0.34px;left:385.95px;">Buy tickets</span>
<div style="left:34.4px;top:860.2px;width:150.7px;height:184.8px;background:#fff;border-radius:4px;box-shadow:0 1px 5px rgba(20,30,80,.05);"></div>
<div style="left:34.4px;top:860.2px;width:150.7px;height:95.6px;border-radius:4px 4px 0 0;overflow:hidden;"><svg style="left:0;top:0;width:100%;height:100%"><use href="#p-club" width="100%" height="100%"/></svg></div>
<div style="left:42.4px;top:868px;width:41.4px;height:12.8px;background:#fff;border-radius:2.2px;"></div>
<svg style="left:49.53px;top:871.23px" width="4.34" height="6.34" viewBox="0 0 13 19"><path d="M2 0h2v5c1.500.8 2 2 2 3.500V18a1 1 0 0 1-1 1H1a1 1 0 0 1-1-1V8.500C0 7 .5 5.800 2 5z" fill="#fa4f5a"/><path d="M7 8h6c0 3.500-.8 5.500-2.400 6v3.500H12V19H8v-1.500h1.400V14C7.800 13.500 7 11.500 7 8z" fill="#fa4f5a"/></svg>
<span style="top:872px;font-size:5px;line-height:6px;color:#171b2e;font-weight:700;letter-spacing:0.11px;left:55.67px;">Nightlife</span>
<span style="top:970.46px;font-size:8.4px;line-height:10.08px;color:#171b2e;font-weight:700;letter-spacing:-0.09px;left:44.5px;">Temple Nightclub</span>
<svg style="left:44.60px;top:985.35px" width="4.6" height="5.75" viewBox="0 0 16 20"><path d="M8 0a8 8 0 0 0-8 8c0 5.500 8 12 8 12s8-6.500 8-12a8 8 0 0 0-8-8z" fill="#fa4f5a"/><circle cx="8" cy="8" r="3" fill="#fff"/></svg>
<span style="top:985.72px;font-size:5.3px;line-height:6.36px;color:#6c6f85;letter-spacing:0.1px;left:52.4px;">548 Linden Ave. Miami, FL 3318</span>
<svg style="left:44.30px;top:998.30px" width="5.4" height="5.4" viewBox="0 0 20 20"><circle cx="10" cy="10" r="10" fill="#fa4f5a"/><path d="M10 5v5.500l3.500 2" stroke="#fff" stroke-width="2" fill="none"/></svg>
<span style="top:998.42px;font-size:5.3px;line-height:6.36px;color:#6c6f85;letter-spacing:0.06px;left:52.4px;">Mon - Fri: 10:00 AM - 8:00 PM</span>
<div style="left:44.2px;top:1015.5px;width:47.7px;height:16.5px;background:#fff;border-radius:2.2px;border:.6px solid #3a3e50;"></div>
<span style="top:1021.17px;font-size:4.8px;line-height:5.76px;color:#171b2e;letter-spacing:0.41px;left:52.25px;">Book a table</span>
<div style="left:201.1px;top:860.2px;width:150.7px;height:184.8px;background:#fff;border-radius:4px;box-shadow:0 1px 5px rgba(20,30,80,.05);"></div>
<div style="left:201.1px;top:860.2px;width:150.7px;height:95.6px;border-radius:4px 4px 0 0;overflow:hidden;"><svg style="left:0;top:0;width:100%;height:100%"><use href="#p-theater" width="100%" height="100%"/></svg></div>
<div style="left:209.1px;top:868px;width:54.8px;height:12.8px;background:#fff;border-radius:2.2px;"></div>
<svg style="left:215.22px;top:871.67px" width="5.46" height="5.46" viewBox="0 0 15 15"><path d="M6 5.500 14.500 4v8.200a2.300 2.300 0 1 1-1.600-2.200V6.500L7.600 7.500v5.700A2.300 2.300 0 1 1 6 11z" fill="#fa4f5a"/><path d="M2.800 0 4.200 0V5.200A1.900 1.900 0 1 1 2.800 3.400zM4 0 6 1.500 4.200 2.500z" fill="#fa4f5a"/></svg>
<span style="top:872px;font-size:5px;line-height:6px;color:#171b2e;font-weight:700;letter-spacing:0.13px;left:222.48px;">Entertainment</span>
<span style="top:970.46px;font-size:8.4px;line-height:10.08px;color:#171b2e;font-weight:700;letter-spacing:-0.07px;left:211.2px;">Chicago Movie Theather</span>
<svg style="left:211.30px;top:985.35px" width="4.6" height="5.75" viewBox="0 0 16 20"><path d="M8 0a8 8 0 0 0-8 8c0 5.500 8 12 8 12s8-6.500 8-12a8 8 0 0 0-8-8z" fill="#fa4f5a"/><circle cx="8" cy="8" r="3" fill="#fff"/></svg>
<span style="top:985.72px;font-size:5.3px;line-height:6.36px;color:#6c6f85;letter-spacing:0.06px;left:219.1px;">680 Lakeshore San Francisco, CA 9406</span>
<svg style="left:211.00px;top:998.30px" width="5.4" height="5.4" viewBox="0 0 20 20"><circle cx="10" cy="10" r="10" fill="#fa4f5a"/><path d="M10 5v5.500l3.500 2" stroke="#fff" stroke-width="2" fill="none"/></svg>
<span style="top:998.42px;font-size:5.3px;line-height:6.36px;color:#6c6f85;letter-spacing:-0.02px;left:219.1px;">Mon - Fri: 10:00 AM - 8:00 PM</span>
<div style="left:210.9px;top:1015.5px;width:39.5px;height:16.5px;background:#fff;border-radius:2.2px;border:.6px solid #3a3e50;"></div>
<span style="top:1021.17px;font-size:4.8px;line-height:5.76px;color:#171b2e;letter-spacing:0.34px;left:218.75px;">Book now</span>
<div style="left:368.1px;top:860.2px;width:150.7px;height:184.8px;background:#fff;border-radius:4px;box-shadow:0 1px 5px rgba(20,30,80,.05);"></div>
<div style="left:368.1px;top:860.2px;width:150.7px;height:95.6px;border-radius:4px 4px 0 0;overflow:hidden;"><svg style="left:0;top:0;width:100%;height:100%"><use href="#p-seaair" width="100%" height="100%"/></svg></div>
<div style="left:376.1px;top:868px;width:50.4px;height:12.8px;background:#fff;border-radius:2.2px;"></div>
<svg style="left:381.64px;top:872.49px" width="5.73" height="3.82" viewBox="0 0 21 14"><path d="M9 1.500 20.500 0c.5 6-1.500 10.500-6 11.500C10.500 10.500 9 6 9 1.500z" fill="#fa4f5a"/><path d="M0 4.500 11 3c.8 5.500-.8 10-5 11C2 13 0 9.500 0 4.500z" fill="#fa4f5a"/><path d="M3 7.500h2M7 7h2M4 10.500q2 1.500 4-.3" stroke="#fff" stroke-width=".8" fill="none"/></svg>
<span style="top:872px;font-size:5px;line-height:6px;color:#171b2e;font-weight:700;letter-spacing:0.12px;left:389.17px;">Art & culture</span>
<span style="top:970.46px;font-size:8.4px;line-height:10.08px;color:#171b2e;font-weight:700;letter-spacing:0.05px;left:378.2px;">Sea, Air &amp; Space Museum</span>
<svg style="left:378.30px;top:985.35px" width="4.6" height="5.75" viewBox="0 0 16 20"><path d="M8 0a8 8 0 0 0-8 8c0 5.500 8 12 8 12s8-6.500 8-12a8 8 0 0 0-8-8z" fill="#fa4f5a"/><circle cx="8" cy="8" r="3" fill="#fff"/></svg>
<span style="top:985.72px;font-size:5.3px;line-height:6.36px;color:#6c6f85;letter-spacing:0.14px;left:386.1px;">447 Clark St. Brooklyn, NY 1121</span>
<svg style="left:378.00px;top:998.30px" width="5.4" height="5.4" viewBox="0 0 20 20"><circle cx="10" cy="10" r="10" fill="#fa4f5a"/><path d="M10 5v5.500l3.500 2" stroke="#fff" stroke-width="2" fill="none"/></svg>
<span style="top:998.42px;font-size:5.3px;line-height:6.36px;color:#6c6f85;letter-spacing:0.02px;left:386.1px;">Mon - Fri: 2:00 PM - 10:00 PM</span>
<div style="left:377.9px;top:1015.5px;width:43.1px;height:16.5px;background:#fff;border-radius:2.2px;border:.6px solid #3a3e50;"></div>
<span style="top:1021.17px;font-size:4.8px;line-height:5.76px;color:#171b2e;letter-spacing:0.34px;left:385.95px;">Buy tickets</span>
<div style="left:236.8px;top:1058.2px;width:42.9px;height:20.8px;background:transparent;border-radius:2.2px;border:.6px solid #3a3e50;"></div>
<span style="top:1065.66px;font-size:5.4px;line-height:6.48px;color:#171b2e;letter-spacing:0.44px;left:246px;">Previous</span>
<div style="left:285.3px;top:1058.2px;width:31.6px;height:20.8px;background:#13182b;border-radius:2.2px;"></div>
<span style="top:1065.66px;font-size:5.4px;line-height:6.48px;color:#fff;font-weight:700;letter-spacing:0.45px;left:294.35px;">Next</span>
<div style="left:0px;top:1125.7px;width:560px;height:184.8px;background:#13182b;overflow:hidden;"><svg style="left:0;top:0" width="448" height="184.800" viewBox="0 0 448 184.800"><path d="M0 66.200 24.800 41.300H52.600V25.200H70V184.800H0z" fill="#1f2a5e"/><path d="M190 97.700H196L202.800 99.200 213 153.400 227 154.800 228.400 135 261.400 126.600V184.800H190z" fill="#1f2a5e"/><path d="M291.400 177.500 314 184.800H291.400z" fill="#1f2a5e"/></svg><div style="left:57px;top:17.800px;width:138.900px;height:200px;background:#eef0f6;border-radius:21px 21px 0 0;overflow:hidden;box-shadow:inset 0 0 0 3px #fbfcfe"><span style="left:19px;top:11.500px;font-size:4.800px;font-weight:700;color:#171b2e;opacity:.8">9:41</span><div style="left:44px;top:5.500px;width:50px;height:11px;border-radius:6px;background:#f5f6fa"></div><div style="left:99px;top:12.800px;width:5px;height:3px;background:#171b2e;border-radius:.5px"></div><div style="left:106.500px;top:12.800px;width:5px;height:3px;background:#171b2e;border-radius:1.500px 1.500px 0 0"></div><div style="left:114px;top:12.600px;width:8px;height:3.300px;background:#171b2e;border-radius:1.200px"></div><div style="left:13.800px;top:26.500px;width:8.200px;height:10px;border-radius:3.500px;background:linear-gradient(#5a4334 30%,#d9a98a 30%,#d9a98a 62%,#e9edf5 62%)"></div><span style="left:26.700px;top:28.600px;font-size:4.900px;font-weight:700;color:#171b2e;letter-spacing:.1px">Welcome John!</span><div style="left:115.500px;top:27.500px;width:11.200px;height:.9px;background:#171b2e;box-shadow:0 4.700px 0 #171b2e"></div><span style="left:11.700px;top:43.900px;font-size:8.800px;line-height:11px;font-weight:700;color:#171b2e;letter-spacing:.12px">Discover the best</span><span style="left:11.700px;top:54.600px;font-size:8.800px;line-height:11px;font-weight:700;color:#171b2e;letter-spacing:.05px">experiences in your city</span><div style="left:13.200px;top:74.800px;width:44.700px;height:12.400px;background:#f7f8fb;border-radius:2.500px"></div><div style="left:64.500px;top:74.800px;width:46.100px;height:12.400px;background:#f7f8fb;border-radius:2.500px"></div><div style="left:118.700px;top:74.800px;width:30px;height:12.400px;background:#f7f8fb;border-radius:2.500px"></div><svg style="left:17.500px;top:76.600px" width="4.300" height="8.800" viewBox="0 0 12 19"><path d="M1 0v6a2 2 0 0 0 1.500 2V19h2V8A2 2 0 0 0 6 6V0H5v5H4V0H3v5H2V0z" fill="#171b2e"/><path d="M8 19V1c2.600.8 3.600 4 3.600 8 0 1.500-.8 2.500-1.600 3v7z" fill="#fa4f5a"/></svg><span style="left:26.500px;top:78.600px;font-size:4px;font-weight:700;color:#171b2e">Food &amp; drinks</span><svg style="left:67.800px;top:77.800px" width="10" height="6.600" viewBox="0 0 21 14"><path d="M9 1.500 20.500 0c.5 6-1.500 10.500-6 11.500C10.500 10.500 9 6 9 1.500z" fill="#171b2e"/><path d="M0 4.500 11 3c.8 5.500-.8 10-5 11C2 13 0 9.500 0 4.500z" fill="#fa4f5a"/></svg><span style="left:81px;top:78.600px;font-size:4px;font-weight:700;color:#171b2e">Art &amp; culture</span><svg style="left:122.800px;top:77.500px" width="10" height="6.800" viewBox="0 0 21 14"><path d="M0 14 7.500 1 11.500 8 14 4.500 21 14z" fill="#171b2e"/></svg><div style="left:7px;top:96px;width:125.600px;height:110px;overflow:hidden;background:#eef0f6"><svg style="left:0;top:0" width="125.600" height="110" viewBox="0 0 125.600 110"><path d="M62 20h10v-6h10v6h8v40H62zM98 30h8v-6h8v6h6v40H98z" fill="#cdd8f1"/><path d="M40 6h8l6 6v40H40z" fill="#a9bce6"/><path d="M0 40 60 44Q84 46 98 58L125.600 66V110H0z" fill="#2d436b"/><path d="M0 52 76 50 125.600 76V110H0z" fill="#34496e"/><path d="M96 58l29.600 8v20L96 70z" fill="#3d5686"/><path d="M0 2h4l5 6v38H0zM40 6l8-4 4 6v42H40z" fill="#1d2b52"/><path d="M4 8h13v34H4zM46 14h13v36H46zM76 40h14v10H76z" fill="#fff"/><path d="M30 18h9v30h-9zM52 30l7-8 7 8v20H52z" fill="#2a3a68"/><path d="M59 22h8l7 8h-8z" fill="#a9bce6"/><path d="M60 36h13v14H60z" fill="#fff"/><path d="M6 12h3v3H6zM11 12h3v3h-3zM6 18h3v3H6zM11 18h3v3h-3zM6 24h3v3H6zM48 20h3v3h-3zM53 20h3v3h-3zM48 26h3v3h-3zM53 26h3v3h-3zM48 32h3v3h-3zM53 32h3v3h-3zM48 38h3v3h-3zM79 43h3v4h-3zM84 43h3v4h-3z" fill="#1d2b52"/><circle cx="27" cy="9" r="4.200" fill="#fa4f5a"/><path d="M26.600 13v8" stroke="#1d2b52" stroke-width=".6"/><ellipse cx="2" cy="24" rx="4" ry="8" fill="#fa4f5a"/><circle cx="23" cy="28" r="5" fill="#fa4f5a"/><ellipse cx="46" cy="38" rx="5" ry="8" fill="#fa4f5a"/><ellipse cx="87" cy="27" rx="4.500" ry="8" fill="#fa4f5a"/><path d="M56 50q10-9 24 0z" fill="#fa4f5a"/><path d="M14 28q0 12 12 16l10 4v3q-26-4-26-23z" fill="#fff"/><path d="M14 32q2 10 14 13l8 3" fill="none" stroke="#fa4f5a" stroke-width="2"/><path d="M6 40h20l6 5H6z" fill="#c9d3ec"/><path d="M4 48h6M12 48h3M18 48h10" stroke="#fff" stroke-width="1.500"/></svg></div></div></div>
<span style="top:1173.82px;font-size:12.3px;line-height:14.76px;color:#fff;font-weight:700;letter-spacing:0.33px;left:297px;">Subscribe and get 10% OFF</span>
<span style="top:1190.72px;font-size:12.3px;line-height:14.76px;color:#fff;font-weight:700;letter-spacing:0.18px;left:297px;">on your first experience!</span>
<span style="top:1214.18px;font-size:5.2px;line-height:6.24px;color:#e6e8f2;letter-spacing:0.2px;left:297px;">Lorem ipsum dolor sit amet consectetur adipiscing elit facilisi</span>
<span style="top:1223.68px;font-size:5.2px;line-height:6.24px;color:#e6e8f2;letter-spacing:0.22px;left:297px;">arcu quam risus nullam eget vitae malesuada cursus enim</span>
<div style="left:297px;top:1241.5px;width:121.5px;height:20.8px;background:#fff;border-radius:2.2px;"></div>
<div style="left:306px;top:1249.4px;width:6.2px;height:5px;background:#c3c9e6;border-radius:1px;"></div>
<span style="top:1249.14px;font-size:5.6px;line-height:6.72px;color:#7d8096;letter-spacing:0.33px;left:316.5px;">Enter your email</span>
<div style="left:427.6px;top:1241.5px;width:47.4px;height:20.8px;background:#fa4f5a;border-radius:2.2px;"></div>
<span style="top:1248.96px;font-size:5.4px;line-height:6.48px;color:#fff;font-weight:700;letter-spacing:0.25px;left:437.1px;">Subscribe</span>
<span style="top:1359.64px;font-size:12.6px;line-height:15.12px;color:#171b2e;font-weight:700;letter-spacing:-0.36px;left:207.55px;">What our customers say</span>
<span style="top:1382.24px;font-size:6.1px;line-height:7.32px;color:#6c6f85;letter-spacing:0.14px;left:193.8px;">Lorem ipsum dolor sit amet, consectetur adipiscing elit nisi</span>
<span style="top:1392.14px;font-size:6.1px;line-height:7.32px;color:#6c6f85;letter-spacing:0.15px;left:204.45px;">eleifend venenatis magna est feugiat pellentesque.</span>
<div style="left:1.4px;top:1414.4px;width:137.6px;height:79.6px;background:#fff;border-radius:4px;box-shadow:0 1px 5px rgba(20,30,80,.04);"></div>
<div style="left:13.7px;top:1426.2px;width:18px;height:18px;background:#dfe6f5;border-radius:50%;overflow:hidden;"><div style="left:6px;top:3.500px;width:6px;height:7px;border-radius:50%;background:#d9b79a"></div><div style="left:5.600px;top:2.600px;width:6.800px;height:3.400px;border-radius:3px 3px 0 0;background:#5a3f2f"></div><div style="left:3px;top:11px;width:12px;height:9px;border-radius:5px 5px 0 0;background:#f0f3fa"></div></div>
<span style="top:1427.22px;font-size:5.8px;line-height:6.96px;color:#171b2e;font-weight:700;letter-spacing:0.18px;left:36.5px;">John Carter</span>
<span style="top:1436.46px;font-size:5.9px;line-height:7.08px;color:#6c6f85;letter-spacing:0.3px;left:36.5px;">New York, NY</span>
<div style="left:114px;top:1428.6px;width:11.4px;height:11.4px;background:#fff;border-radius:2px;box-shadow:0 .5px 2px rgba(20,30,80,.08);"></div>
<svg style="left:116.50px;top:1431.10px" width="6.400" height="6.400" viewBox="0 0 10 10"><path d="M1 8.500c3.500 1.500 7-1 7-5l1-1.200-1.300.2.900-1.200-1.400.5C5.800 .5 3.800 1.500 4.200 3.500 2.800 3.500 1.800 2.800 1 1.800c-.5 1.200 0 2.300.8 3l-.9-.2c0 1 .7 1.900 1.700 2.200l-.9.100c.3.800 1 1.300 1.900 1.300-.8.400-1.600.500-2.600.300z" fill="#fa4f5a"/></svg>
<span style="top:1452.64px;font-size:6.1px;line-height:7.32px;color:#6c6f85;letter-spacing:0.2px;left:13.3px;">Diam ac fames in metus ipsum nisi</span>
<span style="top:1462.64px;font-size:6.1px;line-height:7.32px;color:#6c6f85;letter-spacing:0.19px;left:13.3px;">dolor penatibus id mauris lectus luctus</span>
<span style="top:1472.64px;font-size:6.1px;line-height:7.32px;color:#6c6f85;letter-spacing:0.19px;left:13.3px;">semper nisi elementum ac leo sit.</span>
<div style="left:149.7px;top:1414.4px;width:137.6px;height:79.6px;background:#fff;border-radius:4px;box-shadow:0 1px 5px rgba(20,30,80,.04);"></div>
<div style="left:162px;top:1426.2px;width:18px;height:18px;background:#dfe6f5;border-radius:50%;overflow:hidden;"><div style="left:6px;top:3.500px;width:6px;height:7px;border-radius:50%;background:#e6c3a8"></div><div style="left:5.600px;top:2.600px;width:6.800px;height:3.400px;border-radius:3px 3px 0 0;background:#c99a6a"></div><div style="left:3px;top:11px;width:12px;height:9px;border-radius:5px 5px 0 0;background:#f0f3fa"></div></div>
<span style="top:1427.22px;font-size:5.8px;line-height:6.96px;color:#171b2e;font-weight:700;letter-spacing:0.18px;left:184.8px;">Lily Woods</span>
<span style="top:1436.46px;font-size:5.9px;line-height:7.08px;color:#6c6f85;letter-spacing:0.29px;left:184.8px;">San Francisco, CA</span>
<div style="left:262.3px;top:1428.6px;width:11.4px;height:11.4px;background:#fff;border-radius:2px;box-shadow:0 .5px 2px rgba(20,30,80,.08);"></div>
<svg style="left:264.80px;top:1431.10px" width="6.400" height="6.400" viewBox="0 0 10 10"><path d="M5.600 10V5.800h1.300l.2-1.600H5.600V3.300c0-.5.200-.8.800-.8h.8V1.100C7 1.100 6.500 1 6 1 4.800 1 4 1.700 4 3v1.200H2.800v1.600H4V10z" fill="#fa4f5a"/></svg>
<span style="top:1452.64px;font-size:6.1px;line-height:7.32px;color:#6c6f85;letter-spacing:0.2px;left:161.6px;">Lorem ipsum dolor sit amet ipsum non</span>
<span style="top:1462.64px;font-size:6.1px;line-height:7.32px;color:#6c6f85;letter-spacing:0.18px;left:161.6px;">consectetur adipiscing elit hendrerit</span>
<span style="top:1472.64px;font-size:6.1px;line-height:7.32px;color:#6c6f85;letter-spacing:0.18px;left:161.6px;">elit at a at cursus nibh lorem aliquam.</span>
<div style="left:298px;top:1414.4px;width:137.6px;height:79.6px;background:#fff;border-radius:4px;box-shadow:0 1px 5px rgba(20,30,80,.04);"></div>
<div style="left:310.3px;top:1426.2px;width:18px;height:18px;background:#dfe6f5;border-radius:50%;overflow:hidden;"><div style="left:6px;top:3.500px;width:6px;height:7px;border-radius:50%;background:#e0b99a"></div><div style="left:5.600px;top:2.600px;width:6.800px;height:3.400px;border-radius:3px 3px 0 0;background:#7a5a3f"></div><div style="left:3px;top:11px;width:12px;height:9px;border-radius:5px 5px 0 0;background:#f0f3fa"></div></div>
<span style="top:1427.22px;font-size:5.8px;line-height:6.96px;color:#171b2e;font-weight:700;letter-spacing:0.19px;left:333.1px;">Andy Smith</span>
<span style="top:1436.46px;font-size:5.9px;line-height:7.08px;color:#6c6f85;letter-spacing:0.27px;left:333.1px;">Chicago, IL</span>
<div style="left:410.6px;top:1428.6px;width:11.4px;height:11.4px;background:#fff;border-radius:2px;box-shadow:0 .5px 2px rgba(20,30,80,.08);"></div>
<svg style="left:413.10px;top:1431.10px" width="6.400" height="6.400" viewBox="0 0 10 10"><rect x="1.500" y="1.500" width="7" height="7" rx="2" fill="#fa4f5a"/><circle cx="5" cy="5" r="1.700" fill="none" stroke="#fff" stroke-width=".8"/></svg>
<span style="top:1452.64px;font-size:6.1px;line-height:7.32px;color:#6c6f85;letter-spacing:0.18px;left:309.9px;">Eu tempus viverra mi porttitor ut at</span>
<span style="top:1462.64px;font-size:6.1px;line-height:7.32px;color:#6c6f85;letter-spacing:0.19px;left:309.9px;">neque ut nisi sed pharetra sodales</span>
<span style="top:1472.64px;font-size:6.1px;line-height:7.32px;color:#6c6f85;letter-spacing:0.17px;left:309.9px;">ultrices volutpat tincidunt dictum ut.</span>
<div style="left:446px;top:1414.4px;width:137.6px;height:79.6px;background:#fff;border-radius:4px;box-shadow:0 1px 5px rgba(20,30,80,.04);"></div>
<div style="left:458.3px;top:1426.2px;width:18px;height:18px;background:#dfe6f5;border-radius:50%;overflow:hidden;"><div style="left:6px;top:3.500px;width:6px;height:7px;border-radius:50%;background:#d9b79a"></div><div style="left:5.600px;top:2.600px;width:6.800px;height:3.400px;border-radius:3px 3px 0 0;background:#5a3f2f"></div><div style="left:3px;top:11px;width:12px;height:9px;border-radius:5px 5px 0 0;background:#f0f3fa"></div></div>
<span style="top:1427.22px;font-size:5.8px;line-height:6.96px;color:#171b2e;font-weight:700;letter-spacing:0.19px;left:481.1px;">Sophie Moore</span>
<span style="top:1436.46px;font-size:5.9px;line-height:7.08px;color:#6c6f85;letter-spacing:0.29px;left:481.1px;">Miami, FL</span>
<div style="left:558.6px;top:1428.6px;width:11.4px;height:11.4px;background:#fff;border-radius:2px;box-shadow:0 .5px 2px rgba(20,30,80,.08);"></div>
<svg style="left:561.10px;top:1431.10px" width="6.400" height="6.400" viewBox="0 0 10 10"><path d="M5.600 10V5.800h1.300l.2-1.600H5.600V3.300c0-.5.200-.8.800-.8h.8V1.100C7 1.100 6.500 1 6 1 4.800 1 4 1.700 4 3v1.200H2.800v1.600H4V10z" fill="#fa4f5a"/></svg>
<span style="top:1452.64px;font-size:6.1px;line-height:7.32px;color:#6c6f85;letter-spacing:0.23px;left:457.9px;">Metus</span>
<span style="top:1462.64px;font-size:6.1px;line-height:7.32px;color:#6c6f85;letter-spacing:0.17px;left:457.9px;">iaculis</span>
<span style="top:1472.64px;font-size:6.1px;line-height:7.32px;color:#6c6f85;letter-spacing:0.23px;left:457.9px;">sed</span>
<div style="left:-28.7px;top:1504px;width:137.6px;height:79.6px;background:#fff;border-radius:4px;box-shadow:0 1px 5px rgba(20,30,80,.04);"></div>
<div style="left:-16.4px;top:1515.8px;width:18px;height:18px;background:#dfe6f5;border-radius:50%;overflow:hidden;"><div style="left:6px;top:3.500px;width:6px;height:7px;border-radius:50%;background:#d9b79a"></div><div style="left:5.600px;top:2.600px;width:6.800px;height:3.400px;border-radius:3px 3px 0 0;background:#5a3f2f"></div><div style="left:3px;top:11px;width:12px;height:9px;border-radius:5px 5px 0 0;background:#f0f3fa"></div></div>
<span style="top:1516.82px;font-size:5.8px;line-height:6.96px;color:#171b2e;font-weight:700;letter-spacing:0.19px;left:6.4px;">Arnold Graham</span>
<span style="top:1526.06px;font-size:5.9px;line-height:7.08px;color:#6c6f85;letter-spacing:0.29px;left:6.4px;">San Francisco, CA</span>
<div style="left:83.9px;top:1518.2px;width:11.4px;height:11.4px;background:#fff;border-radius:2px;box-shadow:0 .5px 2px rgba(20,30,80,.08);"></div>
<svg style="left:86.40px;top:1520.70px" width="6.400" height="6.400" viewBox="0 0 10 10"><path d="M5.600 10V5.800h1.300l.2-1.600H5.600V3.300c0-.5.200-.8.800-.8h.8V1.100C7 1.100 6.500 1 6 1 4.800 1 4 1.700 4 3v1.200H2.800v1.600H4V10z" fill="#fa4f5a"/></svg>
<span style="top:1542.24px;font-size:6.1px;line-height:7.32px;color:#6c6f85;letter-spacing:0.2px;left:-16.8px;">Lorem ipsum dolor sit amet, lorem non</span>
<span style="top:1552.24px;font-size:6.1px;line-height:7.32px;color:#6c6f85;letter-spacing:0.18px;left:-16.8px;">consectetur adipiscing elit, id donec</span>
<div style="left:119.3px;top:1504px;width:137.6px;height:79.6px;background:#fff;border-radius:4px;box-shadow:0 1px 5px rgba(20,30,80,.04);"></div>
<div style="left:131.6px;top:1515.8px;width:18px;height:18px;background:#dfe6f5;border-radius:50%;overflow:hidden;"><div style="left:6px;top:3.500px;width:6px;height:7px;border-radius:50%;background:#c99a78"></div><div style="left:5.600px;top:2.600px;width:6.800px;height:3.400px;border-radius:3px 3px 0 0;background:#2a2220"></div><div style="left:3px;top:11px;width:12px;height:9px;border-radius:5px 5px 0 0;background:#f0f3fa"></div></div>
<span style="top:1516.82px;font-size:5.8px;line-height:6.96px;color:#171b2e;font-weight:700;letter-spacing:0.19px;left:154.4px;">Matt Cannon</span>
<span style="top:1526.06px;font-size:5.9px;line-height:7.08px;color:#6c6f85;letter-spacing:0.27px;left:154.4px;">Chicago, IL</span>
<div style="left:231.9px;top:1518.2px;width:11.4px;height:11.4px;background:#fff;border-radius:2px;box-shadow:0 .5px 2px rgba(20,30,80,.08);"></div>
<svg style="left:234.40px;top:1520.70px" width="6.400" height="6.400" viewBox="0 0 10 10"><rect x="1.500" y="1.500" width="7" height="7" rx="2" fill="#fa4f5a"/><circle cx="5" cy="5" r="1.700" fill="none" stroke="#fff" stroke-width=".8"/></svg>
<span style="top:1542.24px;font-size:6.1px;line-height:7.32px;color:#6c6f85;letter-spacing:0.2px;left:131.2px;">Id luctus pretium rhoncus vel commodo</span>
<span style="top:1552.24px;font-size:6.1px;line-height:7.32px;color:#6c6f85;letter-spacing:0.19px;left:131.2px;">ut velit et purus lectus non augue eu</span>
<div style="left:267.2px;top:1504px;width:137.6px;height:79.6px;background:#fff;border-radius:4px;box-shadow:0 1px 5px rgba(20,30,80,.04);"></div>
<div style="left:279.5px;top:1515.8px;width:18px;height:18px;background:#dfe6f5;border-radius:50%;overflow:hidden;"><div style="left:6px;top:3.500px;width:6px;height:7px;border-radius:50%;background:#c9987a"></div><div style="left:5.600px;top:2.600px;width:6.800px;height:3.400px;border-radius:3px 3px 0 0;background:#4a3325"></div><div style="left:3px;top:11px;width:12px;height:9px;border-radius:5px 5px 0 0;background:#f0f3fa"></div></div>
<span style="top:1516.82px;font-size:5.8px;line-height:6.96px;color:#171b2e;font-weight:700;letter-spacing:0.18px;left:302.3px;">Patrick Meyers</span>
<span style="top:1526.06px;font-size:5.9px;line-height:7.08px;color:#6c6f85;letter-spacing:0.29px;left:302.3px;">Miami, FL</span>
<div style="left:379.8px;top:1518.2px;width:11.4px;height:11.4px;background:#fff;border-radius:2px;box-shadow:0 .5px 2px rgba(20,30,80,.08);"></div>
<svg style="left:382.30px;top:1520.70px" width="6.400" height="6.400" viewBox="0 0 10 10"><path d="M1 8.500c3.500 1.500 7-1 7-5l1-1.200-1.300.2.900-1.200-1.400.5C5.800 .5 3.800 1.500 4.200 3.500 2.800 3.500 1.800 2.800 1 1.800c-.5 1.200 0 2.300.8 3l-.9-.2c0 1 .7 1.900 1.700 2.200l-.9.100c.3.800 1 1.300 1.900 1.300-.8.400-1.600.500-2.600.300z" fill="#fa4f5a"/></svg>
<span style="top:1542.24px;font-size:6.1px;line-height:7.32px;color:#6c6f85;letter-spacing:0.2px;left:279.1px;">Lorem ipsum dolor sit amet lorem non</span>
<span style="top:1552.24px;font-size:6.1px;line-height:7.32px;color:#6c6f85;letter-spacing:0.18px;left:279.1px;">consectetur adipiscing elit vulputate</span>
<div style="left:416.3px;top:1504px;width:137.6px;height:79.6px;background:#fff;border-radius:4px;box-shadow:0 1px 5px rgba(20,30,80,.04);"></div>
<div style="left:428.6px;top:1515.8px;width:18px;height:18px;background:#dfe6f5;border-radius:50%;overflow:hidden;"><div style="left:6px;top:3.500px;width:6px;height:7px;border-radius:50%;background:#e6c3a8"></div><div style="left:5.600px;top:2.600px;width:6.800px;height:3.400px;border-radius:3px 3px 0 0;background:#d9b37a"></div><div style="left:3px;top:11px;width:12px;height:9px;border-radius:5px 5px 0 0;background:#f0f3fa"></div></div>
<span style="top:1516.82px;font-size:5.8px;line-height:6.96px;color:#171b2e;font-weight:700;letter-spacing:0.2px;left:451.4px;">Sandy Houston</span>
<span style="top:1526.06px;font-size:5.9px;line-height:7.08px;color:#6c6f85;letter-spacing:0.29px;left:451.4px;">Miami, FL</span>
<div style="left:528.9px;top:1518.2px;width:11.4px;height:11.4px;background:#fff;border-radius:2px;box-shadow:0 .5px 2px rgba(20,30,80,.08);"></div>
<svg style="left:531.40px;top:1520.70px" width="6.400" height="6.400" viewBox="0 0 10 10"><path d="M5.600 10V5.800h1.300l.2-1.600H5.600V3.300c0-.5.200-.8.800-.8h.8V1.100C7 1.100 6.500 1 6 1 4.800 1 4 1.700 4 3v1.200H2.800v1.600H4V10z" fill="#fa4f5a"/></svg>
<span style="top:1542.24px;font-size:6.1px;line-height:7.32px;color:#6c6f85;letter-spacing:0.22px;left:428.2px;">Metus ipsum</span>
<span style="top:1552.24px;font-size:6.1px;line-height:7.32px;color:#6c6f85;letter-spacing:0.17px;left:428.2px;">iaculis a</span></div>
</div>
</div>
</body></html>
